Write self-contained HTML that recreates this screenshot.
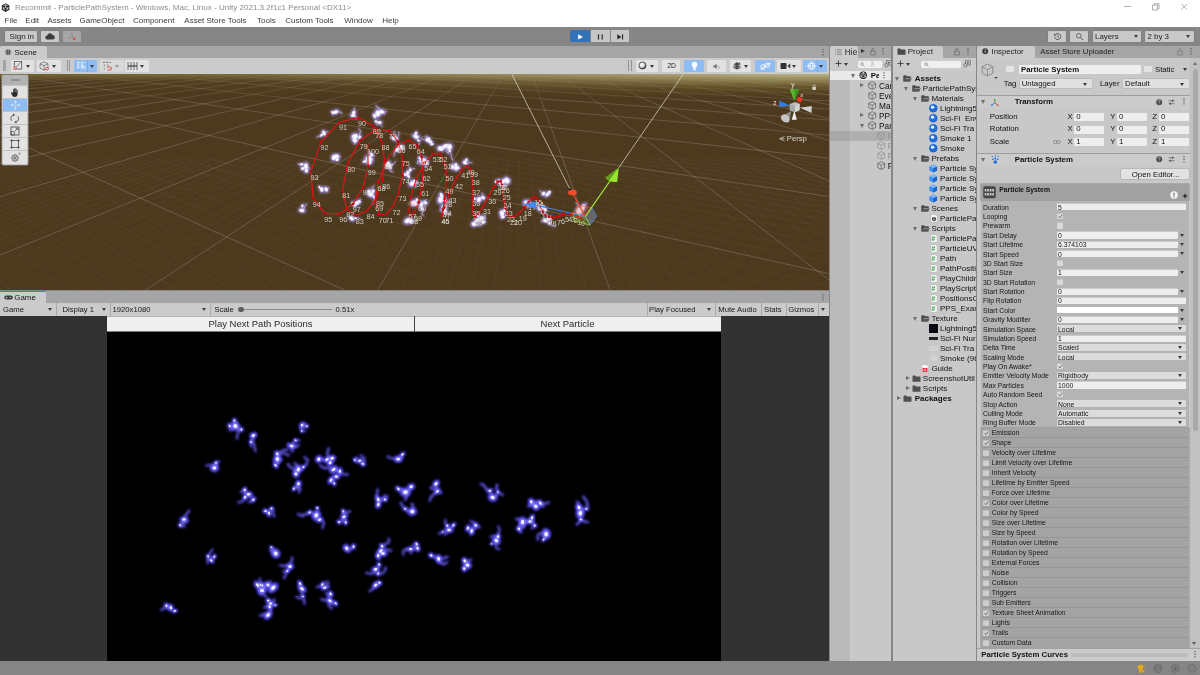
<!DOCTYPE html>
<html><head><meta charset="utf-8"><title>Unity</title>
<style>
*{box-sizing:border-box;margin:0;padding:0}
html,body{width:1200px;height:675px;overflow:hidden;background:#fff}
body{position:relative;font-family:"Liberation Sans",sans-serif;font-size:7.7px;color:#161616;line-height:1}
.abs{position:absolute}
.t{position:absolute;white-space:nowrap;line-height:10px;height:10px}
svg{position:absolute;display:block;overflow:visible}
#title{position:absolute;left:0;top:0;width:1200px;height:27px;background:#fff}
#title .cap{position:absolute;left:15px;top:2.9px;font-size:8.05px;color:#8c8c8c;line-height:10px;white-space:nowrap}
#title .mi{position:absolute;top:16px;font-size:8px;color:#3c3c3c;line-height:10px;white-space:nowrap}
#maintb{position:absolute;left:0;top:27px;width:1200px;height:18.5px;background:#868686}
.btn{position:absolute;background:#c9c9c9;border-radius:1px;box-shadow:0 0 0 .5px #7a7a7a}
.tabbar{position:absolute;background:#a5a5a5;height:12px}
.tab{position:absolute;top:0;height:12px;background:#cbcbcb;border-radius:2px 2px 0 0}
.tb{position:absolute;background:#cbcbcb}
.panel{position:absolute;background:#c8c8c8;overflow:hidden}
#scene{position:absolute;left:0;top:73.5px;width:828.5px;height:216px;overflow:hidden;background:#4c3a1d}
#game{position:absolute;left:0;top:315.5px;width:828.5px;height:345.5px;overflow:hidden;background:#323232}
#status{position:absolute;left:0;top:661px;width:1200px;height:14px;background:#858585}
.sb{position:absolute;background:#e2e2e2;border-radius:1px}
.sbb{position:absolute;background:#8fbcf3;border-radius:1px}
.fld{position:absolute;background:#eeeeee;border-radius:1px;box-shadow:inset 0 .5px 0 #a8a8a8}
.dd{position:absolute;background:#dfdfdf;border-radius:1px;box-shadow:0 0 0 .4px #b0b0b0}
.cb{position:absolute;background:#e6e6e6;border-radius:1px;box-shadow:inset 0 .5px 0 #b0b0b0}
.arr{position:absolute;width:0;height:0;border-left:2.9px solid transparent;border-right:2.9px solid transparent;border-top:3.5px solid #3c3c3c;margin-left:-.3px}
.arrr{position:absolute;width:0;height:0;border-top:2.7px solid transparent;border-bottom:2.7px solid transparent;border-left:4.2px solid #6e6e6e}
.arrd{position:absolute;width:0;height:0;border-left:2.8px solid transparent;border-right:2.800px solid transparent;border-top:4.3px solid #6e6e6e}
.b{font-weight:bold}
.ps{font-size:6.8px}
#root{position:absolute;left:0;top:0;width:1200px;height:675px;will-change:transform;overflow:hidden}

</style></head>
<body>
<div id="root">
<div id="title">
<svg style="left:1.4px;top:3px" width="9.2" height="9.2" viewBox="0 0 18 18"><path d="M9 .5 16.4 4.7v8.6L9 17.5 1.6 13.3V4.7z" fill="#222"/><path d="M9 3.2v5.2M9 8.6 4.3 11.4M9 8.6l4.7 2.8M5.2 5.2 9 3.2l3.8 2M4.3 7.5v3.9l3.4 2M13.7 7.5v3.9l-3.4 2" stroke="#fff" stroke-width="1.3" fill="none"/></svg>
<div class="cap">Recommit - ParticlePathSystem - Windows, Mac, Linux - Unity 2021.3.2f1c1 Personal &lt;DX11&gt;</div>
<div class="mi" style="left:4.5px">File</div>
<div class="mi" style="left:25.3px">Edit</div>
<div class="mi" style="left:47.5px">Assets</div>
<div class="mi" style="left:79.5px">GameObject</div>
<div class="mi" style="left:133px">Component</div>
<div class="mi" style="left:184.3px">Asset Store Tools</div>
<div class="mi" style="left:257px">Tools</div>
<div class="mi" style="left:285.3px">Custom Tools</div>
<div class="mi" style="left:344.3px">Window</div>
<div class="mi" style="left:382.3px">Help</div>
<svg style="left:1120px;top:0" width="80" height="14" viewBox="0 0 80 14"><path d="M4 6.5h7" stroke="#9a9a9a" stroke-width=".8"/><path d="M32.5 5h5v5h-5z M34 5v-1.3h5v5h-1.4" stroke="#9a9a9a" stroke-width=".8" fill="none"/><path d="M61.5 4l5.5 5.5M67 4l-5.5 5.5" stroke="#9a9a9a" stroke-width=".8"/></svg>
</div>
<div class="abs" style="left:0;top:27px;width:1200px;height:648px;background:#868686"></div>
<div id="maintb">
<div class="btn" style="left:5px;top:3.8px;width:32px;height:11.2px"></div>
<div class="t " style="left:9.6px;top:4.90px;font-size:8px;color:#222">Sign in</div>
<div class="btn" style="left:41px;top:3.8px;width:18px;height:11.2px"></div>
<svg style="left:45px;top:5.8px" width="10" height="7" viewBox="0 0 20 14"><path d="M5 13a4 4 0 0 1-.6-8A5.5 5.5 0 0 1 15 4.2 4.4 4.4 0 0 1 15.5 13z" fill="#3c3c3c"/></svg>
<div class="btn" style="left:63px;top:3.8px;width:18px;height:11.2px;background:#a6a6a6;box-shadow:none"></div>
<svg style="left:67px;top:5px" width="10" height="9" viewBox="0 0 20 18"><path d="M10 3v6M10 9 4.5 12M10 9l5 3" stroke="#8c8c8c" stroke-width="1.6" fill="none"/><circle cx="10" cy="3" r="1.8" fill="#8c8c8c"/><circle cx="4" cy="12" r="1.8" fill="#8c8c8c"/><path d="M12 11l5 5M17 11l-5 5" stroke="#d0393b" stroke-width="2"/></svg>
<div class="btn" style="left:570.3px;top:3.2px;width:20px;height:11.9px;background:#3473b6;box-shadow:none;border-radius:1px 0 0 1px"></div>
<div class="btn" style="left:590.7px;top:3.2px;width:19.5px;height:11.9px;background:#c6c6c6;box-shadow:none;border-radius:0"></div>
<div class="btn" style="left:610.7px;top:3.2px;width:18.5px;height:11.9px;background:#c6c6c6;box-shadow:none;border-radius:0 1px 1px 0"></div>
<svg style="left:570px;top:3.5px" width="60" height="11.6" viewBox="0 0 60 11.6"><path d="M8.2 3.2v5.4l4.8-2.7z" fill="#fff"/><path d="M28.5 3.3v5.2M32.2 3.3v5.2" stroke="#2a2a2a" stroke-width="1.2"/><path d="M47.3 3.2v5.4l4.2-2.7z" fill="#2a2a2a"/><path d="M52.6 3.2v5.4" stroke="#2a2a2a" stroke-width="1.1"/></svg>
<div class="btn" style="left:1048px;top:3.8px;width:18px;height:11px"></div>
<svg style="left:1052.5px;top:5px" width="9" height="9" viewBox="0 0 18 18"><path d="M3.5 9a6 6 0 1 0 2-4.4" stroke="#3c3c3c" stroke-width="1.5" fill="none"/><path d="M2.2 3.2l.6 4.2 4-1.2z" fill="#3c3c3c"/><path d="M9.5 5.5V9.3l2.6 1.6" stroke="#3c3c3c" stroke-width="1.4" fill="none"/></svg>
<div class="btn" style="left:1070px;top:3.8px;width:18.3px;height:11px"></div>
<svg style="left:1074.5px;top:5px" width="9" height="9" viewBox="0 0 18 18"><circle cx="7.5" cy="7.5" r="4.6" stroke="#4a4a4a" stroke-width="1.5" fill="none"/><path d="M11 11l5 5" stroke="#4a4a4a" stroke-width="1.8"/></svg>
<div class="btn" style="left:1092.5px;top:3.8px;width:48.8px;height:11px"></div>
<div class="t " style="left:1095px;top:4.80px;font-size:7.9px;color:#222">Layers</div>
<div class="arr" style="left:1134px;top:8px"></div>
<div class="btn" style="left:1145px;top:3.8px;width:48.7px;height:11px"></div>
<div class="t " style="left:1147.5px;top:4.80px;font-size:7.9px;color:#222">2 by 3</div>
<div class="arr" style="left:1186.5px;top:8px"></div>
</div>
<div class="tabbar" style="left:0;top:45.5px;width:828.5px"><div class="tab" style="left:0;width:47px"></div></div>
<svg style="left:4.5px;top:48.8px" width="6.4" height="6.4" viewBox="0 0 16 16"><path d="M.5 5.500h15M.5 10.500h15M5.500 .5v15M10.500 .5v15" stroke="#333" stroke-width="2"/></svg>
<div class="t " style="left:14.6px;top:47.60px;font-size:7.9px">Scene</div>
<svg style="left:822.3px;top:48.5px" width="2" height="7" viewBox="0 0 2 7"><rect x=".4" y=".2" width="1.2" height="1.2" fill="#555"/><rect x=".4" y="2.7" width="1.2" height="1.2" fill="#555"/><rect x=".4" y="5.2" width="1.2" height="1.2" fill="#555"/></svg>
<div class="tb" style="left:0;top:57.5px;width:828.5px;height:16px"></div>
<div class="tabbar" style="left:0;top:290.5px;width:828.5px"><div class="tab" style="left:0;width:45.5px;border-top:1px solid #3f7ecb;border-radius:1px 1px 0 0"></div></div>
<svg style="left:3.5px;top:294.8px" width="9" height="5" viewBox="0 0 18 10"><rect x=".5" y="1" width="17" height="8" rx="4" fill="#3a3a3a"/><circle cx="5" cy="5" r="1.7" fill="#cbcbcb"/><circle cx="12.5" cy="5" r="1.4" fill="#cbcbcb"/></svg>
<div class="t " style="left:14.3px;top:292.90px;font-size:7.9px">Game</div>
<svg style="left:822.3px;top:293.5px" width="2" height="7" viewBox="0 0 2 7"><rect x=".4" y=".2" width="1.2" height="1.2" fill="#555"/><rect x=".4" y="2.7" width="1.2" height="1.2" fill="#555"/><rect x=".4" y="5.2" width="1.2" height="1.2" fill="#555"/></svg>
<div class="tb" style="left:0;top:302.5px;width:828.5px;height:13px"></div>
<div class="abs" style="left:3px;top:60.1px;width:3.3px;height:10.9px;background:#a2a2a2;border-radius:.5px"></div>
<div class="sb" style="left:10.7px;top:59.5px;width:23.3px;height:12.3px"></div>
<div class="sb" style="left:36.5px;top:59.5px;width:24.0px;height:12.3px"></div>
<div class="abs" style="left:66.7px;top:59.8px;width:1.2px;height:11.700000000000001px;background:#939393"></div><div class="abs" style="left:69.0px;top:59.8px;width:1.2px;height:11.700000000000001px;background:#939393"></div>
<div class="sbb" style="left:73.8px;top:59.5px;width:23.2px;height:12.3px"></div>
<div class="sb" style="left:99.5px;top:59.5px;width:24.0px;height:12.3px;background:#d9d9d9"></div>
<div class="sb" style="left:125px;top:59.5px;width:23.5px;height:12.3px"></div>
<svg style="left:12.5px;top:61.3px" width="10" height="9" viewBox="0 0 20 18"><rect x="2.5" y="1" width="15" height="15" fill="none" stroke="#444" stroke-width="1.4"/><path d="M4 14.5 16 2.5" stroke="#444" stroke-width="1.3"/><circle cx="4" cy="14.5" r="2.6" fill="#e2e2e2" stroke="#d8343a" stroke-width="1.6"/></svg>
<div class="arr" style="left:26px;top:64.5px"></div>
<svg style="left:38.5px;top:60.8px" width="11" height="10" viewBox="0 0 22 20"><path d="M10 1.5 18 5.5v9L10 18.5 2 14.5v-9z M2 5.5l8 4 8-4M10 9.5v9" fill="none" stroke="#555" stroke-width="1.3"/><circle cx="16" cy="15.5" r="2.8" fill="#e2e2e2" stroke="#d8343a" stroke-width="1.6"/></svg>
<div class="arr" style="left:52px;top:64.5px"></div>
<svg style="left:76px;top:61px" width="11" height="10" viewBox="0 0 22 20"><path d="M2 3h5M9.5 3h5M17 3h3M2 8h5M9.5 8h5M2 13h5M4.500 1v14M12 1v9" stroke="#eef5ff" stroke-width="1.5"/><path d="M12.5 10v7M9.500 13l3-3 3 3M15.500 9l3.500 7" stroke="#fff" stroke-width="1.5" fill="none"/></svg>
<div class="abs" style="left:87.3px;top:59.5px;width:.6px;height:12.3px;background:#78a8e0"></div>
<div class="arr" style="left:90px;top:64.5px"></div>
<svg style="left:101.5px;top:61px" width="11" height="10" viewBox="0 0 22 20"><path d="M2 3h3M8 3h4M15 3h3M4.500 1v3M4.500 7v4M4.500 14v3M11.500 1v3M11.500 7v3" stroke="#666" stroke-width="1.5"/><path d="M10 12h6a3 3 0 0 1 0 6h-5" stroke="#d8343a" stroke-width="1.7" fill="none"/></svg>
<div class="arr" style="left:115.5px;top:64.5px;border-top-color:#9a9a9a"></div>
<svg style="left:126.500px;top:61px" width="11" height="10" viewBox="0 0 22 20"><path d="M2 2v16M20 2v16M8 2v16M14 2v16" stroke="#444" stroke-width="1.5"/><path d="M2 10h18" stroke="#444" stroke-width="2.4"/></svg>
<div class="arr" style="left:140px;top:64.5px"></div>
<div class="abs" style="left:628.3px;top:59.8px;width:1.2px;height:11.700000000000001px;background:#939393"></div><div class="abs" style="left:630.5999999999999px;top:59.8px;width:1.2px;height:11.700000000000001px;background:#939393"></div>
<div class="sb" style="left:635.6px;top:59.5px;width:22.9px;height:12.3px"></div>
<div class="sb" style="left:661.8px;top:59.5px;width:18.7px;height:12.3px"></div>
<div class="sbb" style="left:683.8px;top:59.5px;width:20.2px;height:12.3px"></div>
<div class="sb" style="left:707px;top:59.5px;width:19.4px;height:12.3px"></div>
<div class="sb" style="left:729.7px;top:59.5px;width:21.5px;height:12.3px"></div>
<div class="sbb" style="left:754.8px;top:59.5px;width:19.8px;height:12.3px"></div>
<div class="sb" style="left:777.4px;top:59.5px;width:23.3px;height:12.3px"></div>
<div class="sbb" style="left:803.4px;top:59.5px;width:23.4px;height:12.3px"></div>
<svg style="left:637.5px;top:61.2px" width="9" height="9" viewBox="0 0 18 18"><defs><radialGradient id="sh" cx=".38" cy=".35" r=".7"><stop offset="0" stop-color="#fff"/><stop offset=".55" stop-color="#ddd"/><stop offset="1" stop-color="#222"/></radialGradient></defs><circle cx="9" cy="9" r="7" fill="url(#sh)" stroke="#333" stroke-width="1.6"/></svg>
<div class="arr" style="left:650px;top:64.5px"></div>
<div class="t " style="left:667.3px;top:61.20px;font-size:6.8px;color:#222;letter-spacing:-.2px">2D</div>
<svg style="left:689.500px;top:60.8px" width="9" height="10" viewBox="0 0 18 20"><path d="M9 1.5a5.800 5.800 0 0 0-3.300 10.600v2.400h6.600v-2.400A5.800 5.800 0 0 0 9 1.500z" fill="#fff"/><rect x="6.200" y="15.500" width="5.600" height="2.800" rx="1" fill="#fff"/></svg>
<svg style="left:712px;top:61.5px" width="10" height="9" viewBox="0 0 20 18"><path d="M3 6.500h3l3.500-3v10.500l-3.500-3H3z" fill="#777"/><path d="M12 6.500v4M14.500 9v5" stroke="#999" stroke-width="1.4"/></svg>
<svg style="left:731.500px;top:61.2px" width="10" height="10" viewBox="0 0 20 20"><path d="M2 13l8 3.500 8-3.500M2 9.500l8 3.500 8-3.500M10 3 4 6.500l6 3 6-3z" fill="#444" stroke="#444" stroke-width="1"/><path d="M14 2.500l3 2-3 2" fill="#444"/></svg>
<div class="arr" style="left:743.800px;top:64.5px"></div>
<svg style="left:758.500px;top:61px" width="13" height="10" viewBox="0 0 26 20"><ellipse cx="8" cy="12" rx="4.200" ry="4.600" fill="none" stroke="#fff" stroke-width="1.8"/><ellipse cx="16.500" cy="8.500" rx="4.600" ry="4.200" fill="none" stroke="#fff" stroke-width="1.8"/><path d="M3 17 23 3.500" stroke="#fff" stroke-width="1.8"/></svg>
<svg style="left:779.500px;top:61.8px" width="11" height="8" viewBox="0 0 22 16"><rect x="1" y="2" width="12" height="12" rx="1.500" fill="#333"/><path d="M15 8l5.500-5v10z" fill="#333"/></svg>
<div class="arr" style="left:792.500px;top:64.5px"></div>
<svg style="left:806px;top:60.8px" width="11" height="10" viewBox="0 0 22 20"><circle cx="11" cy="10" r="6.500" fill="none" stroke="#fff" stroke-width="1.700"/><ellipse cx="11" cy="10" rx="2.800" ry="6.500" fill="none" stroke="#fff" stroke-width="1.300"/><path d="M4.500 10h13M11 1v4M1.500 10h3M17.500 10h3" stroke="#fff" stroke-width="1.400"/></svg>
<div class="abs" style="left:817.200px;top:59.5px;width:.6px;height:12.3px;background:#78a8e0"></div>
<div class="arr" style="left:819.700px;top:64.5px"></div>
<div id="scene"><svg style="left:0;top:0" width="828.5" height="216" viewBox="0 0 828.5 216">
<defs><linearGradient id="fogv" x1="0" y1="0" x2="0" y2="1"><stop offset="0" stop-color="#7d6c34" stop-opacity=".8"/><stop offset="1" stop-color="#8a7a3c" stop-opacity="0"/></linearGradient><linearGradient id="fogv2" x1="0" y1="0" x2="0" y2="1"><stop offset="0" stop-color="#b9b189" stop-opacity=".97"/><stop offset=".28" stop-color="#9c8f5c" stop-opacity=".8"/><stop offset=".6" stop-color="#7d6a36" stop-opacity=".4"/><stop offset="1" stop-color="#6a5527" stop-opacity="0"/></linearGradient><linearGradient id="fogh" x1="0" y1="0" x2="1" y2="0"><stop offset="0" stop-color="#fff" stop-opacity="0"/><stop offset=".3" stop-color="#fff" stop-opacity=".12"/><stop offset=".7" stop-color="#fff" stop-opacity=".7"/><stop offset=".92" stop-color="#fff" stop-opacity="1"/></linearGradient><mask id="mh"><rect x="0" y="0" width="829" height="30" fill="url(#fogh)"/></mask><filter id="bl" x="-50%" y="-50%" width="200%" height="200%"><feGaussianBlur stdDeviation=".8"/></filter><filter id="bl2" x="-50%" y="-50%" width="200%" height="200%"><feGaussianBlur stdDeviation=".5"/></filter><filter id="bl3" x="-50%" y="-50%" width="200%" height="200%"><feGaussianBlur stdDeviation=".3"/></filter></defs>
<rect x="0" y="0" width="828.5" height="216" fill="#4d3a1e"/>
<path d="M-7889.7 1646.5L-45.1 82.8M-5758.8 1245.7L-42.8 84.5M-6869.8 1500.8L-40.4 86.3M-8536.1 1883.3L-17.7 83.8M-6013.0 1378.4L-14.9 85.5M-7322.9 1695.8L7.1 83.1M-5283.1 1274.1L10.2 84.8M-7908.4 1947.9L35.1 84.0M-5492.9 1413.1L38.6 85.7M-6721.8 1748.2L59.5 83.3M-4785.8 1303.8L63.5 85.0M-5752.8 1585.1L83.7 82.6M-7236.8 2016.9L88.0 84.2M-4946.6 1449.5L92.4 86.0M-6083.0 1803.8L112.2 83.5M-4265.3 1334.8L116.9 85.2M-3682.0 1236.7L141.1 84.5M-4371.9 1487.8L146.3 86.2M-5402.9 1863.0L165.1 83.7M-3720.0 1367.4L170.6 85.4M-4505.4 1679.3L188.7 83.0M-3163.9 1264.6L194.5 84.7M-3766.7 1528.1L200.5 86.4M-4677.5 1926.2L218.1 83.9M-3148.1 1401.5L224.5 85.7M-2622.5 1293.9L248.1 84.9M-3128.5 1570.6L264.4 82.5M-3902.1 1993.7L271.4 84.2M-2547.6 1437.3L278.5 85.9M-3103.7 1785.1L294.4 83.4M-2056.0 1324.5L301.8 85.1M-2454.5 1615.6L317.1 82.7M-1634.6 1227.7L324.8 84.4M-1916.2 1475.0L332.8 86.1M-1462.7 1356.5L355.8 85.4M-1741.5 1663.1L370.0 82.9M-1075.3 1255.3L378.5 84.6M-1251.6 1514.6L387.3 86.3M-1516.9 1904.9L400.9 83.9M-840.6 1390.1L410.0 85.6M-986.1 1713.4L423.1 83.1M-491.0 1284.1L432.4 84.8M-551.0 1556.4L442.1 86.6M-187.7 1425.3L464.4 85.8M-184.4 1766.8L476.3 83.4M120.1 1314.2L486.5 85.1M188.6 1600.5L497.9 82.6M384.2 1218.9L508.3 84.3M498.4 1462.4L519.1 86.0M667.9 1823.6L529.8 83.6M759.9 1345.8L540.8 85.3M970.5 1647.1L551.1 82.8M1220.4 1501.3L573.9 86.3M1576.0 1884.2L583.5 83.8M1430.4 1378.8L595.4 85.5M1798.4 1696.5L604.5 83.1M1609.2 1274.5L616.5 84.8M1981.1 1542.4L629.0 86.5M2545.3 1948.8L637.4 84.0M2133.9 1413.5L650.1 85.7M2676.6 1748.9L658.1 83.3M2783.8 1585.7L678.4 82.6M3582.3 2017.9L691.6 84.2M2873.0 1450.0L705.1 86.0M3609.7 1804.6L711.9 83.5M2948.3 1335.3L725.6 85.2M3631.9 1631.5L731.9 82.8M3012.8 1237.0L745.9 84.5M3650.3 1488.3L760.3 86.2M4603.1 1863.8L765.9 83.7M4529.5 1680.0L785.6 83.0M3679.0 1265.0L800.4 84.7M4469.0 1528.6L815.7 86.4M5662.8 1927.0L820.1 83.9M4418.2 1401.9L835.5 85.7M5481.0 1731.3L839.6 83.2M4375.2 1294.3L855.2 84.9M5332.3 1571.2L858.7 82.5M6795.7 1994.6L874.6 84.2M-181.6 82.5L101.1 1661.2M-155.7 83.6L594.0 1930.0M-130.3 82.9L926.8 1753.1M-103.8 84.0L1204.5 1605.6M-78.7 83.3L1847.4 1855.7M-53.8 82.7L2059.5 1691.4M-26.6 83.7L2880.3 1970.7M-2.0 83.0L3009.2 1786.8M25.7 84.1L3116.3 1633.8M74.3 82.8L4089.1 1722.7M102.7 83.8L5263.6 2013.1M126.6 83.2L5171.6 1821.7M150.3 82.5L5095.4 1663.0M179.3 83.6L6383.7 1932.5M202.7 82.9L6193.9 1755.2M232.3 84.0L6035.4 1607.3M255.5 83.3L7418.8 1858.0M278.5 82.7L7145.2 1693.3M331.4 83.1L8378.1 1788.9M362.2 84.1L8032.9 1635.6M384.7 83.4L9755.8 1895.7M407.0 82.8L9269.8 1724.7M438.4 83.8L7275.8 1299.4M460.4 83.2L5286.4 907.9M482.2 82.5L4202.2 694.5M514.2 83.6L3519.9 560.3M535.8 82.9L3050.9 468.0M589.7 83.3L2448.2 349.3M610.8 82.7L2243.1 309.0M644.1 83.7L2077.4 276.4M664.9 83.1L1940.8 249.5M698.8 84.1L1826.2 226.9M719.4 83.5L1728.8 207.8M739.7 82.8L1644.9 191.2M774.2 83.9L1571.9 176.9M794.3 83.2L1507.7 164.3M849.3 83.6L1400.4 143.1M868.9 82.9L1355.1 134.2" stroke="#fff" stroke-opacity=".058" stroke-width=".55" fill="none"/>
<path d="M-63.8 80.3L-14.5 71.0M-61.5 103.7L84.7 70.2M-86.6 148.0L182.1 69.3M-91.3 218.0L271.0 71.2M13.5 302.7L367.8 70.3M332.9 293.4L463.0 69.5M634.9 284.6L557.6 71.4M889.4 252.2L652.1 70.5M904.9 140.7L745.0 69.7M898.7 88.3L845.2 71.6M17.1 68.6L464.3 269.9M241.2 68.7L883.8 211.8M465.9 68.8L878.1 129.8M691.1 68.9L888.5 90.8" stroke="#fff" stroke-opacity="0.24" stroke-width=".75" fill="none"/>
<path d="M-68.9 28.9L-32.6 25.3M-68.3 34.9L21.9 25.0M-67.6 42.4L69.0 25.6M-66.6 51.8L123.4 25.3M-65.4 63.9L177.2 25.1M-14.5 71.0L226.0 25.6M84.7 70.2L279.7 25.4M182.1 69.3L332.8 25.1M271.0 71.2L383.4 25.7M367.8 70.3L436.3 25.4M463.0 69.5L488.8 25.2M557.6 71.4L541.0 25.8M652.1 70.5L593.3 25.5M745.0 69.7L645.0 25.2M845.2 71.6L699.0 25.8M895.4 60.6L750.6 25.6M893.4 43.3L801.6 25.3M892.0 31.6L852.2 25.0M-60.7 33.6L17.1 68.6M44.0 24.8L241.2 68.7M168.4 24.8L465.9 68.8M293.0 24.8L691.1 68.9M417.8 24.9L884.1 66.1M542.7 24.9L881.2 49.9M667.8 24.9L886.7 38.8M793.1 25.0L884.1 30.0" stroke="#fff" stroke-opacity="0.2" stroke-width=".75" fill="none"/>
<path d="M-64.8 7.4L-35.9 5.5M-64.2 9.7L-0.8 5.4M-63.5 12.4L29.3 5.7M-62.7 15.4L64.3 5.6M-61.8 19.0L99.1 5.4M-60.7 23.1L129.9 5.7M-32.6 25.3L164.7 5.6M21.9 25.0L199.2 5.5M69.0 25.6L230.7 5.7M123.4 25.3L265.1 5.6M177.2 25.1L299.4 5.5M226.0 25.6L333.4 5.4M279.7 25.4L365.7 5.6M332.8 25.1L399.7 5.5M383.4 25.7L433.5 5.4M436.3 25.4L466.5 5.6M488.8 25.2L500.2 5.5M541.0 25.8L533.6 5.4M593.3 25.5L567.4 5.7M645.0 25.2L600.8 5.6M699.0 25.8L634.0 5.5M750.6 25.6L668.4 5.7M801.6 25.3L701.5 5.6M852.2 25.0L734.4 5.5M891.0 23.1L769.5 5.7M890.2 16.7L802.4 5.6M889.6 11.7L835.0 5.5M889.2 7.6L867.4 5.4M-43.3 5.3L44.0 24.8M36.9 5.3L168.4 24.8M117.1 5.3L293.0 24.8M197.4 5.4L417.8 24.9M276.1 5.2L542.7 24.9M356.2 5.3L667.8 24.9M436.5 5.3L793.1 25.0M516.8 5.3L888.1 23.5M597.1 5.3L885.9 18.1M677.6 5.3L884.2 13.6M758.1 5.3L887.1 10.1M838.7 5.4L885.5 6.9" stroke="#fff" stroke-opacity="0.14" stroke-width=".75" fill="none"/>
<path d="M-60.9 -6.8L-46.3 -7.4M-60.4 -5.9L-23.9 -7.4M-63.9 -4.8L-4.9 -7.3M-63.4 -3.8L17.4 -7.4M-63.0 -2.6L39.7 -7.4M-62.4 -1.4L61.8 -7.5M-61.8 -0.0L81.2 -7.4M-61.2 1.5L103.3 -7.4M-60.5 3.1L125.4 -7.5M-65.4 5.3L145.0 -7.4M-35.9 5.5L167.0 -7.4M-0.8 5.4L189.0 -7.5M29.3 5.7L208.9 -7.4M64.3 5.6L230.8 -7.4M99.1 5.4L252.6 -7.4M129.9 5.7L272.8 -7.3M164.7 5.6L294.6 -7.4M199.2 5.5L316.3 -7.4M230.7 5.7L337.9 -7.5M265.1 5.6L358.4 -7.4M299.4 5.5L380.0 -7.4M333.4 5.4L401.6 -7.5M365.7 5.6L422.4 -7.4M399.7 5.5L443.8 -7.4M433.5 5.4L465.2 -7.5M466.5 5.6L486.3 -7.4M500.2 5.5L507.7 -7.4M533.6 5.4L529.0 -7.4M567.4 5.7L550.4 -7.4M600.8 5.6L571.6 -7.4M634.0 5.5L592.8 -7.4M668.4 5.7L614.4 -7.3M701.5 5.6L635.6 -7.4M734.4 5.5L656.6 -7.4M769.5 5.7L677.6 -7.5M802.4 5.6L699.6 -7.4M835.0 5.5L720.5 -7.4M867.4 5.4L741.4 -7.5M888.8 4.3L763.7 -7.4M891.7 1.8L784.5 -7.4M891.2 -0.7L805.2 -7.5M890.7 -2.7L827.8 -7.4M890.3 -4.5L848.5 -7.4M890.0 -6.1L869.1 -7.4M-60.1 1.6L-43.3 5.3M-49.9 -7.5L36.9 5.3M1.2 -7.5L117.1 5.3M52.3 -7.5L197.4 5.4M102.7 -7.5L276.1 5.2M153.7 -7.5L356.2 5.3M204.7 -7.5L436.5 5.3M255.8 -7.5L516.8 5.3M306.9 -7.5L597.1 5.3M358.1 -7.5L677.6 5.3M409.2 -7.5L758.1 5.3M460.4 -7.5L838.7 5.4M510.0 -7.5L888.0 4.4M561.1 -7.5L886.6 2.0M612.3 -7.5L885.3 0.0M663.5 -7.5L887.3 -1.7M714.7 -7.5L886.2 -3.3M765.9 -7.5L887.9 -4.7M817.2 -7.5L886.9 -6.0M868.5 -7.5L888.4 -7.1" stroke="#fff" stroke-opacity="0.085" stroke-width=".75" fill="none"/>
<path d="M-62.7 -9.8L-59.4 -9.9M-62.3 -9.1L-39.5 -9.9M-61.9 -8.4L-19.6 -10.0M-61.4 -7.6L0.1 -10.0M-46.3 -7.4L17.1 -9.9M-23.9 -7.4L36.8 -10.0M-4.9 -7.3L56.5 -10.0M17.4 -7.4L73.7 -9.9M39.7 -7.4L93.4 -9.9M61.8 -7.5L113.0 -10.0M81.2 -7.4L130.3 -9.9M103.3 -7.4L149.9 -9.9M125.4 -7.5L169.4 -10.0M145.0 -7.4L187.0 -9.9M167.0 -7.4L206.5 -9.9M189.0 -7.5L225.9 -10.0M208.9 -7.4L245.3 -10.0M230.8 -7.4L263.2 -9.9M252.6 -7.4L282.5 -10.0M272.8 -7.3L301.8 -10.0M294.6 -7.4L319.9 -9.9M316.3 -7.4L339.1 -9.9M337.9 -7.5L358.3 -10.0M358.4 -7.4L376.6 -9.9M380.0 -7.4L395.7 -9.9M401.6 -7.5L414.8 -10.0M422.4 -7.4L433.4 -9.9M443.8 -7.4L452.4 -9.9M465.2 -7.5L471.4 -10.0M486.3 -7.4L490.2 -9.9M507.7 -7.4L509.2 -9.9M529.0 -7.4L528.1 -10.0M550.4 -7.4L546.9 -10.0M571.6 -7.4L565.9 -9.9M592.8 -7.4L584.8 -10.0M614.4 -7.3L603.5 -10.0M635.6 -7.4L622.8 -9.9M656.6 -7.4L641.5 -9.9M677.6 -7.5L660.1 -10.0M699.6 -7.4L679.6 -9.9M720.5 -7.4L698.2 -9.9M741.4 -7.5L716.8 -10.0M763.7 -7.4L736.5 -9.9M784.5 -7.4L755.0 -9.9M805.2 -7.5L773.5 -10.0M827.8 -7.4L791.9 -10.0M848.5 -7.4L811.9 -9.9M869.1 -7.4L830.3 -10.0M889.7 -7.5L848.6 -10.0M889.4 -8.7L868.8 -9.9M889.1 -9.8L887.1 -9.9M-60.2 -9.0L-49.9 -7.5M-21.5 -10.0L1.2 -7.5M23.4 -10.0L52.3 -7.5M68.7 -10.0L102.7 -7.5M114.0 -10.0L153.7 -7.5M159.4 -10.0L204.7 -7.5M204.7 -10.0L255.8 -7.5M250.1 -10.0L306.9 -7.5M295.5 -10.0L358.1 -7.5M341.0 -10.0L409.2 -7.5M385.2 -10.0L460.4 -7.5M430.6 -10.0L510.0 -7.5M476.0 -10.0L561.1 -7.5M521.5 -10.0L612.3 -7.5M566.9 -10.0L663.5 -7.5M612.4 -10.0L714.7 -7.5M657.9 -10.0L765.9 -7.5M703.4 -10.0L817.2 -7.5M748.9 -10.0L868.5 -7.5M792.5 -10.0L887.4 -8.1M838.0 -10.0L886.5 -9.1M883.5 -10.0L887.9 -9.9" stroke="#fff" stroke-opacity="0.045" stroke-width=".75" fill="none"/>
<rect x="0" y="0" width="829" height="7" fill="url(#fogv)"/>
<rect x="0" y="0" width="829" height="24" fill="url(#fogv2)" mask="url(#mh)"/>
<path d="M512 0.5L570 115.19999999999999M683 0.5L618.7 93.80000000000001" stroke="#e8e4da" stroke-opacity=".85" stroke-width=".8" fill="none"/>
<g filter="url(#bl)"><path d="M335.7 38.0L335.2 37.7L332.9 38.5M332.9 38.5L332.6 40.9M335.7 38.0L338.8 37.8L341.1 38.1L341.8 39.8" stroke="#a28de0" stroke-width="2.32" stroke-opacity="0.50" fill="none" stroke-linecap="round" stroke-linejoin="round"/><ellipse cx="335.7" cy="38.0" rx="4.26" ry="2.93" transform="rotate(155 335.7 38.0)" fill="#a28de0" fill-opacity="0.85"/><ellipse cx="332.9" cy="38.5" rx="3.18" ry="2.02" transform="rotate(26 332.9 38.5)" fill="#a28de0" fill-opacity="0.85"/><path d="M353.0 41.5L353.5 40.4L353.7 38.8M353.7 38.8L354.5 36.5L354.3 33.7M353.0 41.5L355.5 43.1L356.5 45.0M353.0 41.5L355.2 41.5L356.6 43.4" stroke="#a28de0" stroke-width="2.31" stroke-opacity="0.50" fill="none" stroke-linecap="round" stroke-linejoin="round"/><ellipse cx="353.0" cy="41.5" rx="3.84" ry="2.40" transform="rotate(173 353.0 41.5)" fill="#a28de0" fill-opacity="0.85"/><ellipse cx="353.7" cy="38.8" rx="3.39" ry="2.84" transform="rotate(100 353.7 38.8)" fill="#a28de0" fill-opacity="0.85"/><path d="M377.8 39.5L378.6 39.2L381.6 37.9M377.8 39.5L376.5 42.0L374.5 42.0M381.6 37.9L379.8 34.9L377.5 33.0L375.7 31.5M381.6 37.9L384.5 39.9M381.6 37.9L383.9 38.6L386.3 37.3" stroke="#a28de0" stroke-width="2.64" stroke-opacity="0.50" fill="none" stroke-linecap="round" stroke-linejoin="round"/><ellipse cx="377.8" cy="39.5" rx="5.31" ry="4.31" transform="rotate(99 377.8 39.5)" fill="#a28de0" fill-opacity="0.85"/><ellipse cx="381.6" cy="37.9" rx="4.13" ry="3.32" transform="rotate(178 381.6 37.9)" fill="#a28de0" fill-opacity="0.85"/><ellipse cx="374.5" cy="42.0" rx="3.78" ry="2.53" transform="rotate(68 374.5 42.0)" fill="#a28de0" fill-opacity="0.85"/><path d="M379.5 48.5L376.8 47.8L376.0 47.4M376.0 47.4L378.6 48.8L380.3 50.8L382.4 52.7M376.0 47.4L375.9 49.9L377.2 51.0M379.5 48.5L378.2 49.6" stroke="#a28de0" stroke-width="2.17" stroke-opacity="0.50" fill="none" stroke-linecap="round" stroke-linejoin="round"/><ellipse cx="379.5" cy="48.5" rx="3.77" ry="2.43" transform="rotate(0 379.5 48.5)" fill="#a28de0" fill-opacity="0.85"/><ellipse cx="376.0" cy="47.4" rx="2.44" ry="1.73" transform="rotate(18 376.0 47.4)" fill="#a28de0" fill-opacity="0.85"/><path d="M324.0 59.0L322.1 60.7L321.6 61.0M321.6 61.0L320.0 63.0M321.6 61.0L320.6 62.3L318.3 62.0L316.5 63.4M324.0 59.0L326.5 57.8L328.4 57.7" stroke="#a28de0" stroke-width="2.13" stroke-opacity="0.50" fill="none" stroke-linecap="round" stroke-linejoin="round"/><ellipse cx="324.0" cy="59.0" rx="4.18" ry="2.72" transform="rotate(66 324.0 59.0)" fill="#a28de0" fill-opacity="0.85"/><ellipse cx="321.6" cy="61.0" rx="2.56" ry="1.95" transform="rotate(139 321.6 61.0)" fill="#a28de0" fill-opacity="0.85"/><path d="M355.0 62.5L356.6 62.8L359.7 63.2M355.0 62.5L355.5 65.7L354.8 66.4M359.7 63.2L359.0 65.6L356.4 67.4L354.3 70.2M355.0 62.5L355.6 64.9M359.7 63.2L359.6 60.5L360.6 57.3L358.8 54.9" stroke="#a28de0" stroke-width="2.61" stroke-opacity="0.50" fill="none" stroke-linecap="round" stroke-linejoin="round"/><ellipse cx="355.0" cy="62.5" rx="5.17" ry="4.31" transform="rotate(164 355.0 62.5)" fill="#a28de0" fill-opacity="0.85"/><ellipse cx="359.7" cy="63.2" rx="2.81" ry="2.09" transform="rotate(135 359.7 63.2)" fill="#a28de0" fill-opacity="0.85"/><ellipse cx="354.8" cy="66.4" rx="4.02" ry="3.36" transform="rotate(32 354.8 66.4)" fill="#a28de0" fill-opacity="0.85"/><path d="M334.0 83.5L335.7 83.1L336.7 82.2M334.0 83.5L335.8 84.6L337.2 85.7M334.0 83.5L331.9 85.5M337.2 85.7L337.0 83.8L338.7 82.7L340.5 83.1M334.0 83.5L332.3 85.0" stroke="#a28de0" stroke-width="2.32" stroke-opacity="0.50" fill="none" stroke-linecap="round" stroke-linejoin="round"/><ellipse cx="334.0" cy="83.5" rx="4.36" ry="3.71" transform="rotate(98 334.0 83.5)" fill="#a28de0" fill-opacity="0.85"/><ellipse cx="336.7" cy="82.2" rx="3.91" ry="3.21" transform="rotate(11 336.7 82.2)" fill="#a28de0" fill-opacity="0.85"/><ellipse cx="337.2" cy="85.7" rx="2.98" ry="2.38" transform="rotate(162 337.2 85.7)" fill="#a28de0" fill-opacity="0.85"/><path d="M306.0 92.2L306.1 94.9L306.4 96.5M306.0 92.2L304.5 92.9L302.7 94.5M306.0 92.2L303.8 91.4L301.4 90.3M306.0 92.2L307.8 93.3L309.6 94.2M306.0 92.2L303.7 90.3L301.3 90.3L298.0 90.1" stroke="#a28de0" stroke-width="2.63" stroke-opacity="0.50" fill="none" stroke-linecap="round" stroke-linejoin="round"/><ellipse cx="306.0" cy="92.2" rx="4.88" ry="3.29" transform="rotate(91 306.0 92.2)" fill="#a28de0" fill-opacity="0.85"/><ellipse cx="306.4" cy="96.5" rx="3.49" ry="3.01" transform="rotate(94 306.4 96.5)" fill="#a28de0" fill-opacity="0.85"/><ellipse cx="302.7" cy="94.5" rx="2.81" ry="2.46" transform="rotate(167 302.7 94.5)" fill="#a28de0" fill-opacity="0.85"/><ellipse cx="301.4" cy="90.3" rx="2.79" ry="1.84" transform="rotate(161 301.4 90.3)" fill="#a28de0" fill-opacity="0.85"/><path d="M321.7 115.5L319.8 114.8L319.4 113.2M321.7 115.5L324.3 114.6L326.2 115.4M319.4 113.2L320.4 115.5M326.2 115.4L328.9 113.6" stroke="#a28de0" stroke-width="2.40" stroke-opacity="0.50" fill="none" stroke-linecap="round" stroke-linejoin="round"/><ellipse cx="321.7" cy="115.5" rx="4.02" ry="2.92" transform="rotate(73 321.7 115.5)" fill="#a28de0" fill-opacity="0.85"/><ellipse cx="319.4" cy="113.2" rx="2.36" ry="1.48" transform="rotate(64 319.4 113.2)" fill="#a28de0" fill-opacity="0.85"/><ellipse cx="326.2" cy="115.4" rx="3.86" ry="2.71" transform="rotate(66 326.2 115.4)" fill="#a28de0" fill-opacity="0.85"/><path d="M301.8 136.5L303.1 133.5L302.4 131.7M301.8 136.5L300.1 137.6M301.8 136.5L303.8 135.6L304.9 132.6L306.4 130.1" stroke="#a28de0" stroke-width="2.41" stroke-opacity="0.50" fill="none" stroke-linecap="round" stroke-linejoin="round"/><ellipse cx="301.8" cy="136.5" rx="4.40" ry="2.72" transform="rotate(16 301.8 136.5)" fill="#a28de0" fill-opacity="0.85"/><ellipse cx="302.4" cy="131.7" rx="2.44" ry="1.77" transform="rotate(124 302.4 131.7)" fill="#a28de0" fill-opacity="0.85"/><path d="M351.5 144.5L354.3 144.2L355.6 144.2M355.6 144.2L357.3 143.9L360.1 144.6M351.5 144.5L352.6 146.2M355.6 144.2L353.4 144.8" stroke="#a28de0" stroke-width="2.16" stroke-opacity="0.50" fill="none" stroke-linecap="round" stroke-linejoin="round"/><ellipse cx="351.5" cy="144.5" rx="4.27" ry="3.01" transform="rotate(32 351.5 144.5)" fill="#a28de0" fill-opacity="0.85"/><ellipse cx="355.6" cy="144.2" rx="2.11" ry="1.43" transform="rotate(3 355.6 144.2)" fill="#a28de0" fill-opacity="0.85"/><path d="M356.7 129.0L355.0 130.0L352.5 129.0M356.7 129.0L357.8 128.9L359.5 127.4M356.7 129.0L356.2 130.6L354.9 131.6M359.5 127.4L360.5 125.2M359.5 127.4L358.9 130.1M359.5 127.4L357.4 127.1L355.6 128.3L354.3 130.8" stroke="#a28de0" stroke-width="2.12" stroke-opacity="0.50" fill="none" stroke-linecap="round" stroke-linejoin="round"/><ellipse cx="356.7" cy="129.0" rx="4.09" ry="3.13" transform="rotate(175 356.7 129.0)" fill="#a28de0" fill-opacity="0.85"/><ellipse cx="352.5" cy="129.0" rx="2.14" ry="1.90" transform="rotate(44 352.5 129.0)" fill="#a28de0" fill-opacity="0.85"/><ellipse cx="359.5" cy="127.4" rx="2.77" ry="1.96" transform="rotate(56 359.5 127.4)" fill="#a28de0" fill-opacity="0.85"/><ellipse cx="354.9" cy="131.6" rx="2.79" ry="1.99" transform="rotate(0 354.9 131.6)" fill="#a28de0" fill-opacity="0.85"/><path d="M370.7 120.2L370.9 119.8L369.0 117.8M370.7 120.2L371.2 119.5L373.3 117.1M370.7 120.2L372.9 121.8L373.8 122.9M373.8 122.9L374.6 124.8L373.6 127.5L372.7 129.8M369.0 117.8L371.8 116.6L372.1 113.7L374.0 111.6M369.0 117.8L371.3 117.2" stroke="#a28de0" stroke-width="2.42" stroke-opacity="0.50" fill="none" stroke-linecap="round" stroke-linejoin="round"/><ellipse cx="370.7" cy="120.2" rx="4.81" ry="4.09" transform="rotate(19 370.7 120.2)" fill="#a28de0" fill-opacity="0.85"/><ellipse cx="369.0" cy="117.8" rx="3.74" ry="2.95" transform="rotate(101 369.0 117.8)" fill="#a28de0" fill-opacity="0.85"/><ellipse cx="373.3" cy="117.1" rx="2.96" ry="2.38" transform="rotate(113 373.3 117.1)" fill="#a28de0" fill-opacity="0.85"/><ellipse cx="373.8" cy="122.9" rx="2.40" ry="1.44" transform="rotate(88 373.8 122.9)" fill="#a28de0" fill-opacity="0.85"/><path d="M369.0 85.2L366.8 87.2L364.8 87.5M369.0 85.2L369.2 84.0L371.6 80.9M369.0 85.2L368.6 85.8L369.3 88.7M364.8 87.5L367.8 87.9M371.6 80.9L369.6 81.5M371.6 80.9L374.5 81.6M371.6 80.9L370.7 78.3L367.5 77.0" stroke="#a28de0" stroke-width="2.62" stroke-opacity="0.50" fill="none" stroke-linecap="round" stroke-linejoin="round"/><ellipse cx="369.0" cy="85.2" rx="5.59" ry="5.00" transform="rotate(36 369.0 85.2)" fill="#a28de0" fill-opacity="0.85"/><ellipse cx="364.8" cy="87.5" rx="3.38" ry="2.04" transform="rotate(169 364.8 87.5)" fill="#a28de0" fill-opacity="0.85"/><ellipse cx="371.6" cy="80.9" rx="2.90" ry="2.45" transform="rotate(83 371.6 80.9)" fill="#a28de0" fill-opacity="0.85"/><ellipse cx="369.3" cy="88.7" rx="3.73" ry="2.74" transform="rotate(174 369.3 88.7)" fill="#a28de0" fill-opacity="0.85"/><path d="M388.0 90.5L388.5 91.1L390.1 92.3M390.1 92.3L391.4 90.3L393.6 89.9L395.5 87.4M390.1 92.3L389.7 94.5L390.3 97.3L393.0 98.0M390.1 92.3L391.1 95.1M390.1 92.3L390.8 95.4" stroke="#a28de0" stroke-width="2.28" stroke-opacity="0.50" fill="none" stroke-linecap="round" stroke-linejoin="round"/><ellipse cx="388.0" cy="90.5" rx="4.90" ry="3.47" transform="rotate(106 388.0 90.5)" fill="#a28de0" fill-opacity="0.85"/><ellipse cx="390.1" cy="92.3" rx="3.42" ry="2.33" transform="rotate(77 390.1 92.3)" fill="#a28de0" fill-opacity="0.85"/><path d="M393.5 64.2L394.7 64.0L396.2 64.6M396.2 64.6L397.8 62.3L399.1 61.0L398.6 58.1M396.2 64.6L394.2 64.6M393.5 64.2L393.9 62.0L393.6 60.0L394.7 57.3" stroke="#a28de0" stroke-width="2.14" stroke-opacity="0.50" fill="none" stroke-linecap="round" stroke-linejoin="round"/><ellipse cx="393.5" cy="64.2" rx="3.50" ry="2.79" transform="rotate(47 393.5 64.2)" fill="#a28de0" fill-opacity="0.85"/><ellipse cx="396.2" cy="64.6" rx="3.57" ry="2.74" transform="rotate(54 396.2 64.6)" fill="#a28de0" fill-opacity="0.85"/><path d="M400.5 73.0L398.6 74.0L397.0 75.8M397.0 75.8L398.9 76.4M400.5 73.0L400.8 75.6L398.8 77.7M397.0 75.8L395.2 77.2L394.2 78.8L394.1 82.0" stroke="#a28de0" stroke-width="2.36" stroke-opacity="0.50" fill="none" stroke-linecap="round" stroke-linejoin="round"/><ellipse cx="400.5" cy="73.0" rx="4.69" ry="3.52" transform="rotate(23 400.5 73.0)" fill="#a28de0" fill-opacity="0.85"/><ellipse cx="397.0" cy="75.8" rx="3.18" ry="2.73" transform="rotate(113 397.0 75.8)" fill="#a28de0" fill-opacity="0.85"/><path d="M416.0 62.5L415.8 61.3L416.0 59.1M416.0 62.5L417.8 65.5L418.3 66.5M416.0 62.5L417.0 65.4L418.4 66.6L420.8 66.4M418.3 66.5L419.5 69.1L418.8 70.7L417.3 71.6M416.0 62.5L415.6 64.6" stroke="#a28de0" stroke-width="2.25" stroke-opacity="0.50" fill="none" stroke-linecap="round" stroke-linejoin="round"/><ellipse cx="416.0" cy="62.5" rx="4.80" ry="3.24" transform="rotate(23 416.0 62.5)" fill="#a28de0" fill-opacity="0.85"/><ellipse cx="416.0" cy="59.1" rx="2.62" ry="2.12" transform="rotate(115 416.0 59.1)" fill="#a28de0" fill-opacity="0.85"/><ellipse cx="418.3" cy="66.5" rx="2.31" ry="1.43" transform="rotate(20 418.3 66.5)" fill="#a28de0" fill-opacity="0.85"/><path d="M430.0 67.5L429.5 65.2L428.7 65.1M430.0 67.5L430.8 69.2L432.0 70.2M430.0 67.5L427.5 66.1L427.0 66.0M427.0 66.0L429.1 68.5M428.7 65.1L426.4 66.0L424.3 66.0L421.9 64.2M430.0 67.5L432.0 69.9M428.7 65.1L426.6 64.3L426.0 61.7" stroke="#a28de0" stroke-width="2.45" stroke-opacity="0.50" fill="none" stroke-linecap="round" stroke-linejoin="round"/><ellipse cx="430.0" cy="67.5" rx="4.20" ry="2.80" transform="rotate(34 430.0 67.5)" fill="#a28de0" fill-opacity="0.85"/><ellipse cx="428.7" cy="65.1" rx="3.27" ry="2.62" transform="rotate(75 428.7 65.1)" fill="#a28de0" fill-opacity="0.85"/><ellipse cx="432.0" cy="70.2" rx="2.86" ry="1.84" transform="rotate(171 432.0 70.2)" fill="#a28de0" fill-opacity="0.85"/><ellipse cx="427.0" cy="66.0" rx="3.25" ry="2.16" transform="rotate(71 427.0 66.0)" fill="#a28de0" fill-opacity="0.85"/><path d="M440.7 74.5L442.1 72.6L444.5 72.6M440.7 74.5L438.5 76.5M444.5 72.6L447.2 74.9L446.6 77.6L448.0 79.3" stroke="#a28de0" stroke-width="2.74" stroke-opacity="0.50" fill="none" stroke-linecap="round" stroke-linejoin="round"/><ellipse cx="440.7" cy="74.5" rx="5.06" ry="3.67" transform="rotate(15 440.7 74.5)" fill="#a28de0" fill-opacity="0.85"/><ellipse cx="444.5" cy="72.6" rx="4.02" ry="3.09" transform="rotate(159 444.5 72.6)" fill="#a28de0" fill-opacity="0.85"/><path d="M449.5 73.0L448.8 74.7L449.7 77.0M449.5 73.0L448.7 71.2L445.9 71.8M449.5 73.0L448.3 71.4L444.9 71.4M449.7 77.0L448.4 79.1M449.7 77.0L451.1 79.8L451.3 83.2L452.8 86.0" stroke="#a28de0" stroke-width="2.60" stroke-opacity="0.50" fill="none" stroke-linecap="round" stroke-linejoin="round"/><ellipse cx="449.5" cy="73.0" rx="4.71" ry="3.97" transform="rotate(107 449.5 73.0)" fill="#a28de0" fill-opacity="0.85"/><ellipse cx="449.7" cy="77.0" rx="2.51" ry="1.55" transform="rotate(170 449.7 77.0)" fill="#a28de0" fill-opacity="0.85"/><ellipse cx="445.9" cy="71.8" rx="4.22" ry="2.67" transform="rotate(149 445.9 71.8)" fill="#a28de0" fill-opacity="0.85"/><path d="M423.0 87.0L422.2 86.4L420.2 84.2M423.0 87.0L425.1 88.1L425.9 88.6M420.2 84.2L419.4 86.3L417.5 87.6L417.5 89.6M425.9 88.6L425.1 85.4M423.0 87.0L424.4 89.2" stroke="#a28de0" stroke-width="2.57" stroke-opacity="0.50" fill="none" stroke-linecap="round" stroke-linejoin="round"/><ellipse cx="423.0" cy="87.0" rx="5.57" ry="4.96" transform="rotate(178 423.0 87.0)" fill="#a28de0" fill-opacity="0.85"/><ellipse cx="420.2" cy="84.2" rx="3.35" ry="2.14" transform="rotate(31 420.2 84.2)" fill="#a28de0" fill-opacity="0.85"/><ellipse cx="425.9" cy="88.6" rx="3.95" ry="3.43" transform="rotate(83 425.9 88.6)" fill="#a28de0" fill-opacity="0.85"/><path d="M407.5 99.2L408.2 98.4L410.3 95.9M407.5 99.2L408.2 100.4L408.5 102.4M407.5 99.2L405.9 100.9L404.8 100.6M410.3 95.9L409.4 92.9M407.5 99.2L409.6 101.3M407.5 99.2L407.4 97.2M410.3 95.9L412.1 95.1L414.8 94.6" stroke="#a28de0" stroke-width="2.26" stroke-opacity="0.50" fill="none" stroke-linecap="round" stroke-linejoin="round"/><ellipse cx="407.5" cy="99.2" rx="4.76" ry="2.86" transform="rotate(120 407.5 99.2)" fill="#a28de0" fill-opacity="0.85"/><ellipse cx="410.3" cy="95.9" rx="2.60" ry="2.12" transform="rotate(115 410.3 95.9)" fill="#a28de0" fill-opacity="0.85"/><ellipse cx="408.5" cy="102.4" rx="3.37" ry="2.06" transform="rotate(63 408.5 102.4)" fill="#a28de0" fill-opacity="0.85"/><ellipse cx="404.8" cy="100.6" rx="2.52" ry="1.55" transform="rotate(61 404.8 100.6)" fill="#a28de0" fill-opacity="0.85"/><path d="M412.7 109.5L414.3 107.6L414.9 107.3M412.7 109.5L413.1 111.6L415.5 113.0M412.7 109.5L411.7 106.9M414.9 107.3L412.2 107.8L410.9 110.9" stroke="#a28de0" stroke-width="2.75" stroke-opacity="0.50" fill="none" stroke-linecap="round" stroke-linejoin="round"/><ellipse cx="412.7" cy="109.5" rx="5.39" ry="3.90" transform="rotate(159 412.7 109.5)" fill="#a28de0" fill-opacity="0.85"/><ellipse cx="414.9" cy="107.3" rx="3.24" ry="2.69" transform="rotate(3 414.9 107.3)" fill="#a28de0" fill-opacity="0.85"/><path d="M414.5 129.0L414.9 126.5L417.1 126.0M417.1 126.0L416.1 127.8M414.5 129.0L411.5 129.1L408.8 129.9M414.5 129.0L412.4 131.8M414.5 129.0L413.2 132.1" stroke="#a28de0" stroke-width="2.63" stroke-opacity="0.50" fill="none" stroke-linecap="round" stroke-linejoin="round"/><ellipse cx="414.5" cy="129.0" rx="4.81" ry="4.21" transform="rotate(8 414.5 129.0)" fill="#a28de0" fill-opacity="0.85"/><ellipse cx="417.1" cy="126.0" rx="2.75" ry="2.15" transform="rotate(57 417.1 126.0)" fill="#a28de0" fill-opacity="0.85"/><path d="M407.5 146.5L408.4 146.7L410.6 147.3M410.6 147.3L413.9 147.8M407.5 146.5L407.3 149.9" stroke="#a28de0" stroke-width="2.52" stroke-opacity="0.50" fill="none" stroke-linecap="round" stroke-linejoin="round"/><ellipse cx="407.5" cy="146.5" rx="5.38" ry="3.54" transform="rotate(147 407.5 146.5)" fill="#a28de0" fill-opacity="0.85"/><ellipse cx="410.6" cy="147.3" rx="3.84" ry="3.28" transform="rotate(159 410.6 147.3)" fill="#a28de0" fill-opacity="0.85"/><path d="M421.5 130.5L423.9 129.5L425.5 128.7M421.5 130.5L421.7 131.5L422.1 134.7M425.5 128.7L422.5 127.6L420.4 127.0M425.5 128.7L425.2 131.3M421.5 130.5L422.2 128.6L423.4 127.0L426.3 125.8M422.1 134.7L422.7 137.6L421.9 139.4L423.4 141.9" stroke="#a28de0" stroke-width="2.54" stroke-opacity="0.50" fill="none" stroke-linecap="round" stroke-linejoin="round"/><ellipse cx="421.5" cy="130.5" rx="4.25" ry="2.69" transform="rotate(125 421.5 130.5)" fill="#a28de0" fill-opacity="0.85"/><ellipse cx="425.5" cy="128.7" rx="2.95" ry="2.55" transform="rotate(24 425.5 128.7)" fill="#a28de0" fill-opacity="0.85"/><ellipse cx="422.1" cy="134.7" rx="3.18" ry="2.68" transform="rotate(52 422.1 134.7)" fill="#a28de0" fill-opacity="0.85"/><path d="M444.0 136.5L443.5 135.6L444.0 133.2M444.0 133.2L442.1 134.6L440.0 136.0M444.0 136.5L447.1 138.2L449.2 140.9" stroke="#a28de0" stroke-width="2.62" stroke-opacity="0.50" fill="none" stroke-linecap="round" stroke-linejoin="round"/><ellipse cx="444.0" cy="136.5" rx="4.30" ry="3.59" transform="rotate(30 444.0 136.5)" fill="#a28de0" fill-opacity="0.85"/><ellipse cx="444.0" cy="133.2" rx="4.22" ry="3.20" transform="rotate(21 444.0 133.2)" fill="#a28de0" fill-opacity="0.85"/><path d="M440.7 125.5L441.7 123.0L441.5 121.1M440.7 125.5L442.4 125.4L444.8 126.0M441.5 121.1L440.7 123.1M444.8 126.0L446.8 126.9L449.4 129.3" stroke="#a28de0" stroke-width="2.52" stroke-opacity="0.50" fill="none" stroke-linecap="round" stroke-linejoin="round"/><ellipse cx="440.7" cy="125.5" rx="5.48" ry="4.38" transform="rotate(105 440.7 125.5)" fill="#a28de0" fill-opacity="0.85"/><ellipse cx="441.5" cy="121.1" rx="4.05" ry="2.43" transform="rotate(56 441.5 121.1)" fill="#a28de0" fill-opacity="0.85"/><ellipse cx="444.8" cy="126.0" rx="3.98" ry="2.56" transform="rotate(6 444.8 126.0)" fill="#a28de0" fill-opacity="0.85"/><path d="M456.5 94.0L454.1 93.6L452.6 93.1M456.5 94.0L456.2 92.4L455.8 91.1M455.8 91.1L457.0 93.5L460.2 94.5M456.5 94.0L453.9 92.8L452.8 89.9M452.6 93.1L450.9 90.4" stroke="#a28de0" stroke-width="2.51" stroke-opacity="0.50" fill="none" stroke-linecap="round" stroke-linejoin="round"/><ellipse cx="456.5" cy="94.0" rx="4.64" ry="3.61" transform="rotate(161 456.5 94.0)" fill="#a28de0" fill-opacity="0.85"/><ellipse cx="452.6" cy="93.1" rx="3.49" ry="2.73" transform="rotate(104 452.6 93.1)" fill="#a28de0" fill-opacity="0.85"/><ellipse cx="455.8" cy="91.1" rx="3.41" ry="2.55" transform="rotate(93 455.8 91.1)" fill="#a28de0" fill-opacity="0.85"/><path d="M465.0 88.5L466.2 86.1L466.3 85.8M465.0 88.5L466.5 90.6M466.3 85.8L467.0 84.2M465.0 88.5L467.2 90.0L469.7 88.6L472.0 88.7M466.3 85.8L468.4 87.2" stroke="#a28de0" stroke-width="2.22" stroke-opacity="0.50" fill="none" stroke-linecap="round" stroke-linejoin="round"/><ellipse cx="465.0" cy="88.5" rx="3.61" ry="3.13" transform="rotate(22 465.0 88.5)" fill="#a28de0" fill-opacity="0.85"/><ellipse cx="466.3" cy="85.8" rx="2.16" ry="1.90" transform="rotate(167 466.3 85.8)" fill="#a28de0" fill-opacity="0.85"/><path d="M474.0 150.0L474.8 148.6L476.5 146.6M474.0 150.0L474.3 147.0M474.0 150.0L475.7 151.1L478.1 151.9L481.0 152.0" stroke="#a28de0" stroke-width="2.28" stroke-opacity="0.50" fill="none" stroke-linecap="round" stroke-linejoin="round"/><ellipse cx="474.0" cy="150.0" rx="4.01" ry="3.59" transform="rotate(166 474.0 150.0)" fill="#a28de0" fill-opacity="0.85"/><ellipse cx="476.5" cy="146.6" rx="3.02" ry="2.30" transform="rotate(151 476.5 146.6)" fill="#a28de0" fill-opacity="0.85"/><path d="M481.0 144.5L481.1 145.4L483.4 148.1M481.0 144.5L480.6 145.0L478.3 146.2M481.0 144.5L478.2 142.1L477.1 141.8M483.4 148.1L481.6 147.7L479.4 149.9L477.3 150.4M481.0 144.5L482.9 144.9L484.7 144.1L485.1 141.0" stroke="#a28de0" stroke-width="2.41" stroke-opacity="0.50" fill="none" stroke-linecap="round" stroke-linejoin="round"/><ellipse cx="481.0" cy="144.5" rx="4.86" ry="3.84" transform="rotate(146 481.0 144.5)" fill="#a28de0" fill-opacity="0.85"/><ellipse cx="483.4" cy="148.1" rx="3.29" ry="2.59" transform="rotate(149 483.4 148.1)" fill="#a28de0" fill-opacity="0.85"/><ellipse cx="478.3" cy="146.2" rx="3.38" ry="2.13" transform="rotate(52 478.3 146.2)" fill="#a28de0" fill-opacity="0.85"/><ellipse cx="477.1" cy="141.8" rx="2.51" ry="2.07" transform="rotate(18 477.1 141.8)" fill="#a28de0" fill-opacity="0.85"/><path d="M479.0 125.5L477.0 125.0L474.6 124.6M479.0 125.5L480.6 125.1L483.1 123.7M479.0 125.5L477.0 127.3M483.1 123.7L482.4 122.0L483.1 120.2L481.7 118.7M479.0 125.5L480.7 123.5L483.7 123.0" stroke="#a28de0" stroke-width="2.24" stroke-opacity="0.50" fill="none" stroke-linecap="round" stroke-linejoin="round"/><ellipse cx="479.0" cy="125.5" rx="4.04" ry="3.59" transform="rotate(107 479.0 125.5)" fill="#a28de0" fill-opacity="0.85"/><ellipse cx="474.6" cy="124.6" rx="2.16" ry="1.67" transform="rotate(93 474.6 124.6)" fill="#a28de0" fill-opacity="0.85"/><ellipse cx="483.1" cy="123.7" rx="3.39" ry="2.87" transform="rotate(29 483.1 123.7)" fill="#a28de0" fill-opacity="0.85"/><path d="M507.0 106.5L505.9 107.5L503.8 107.1M503.8 107.1L500.3 107.0L497.9 105.5M507.0 106.5L506.1 110.0L505.5 112.6M507.0 106.5L510.2 105.6M507.0 106.5L504.8 109.3L503.3 111.8" stroke="#a28de0" stroke-width="2.71" stroke-opacity="0.50" fill="none" stroke-linecap="round" stroke-linejoin="round"/><ellipse cx="507.0" cy="106.5" rx="5.15" ry="3.80" transform="rotate(58 507.0 106.5)" fill="#a28de0" fill-opacity="0.85"/><ellipse cx="503.8" cy="107.1" rx="4.14" ry="2.80" transform="rotate(124 503.8 107.1)" fill="#a28de0" fill-opacity="0.85"/><path d="M500.0 108.0L500.3 108.5L502.1 110.0M500.0 108.0L497.5 108.0L495.7 107.9M500.0 108.0L500.1 111.0M500.0 108.0L502.2 108.4L503.2 111.0L502.8 113.3" stroke="#a28de0" stroke-width="2.26" stroke-opacity="0.50" fill="none" stroke-linecap="round" stroke-linejoin="round"/><ellipse cx="500.0" cy="108.0" rx="4.24" ry="3.36" transform="rotate(35 500.0 108.0)" fill="#a28de0" fill-opacity="0.85"/><ellipse cx="502.1" cy="110.0" rx="2.61" ry="1.73" transform="rotate(19 502.1 110.0)" fill="#a28de0" fill-opacity="0.85"/><ellipse cx="495.7" cy="107.9" rx="2.36" ry="1.44" transform="rotate(70 495.7 107.9)" fill="#a28de0" fill-opacity="0.85"/><path d="M502.0 139.5L504.1 137.9L504.4 136.7M502.0 139.5L502.6 141.8L502.8 143.0M502.0 139.5L502.9 136.7L505.0 134.5L507.5 133.4M504.4 136.7L502.5 136.9L499.7 137.9M502.8 143.0L501.1 141.3" stroke="#a28de0" stroke-width="2.37" stroke-opacity="0.50" fill="none" stroke-linecap="round" stroke-linejoin="round"/><ellipse cx="502.0" cy="139.5" rx="4.76" ry="3.75" transform="rotate(82 502.0 139.5)" fill="#a28de0" fill-opacity="0.85"/><ellipse cx="504.4" cy="136.7" rx="2.45" ry="1.97" transform="rotate(74 504.4 136.7)" fill="#a28de0" fill-opacity="0.85"/><ellipse cx="502.8" cy="143.0" rx="3.53" ry="2.31" transform="rotate(167 502.8 143.0)" fill="#a28de0" fill-opacity="0.85"/><path d="M526.5 129.0L527.1 129.3L529.3 128.3M529.3 128.3L531.2 129.4L532.9 130.3L534.0 132.5M529.3 128.3L528.3 131.0L527.9 134.1" stroke="#a28de0" stroke-width="2.53" stroke-opacity="0.50" fill="none" stroke-linecap="round" stroke-linejoin="round"/><ellipse cx="526.5" cy="129.0" rx="4.64" ry="4.15" transform="rotate(22 526.5 129.0)" fill="#a28de0" fill-opacity="0.85"/><ellipse cx="529.3" cy="128.3" rx="3.39" ry="2.09" transform="rotate(64 529.3 128.3)" fill="#a28de0" fill-opacity="0.85"/><path d="M547.5 120.2L545.4 120.9L543.6 119.6M547.5 120.2L549.5 120.2L549.4 118.1M543.6 119.6L542.5 120.9M549.4 118.1L549.9 120.1L548.3 121.7L545.7 123.0M543.6 119.6L541.2 118.6L539.8 116.6" stroke="#a28de0" stroke-width="2.29" stroke-opacity="0.50" fill="none" stroke-linecap="round" stroke-linejoin="round"/><ellipse cx="547.5" cy="120.2" rx="3.75" ry="2.51" transform="rotate(141 547.5 120.2)" fill="#a28de0" fill-opacity="0.85"/><ellipse cx="543.6" cy="119.6" rx="3.30" ry="2.66" transform="rotate(127 543.6 119.6)" fill="#a28de0" fill-opacity="0.85"/><ellipse cx="549.4" cy="118.1" rx="2.65" ry="2.13" transform="rotate(177 549.4 118.1)" fill="#a28de0" fill-opacity="0.85"/><path d="M545.7 146.5L546.9 145.3L549.0 144.6M545.7 146.5L546.7 148.1L549.5 149.3M545.7 146.5L544.1 145.6L541.4 147.5M549.5 149.3L550.7 151.0L553.5 152.1L555.5 152.2M549.0 144.6L550.4 142.1" stroke="#a28de0" stroke-width="2.42" stroke-opacity="0.50" fill="none" stroke-linecap="round" stroke-linejoin="round"/><ellipse cx="545.7" cy="146.5" rx="4.39" ry="2.75" transform="rotate(176 545.7 146.5)" fill="#a28de0" fill-opacity="0.85"/><ellipse cx="549.0" cy="144.6" rx="3.39" ry="2.59" transform="rotate(162 549.0 144.6)" fill="#a28de0" fill-opacity="0.85"/><ellipse cx="549.5" cy="149.3" rx="2.53" ry="1.74" transform="rotate(115 549.5 149.3)" fill="#a28de0" fill-opacity="0.85"/><path d="M540.5 134.2L542.3 134.2L545.1 135.4M545.1 135.4L541.9 135.6M545.1 135.4L544.9 138.5" stroke="#a28de0" stroke-width="2.43" stroke-opacity="0.50" fill="none" stroke-linecap="round" stroke-linejoin="round"/><ellipse cx="540.5" cy="134.2" rx="4.65" ry="3.97" transform="rotate(1 540.5 134.2)" fill="#a28de0" fill-opacity="0.85"/><ellipse cx="545.1" cy="135.4" rx="3.28" ry="2.52" transform="rotate(84 545.1 135.4)" fill="#a28de0" fill-opacity="0.85"/><path d="M579.0 137.5L580.6 137.5L581.3 135.5M579.0 137.5L578.6 140.1L579.1 140.4M581.3 135.5L579.9 138.2M579.1 140.4L579.0 142.9M581.3 135.5L582.8 133.9L584.3 131.8L586.5 129.4M581.3 135.5L580.1 137.9L580.2 140.6" stroke="#a28de0" stroke-width="2.54" stroke-opacity="0.50" fill="none" stroke-linecap="round" stroke-linejoin="round"/><ellipse cx="579.0" cy="137.5" rx="4.63" ry="3.69" transform="rotate(175 579.0 137.5)" fill="#a28de0" fill-opacity="0.85"/><ellipse cx="581.3" cy="135.5" rx="3.58" ry="2.51" transform="rotate(143 581.3 135.5)" fill="#a28de0" fill-opacity="0.85"/><ellipse cx="579.1" cy="140.4" rx="3.53" ry="2.44" transform="rotate(57 579.1 140.4)" fill="#a28de0" fill-opacity="0.85"/><path d="M583.0 133.5L579.8 134.1L578.6 135.6M583.0 133.5L583.4 136.4L581.8 139.2M578.6 135.6L577.3 133.0L578.0 131.1L576.3 128.8" stroke="#a28de0" stroke-width="2.49" stroke-opacity="0.50" fill="none" stroke-linecap="round" stroke-linejoin="round"/><ellipse cx="583.0" cy="133.5" rx="5.14" ry="3.35" transform="rotate(113 583.0 133.5)" fill="#a28de0" fill-opacity="0.85"/><ellipse cx="578.6" cy="135.6" rx="3.34" ry="2.87" transform="rotate(119 578.6 135.6)" fill="#a28de0" fill-opacity="0.85"/></g><g filter="url(#bl2)"><path d="M335.7 38.0L335.2 37.7L332.9 38.5M332.9 38.5L332.6 40.9M335.7 38.0L338.8 37.8L341.1 38.1L341.8 39.8" stroke="#ebe5ff" stroke-width="0.72" stroke-opacity="0.62" fill="none" stroke-linecap="round" stroke-linejoin="round"/><ellipse cx="335.7" cy="38.0" rx="2.66" ry="1.83" transform="rotate(155 335.7 38.0)" fill="#ebe5ff" fill-opacity=".9"/><ellipse cx="332.9" cy="38.5" rx="1.99" ry="1.26" transform="rotate(26 332.9 38.5)" fill="#ebe5ff" fill-opacity=".9"/><path d="M353.0 41.5L353.5 40.4L353.7 38.8M353.7 38.8L354.5 36.5L354.3 33.7M353.0 41.5L355.5 43.1L356.5 45.0M353.0 41.5L355.2 41.5L356.6 43.4" stroke="#ebe5ff" stroke-width="0.72" stroke-opacity="0.62" fill="none" stroke-linecap="round" stroke-linejoin="round"/><ellipse cx="353.0" cy="41.5" rx="2.40" ry="1.50" transform="rotate(173 353.0 41.5)" fill="#ebe5ff" fill-opacity=".9"/><ellipse cx="353.7" cy="38.8" rx="2.12" ry="1.77" transform="rotate(100 353.7 38.8)" fill="#ebe5ff" fill-opacity=".9"/><path d="M377.8 39.5L378.6 39.2L381.6 37.9M377.8 39.5L376.5 42.0L374.5 42.0M381.6 37.9L379.8 34.9L377.5 33.0L375.7 31.5M381.6 37.9L384.5 39.9M381.6 37.9L383.9 38.6L386.3 37.3" stroke="#ebe5ff" stroke-width="0.82" stroke-opacity="0.62" fill="none" stroke-linecap="round" stroke-linejoin="round"/><ellipse cx="377.8" cy="39.5" rx="3.32" ry="2.69" transform="rotate(99 377.8 39.5)" fill="#ebe5ff" fill-opacity=".9"/><ellipse cx="381.6" cy="37.9" rx="2.58" ry="2.08" transform="rotate(178 381.6 37.9)" fill="#ebe5ff" fill-opacity=".9"/><ellipse cx="374.5" cy="42.0" rx="2.36" ry="1.58" transform="rotate(68 374.5 42.0)" fill="#ebe5ff" fill-opacity=".9"/><path d="M379.5 48.5L376.8 47.8L376.0 47.4M376.0 47.4L378.6 48.8L380.3 50.8L382.4 52.7M376.0 47.4L375.9 49.9L377.2 51.0M379.5 48.5L378.2 49.6" stroke="#ebe5ff" stroke-width="0.68" stroke-opacity="0.62" fill="none" stroke-linecap="round" stroke-linejoin="round"/><ellipse cx="379.5" cy="48.5" rx="2.35" ry="1.52" transform="rotate(0 379.5 48.5)" fill="#ebe5ff" fill-opacity=".9"/><ellipse cx="376.0" cy="47.4" rx="1.53" ry="1.08" transform="rotate(18 376.0 47.4)" fill="#ebe5ff" fill-opacity=".9"/><path d="M324.0 59.0L322.1 60.7L321.6 61.0M321.6 61.0L320.0 63.0M321.6 61.0L320.6 62.3L318.3 62.0L316.5 63.4M324.0 59.0L326.5 57.8L328.4 57.7" stroke="#ebe5ff" stroke-width="0.67" stroke-opacity="0.62" fill="none" stroke-linecap="round" stroke-linejoin="round"/><ellipse cx="324.0" cy="59.0" rx="2.61" ry="1.70" transform="rotate(66 324.0 59.0)" fill="#ebe5ff" fill-opacity=".9"/><ellipse cx="321.6" cy="61.0" rx="1.60" ry="1.22" transform="rotate(139 321.6 61.0)" fill="#ebe5ff" fill-opacity=".9"/><path d="M355.0 62.5L356.6 62.8L359.7 63.2M355.0 62.5L355.5 65.7L354.8 66.4M359.7 63.2L359.0 65.6L356.4 67.4L354.3 70.2M355.0 62.5L355.6 64.9M359.7 63.2L359.6 60.5L360.6 57.3L358.8 54.9" stroke="#ebe5ff" stroke-width="0.82" stroke-opacity="0.62" fill="none" stroke-linecap="round" stroke-linejoin="round"/><ellipse cx="355.0" cy="62.5" rx="3.23" ry="2.70" transform="rotate(164 355.0 62.5)" fill="#ebe5ff" fill-opacity=".9"/><ellipse cx="359.7" cy="63.2" rx="1.76" ry="1.31" transform="rotate(135 359.7 63.2)" fill="#ebe5ff" fill-opacity=".9"/><ellipse cx="354.8" cy="66.4" rx="2.51" ry="2.10" transform="rotate(32 354.8 66.4)" fill="#ebe5ff" fill-opacity=".9"/><path d="M334.0 83.5L335.7 83.1L336.7 82.2M334.0 83.5L335.8 84.6L337.2 85.7M334.0 83.5L331.9 85.5M337.2 85.7L337.0 83.8L338.7 82.7L340.5 83.1M334.0 83.5L332.3 85.0" stroke="#ebe5ff" stroke-width="0.73" stroke-opacity="0.62" fill="none" stroke-linecap="round" stroke-linejoin="round"/><ellipse cx="334.0" cy="83.5" rx="2.73" ry="2.32" transform="rotate(98 334.0 83.5)" fill="#ebe5ff" fill-opacity=".9"/><ellipse cx="336.7" cy="82.2" rx="2.44" ry="2.01" transform="rotate(11 336.7 82.2)" fill="#ebe5ff" fill-opacity=".9"/><ellipse cx="337.2" cy="85.7" rx="1.86" ry="1.49" transform="rotate(162 337.2 85.7)" fill="#ebe5ff" fill-opacity=".9"/><path d="M306.0 92.2L306.1 94.9L306.4 96.5M306.0 92.2L304.5 92.9L302.7 94.5M306.0 92.2L303.8 91.4L301.4 90.3M306.0 92.2L307.8 93.3L309.6 94.2M306.0 92.2L303.7 90.3L301.3 90.3L298.0 90.1" stroke="#ebe5ff" stroke-width="0.82" stroke-opacity="0.62" fill="none" stroke-linecap="round" stroke-linejoin="round"/><ellipse cx="306.0" cy="92.2" rx="3.05" ry="2.06" transform="rotate(91 306.0 92.2)" fill="#ebe5ff" fill-opacity=".9"/><ellipse cx="306.4" cy="96.5" rx="2.18" ry="1.88" transform="rotate(94 306.4 96.5)" fill="#ebe5ff" fill-opacity=".9"/><ellipse cx="302.7" cy="94.5" rx="1.76" ry="1.54" transform="rotate(167 302.7 94.5)" fill="#ebe5ff" fill-opacity=".9"/><ellipse cx="301.4" cy="90.3" rx="1.74" ry="1.15" transform="rotate(161 301.4 90.3)" fill="#ebe5ff" fill-opacity=".9"/><path d="M321.7 115.5L319.8 114.8L319.4 113.2M321.7 115.5L324.3 114.6L326.2 115.4M319.4 113.2L320.4 115.5M326.2 115.4L328.9 113.6" stroke="#ebe5ff" stroke-width="0.75" stroke-opacity="0.62" fill="none" stroke-linecap="round" stroke-linejoin="round"/><ellipse cx="321.7" cy="115.5" rx="2.51" ry="1.82" transform="rotate(73 321.7 115.5)" fill="#ebe5ff" fill-opacity=".9"/><ellipse cx="319.4" cy="113.2" rx="1.47" ry="0.93" transform="rotate(64 319.4 113.2)" fill="#ebe5ff" fill-opacity=".9"/><ellipse cx="326.2" cy="115.4" rx="2.41" ry="1.69" transform="rotate(66 326.2 115.4)" fill="#ebe5ff" fill-opacity=".9"/><path d="M301.8 136.5L303.1 133.5L302.4 131.7M301.8 136.5L300.1 137.6M301.8 136.5L303.8 135.6L304.9 132.6L306.4 130.1" stroke="#ebe5ff" stroke-width="0.75" stroke-opacity="0.62" fill="none" stroke-linecap="round" stroke-linejoin="round"/><ellipse cx="301.8" cy="136.5" rx="2.75" ry="1.70" transform="rotate(16 301.8 136.5)" fill="#ebe5ff" fill-opacity=".9"/><ellipse cx="302.4" cy="131.7" rx="1.52" ry="1.11" transform="rotate(124 302.4 131.7)" fill="#ebe5ff" fill-opacity=".9"/><path d="M351.5 144.5L354.3 144.2L355.6 144.2M355.6 144.2L357.3 143.9L360.1 144.6M351.5 144.5L352.6 146.2M355.6 144.2L353.4 144.8" stroke="#ebe5ff" stroke-width="0.67" stroke-opacity="0.62" fill="none" stroke-linecap="round" stroke-linejoin="round"/><ellipse cx="351.5" cy="144.5" rx="2.67" ry="1.88" transform="rotate(32 351.5 144.5)" fill="#ebe5ff" fill-opacity=".9"/><ellipse cx="355.6" cy="144.2" rx="1.32" ry="0.89" transform="rotate(3 355.6 144.2)" fill="#ebe5ff" fill-opacity=".9"/><path d="M356.7 129.0L355.0 130.0L352.5 129.0M356.7 129.0L357.8 128.9L359.5 127.4M356.7 129.0L356.2 130.6L354.9 131.6M359.5 127.4L360.5 125.2M359.5 127.4L358.9 130.1M359.5 127.4L357.4 127.1L355.6 128.3L354.3 130.8" stroke="#ebe5ff" stroke-width="0.66" stroke-opacity="0.62" fill="none" stroke-linecap="round" stroke-linejoin="round"/><ellipse cx="356.7" cy="129.0" rx="2.56" ry="1.95" transform="rotate(175 356.7 129.0)" fill="#ebe5ff" fill-opacity=".9"/><ellipse cx="352.5" cy="129.0" rx="1.34" ry="1.19" transform="rotate(44 352.5 129.0)" fill="#ebe5ff" fill-opacity=".9"/><ellipse cx="359.5" cy="127.4" rx="1.73" ry="1.22" transform="rotate(56 359.5 127.4)" fill="#ebe5ff" fill-opacity=".9"/><ellipse cx="354.9" cy="131.6" rx="1.74" ry="1.24" transform="rotate(0 354.9 131.6)" fill="#ebe5ff" fill-opacity=".9"/><path d="M370.7 120.2L370.9 119.8L369.0 117.8M370.7 120.2L371.2 119.5L373.3 117.1M370.7 120.2L372.9 121.8L373.8 122.9M373.8 122.9L374.6 124.8L373.6 127.5L372.7 129.8M369.0 117.8L371.8 116.6L372.1 113.7L374.0 111.6M369.0 117.8L371.3 117.2" stroke="#ebe5ff" stroke-width="0.75" stroke-opacity="0.62" fill="none" stroke-linecap="round" stroke-linejoin="round"/><ellipse cx="370.7" cy="120.2" rx="3.01" ry="2.56" transform="rotate(19 370.7 120.2)" fill="#ebe5ff" fill-opacity=".9"/><ellipse cx="369.0" cy="117.8" rx="2.34" ry="1.84" transform="rotate(101 369.0 117.8)" fill="#ebe5ff" fill-opacity=".9"/><ellipse cx="373.3" cy="117.1" rx="1.85" ry="1.49" transform="rotate(113 373.3 117.1)" fill="#ebe5ff" fill-opacity=".9"/><ellipse cx="373.8" cy="122.9" rx="1.50" ry="0.90" transform="rotate(88 373.8 122.9)" fill="#ebe5ff" fill-opacity=".9"/><path d="M369.0 85.2L366.8 87.2L364.8 87.5M369.0 85.2L369.2 84.0L371.6 80.9M369.0 85.2L368.6 85.8L369.3 88.7M364.8 87.5L367.8 87.9M371.6 80.9L369.6 81.5M371.6 80.9L374.5 81.6M371.6 80.9L370.7 78.3L367.5 77.0" stroke="#ebe5ff" stroke-width="0.82" stroke-opacity="0.62" fill="none" stroke-linecap="round" stroke-linejoin="round"/><ellipse cx="369.0" cy="85.2" rx="3.50" ry="3.12" transform="rotate(36 369.0 85.2)" fill="#ebe5ff" fill-opacity=".9"/><ellipse cx="364.8" cy="87.5" rx="2.11" ry="1.28" transform="rotate(169 364.8 87.5)" fill="#ebe5ff" fill-opacity=".9"/><ellipse cx="371.6" cy="80.9" rx="1.81" ry="1.53" transform="rotate(83 371.6 80.9)" fill="#ebe5ff" fill-opacity=".9"/><ellipse cx="369.3" cy="88.7" rx="2.33" ry="1.71" transform="rotate(174 369.3 88.7)" fill="#ebe5ff" fill-opacity=".9"/><path d="M388.0 90.5L388.5 91.1L390.1 92.3M390.1 92.3L391.4 90.3L393.6 89.9L395.5 87.4M390.1 92.3L389.7 94.5L390.3 97.3L393.0 98.0M390.1 92.3L391.1 95.1M390.1 92.3L390.8 95.4" stroke="#ebe5ff" stroke-width="0.71" stroke-opacity="0.62" fill="none" stroke-linecap="round" stroke-linejoin="round"/><ellipse cx="388.0" cy="90.5" rx="3.06" ry="2.17" transform="rotate(106 388.0 90.5)" fill="#ebe5ff" fill-opacity=".9"/><ellipse cx="390.1" cy="92.3" rx="2.14" ry="1.46" transform="rotate(77 390.1 92.3)" fill="#ebe5ff" fill-opacity=".9"/><path d="M393.5 64.2L394.7 64.0L396.2 64.6M396.2 64.6L397.8 62.3L399.1 61.0L398.6 58.1M396.2 64.6L394.2 64.6M393.5 64.2L393.9 62.0L393.6 60.0L394.7 57.3" stroke="#ebe5ff" stroke-width="0.67" stroke-opacity="0.62" fill="none" stroke-linecap="round" stroke-linejoin="round"/><ellipse cx="393.5" cy="64.2" rx="2.19" ry="1.74" transform="rotate(47 393.5 64.2)" fill="#ebe5ff" fill-opacity=".9"/><ellipse cx="396.2" cy="64.6" rx="2.23" ry="1.71" transform="rotate(54 396.2 64.6)" fill="#ebe5ff" fill-opacity=".9"/><path d="M400.5 73.0L398.6 74.0L397.0 75.8M397.0 75.8L398.9 76.4M400.5 73.0L400.8 75.6L398.8 77.7M397.0 75.8L395.2 77.2L394.2 78.8L394.1 82.0" stroke="#ebe5ff" stroke-width="0.74" stroke-opacity="0.62" fill="none" stroke-linecap="round" stroke-linejoin="round"/><ellipse cx="400.5" cy="73.0" rx="2.93" ry="2.20" transform="rotate(23 400.5 73.0)" fill="#ebe5ff" fill-opacity=".9"/><ellipse cx="397.0" cy="75.8" rx="1.99" ry="1.71" transform="rotate(113 397.0 75.8)" fill="#ebe5ff" fill-opacity=".9"/><path d="M416.0 62.5L415.8 61.3L416.0 59.1M416.0 62.5L417.8 65.5L418.3 66.5M416.0 62.5L417.0 65.4L418.4 66.6L420.8 66.4M418.3 66.5L419.5 69.1L418.8 70.7L417.3 71.6M416.0 62.5L415.6 64.6" stroke="#ebe5ff" stroke-width="0.70" stroke-opacity="0.62" fill="none" stroke-linecap="round" stroke-linejoin="round"/><ellipse cx="416.0" cy="62.5" rx="3.00" ry="2.03" transform="rotate(23 416.0 62.5)" fill="#ebe5ff" fill-opacity=".9"/><ellipse cx="416.0" cy="59.1" rx="1.64" ry="1.33" transform="rotate(115 416.0 59.1)" fill="#ebe5ff" fill-opacity=".9"/><ellipse cx="418.3" cy="66.5" rx="1.44" ry="0.90" transform="rotate(20 418.3 66.5)" fill="#ebe5ff" fill-opacity=".9"/><path d="M430.0 67.5L429.5 65.2L428.7 65.1M430.0 67.5L430.8 69.2L432.0 70.2M430.0 67.5L427.5 66.1L427.0 66.0M427.0 66.0L429.1 68.5M428.7 65.1L426.4 66.0L424.3 66.0L421.9 64.2M430.0 67.5L432.0 69.9M428.7 65.1L426.6 64.3L426.0 61.7" stroke="#ebe5ff" stroke-width="0.76" stroke-opacity="0.62" fill="none" stroke-linecap="round" stroke-linejoin="round"/><ellipse cx="430.0" cy="67.5" rx="2.63" ry="1.75" transform="rotate(34 430.0 67.5)" fill="#ebe5ff" fill-opacity=".9"/><ellipse cx="428.7" cy="65.1" rx="2.04" ry="1.63" transform="rotate(75 428.7 65.1)" fill="#ebe5ff" fill-opacity=".9"/><ellipse cx="432.0" cy="70.2" rx="1.79" ry="1.15" transform="rotate(171 432.0 70.2)" fill="#ebe5ff" fill-opacity=".9"/><ellipse cx="427.0" cy="66.0" rx="2.03" ry="1.35" transform="rotate(71 427.0 66.0)" fill="#ebe5ff" fill-opacity=".9"/><path d="M440.7 74.5L442.1 72.6L444.5 72.6M440.7 74.5L438.5 76.5M444.5 72.6L447.2 74.9L446.6 77.6L448.0 79.3" stroke="#ebe5ff" stroke-width="0.85" stroke-opacity="0.62" fill="none" stroke-linecap="round" stroke-linejoin="round"/><ellipse cx="440.7" cy="74.5" rx="3.16" ry="2.29" transform="rotate(15 440.7 74.5)" fill="#ebe5ff" fill-opacity=".9"/><ellipse cx="444.5" cy="72.6" rx="2.51" ry="1.93" transform="rotate(159 444.5 72.6)" fill="#ebe5ff" fill-opacity=".9"/><path d="M449.5 73.0L448.8 74.7L449.7 77.0M449.5 73.0L448.7 71.2L445.9 71.8M449.5 73.0L448.3 71.4L444.9 71.4M449.7 77.0L448.4 79.1M449.7 77.0L451.1 79.8L451.3 83.2L452.8 86.0" stroke="#ebe5ff" stroke-width="0.81" stroke-opacity="0.62" fill="none" stroke-linecap="round" stroke-linejoin="round"/><ellipse cx="449.5" cy="73.0" rx="2.94" ry="2.48" transform="rotate(107 449.5 73.0)" fill="#ebe5ff" fill-opacity=".9"/><ellipse cx="449.7" cy="77.0" rx="1.57" ry="0.97" transform="rotate(170 449.7 77.0)" fill="#ebe5ff" fill-opacity=".9"/><ellipse cx="445.9" cy="71.8" rx="2.64" ry="1.67" transform="rotate(149 445.9 71.8)" fill="#ebe5ff" fill-opacity=".9"/><path d="M423.0 87.0L422.2 86.4L420.2 84.2M423.0 87.0L425.1 88.1L425.9 88.6M420.2 84.2L419.4 86.3L417.5 87.6L417.5 89.6M425.9 88.6L425.1 85.4M423.0 87.0L424.4 89.2" stroke="#ebe5ff" stroke-width="0.80" stroke-opacity="0.62" fill="none" stroke-linecap="round" stroke-linejoin="round"/><ellipse cx="423.0" cy="87.0" rx="3.48" ry="3.10" transform="rotate(178 423.0 87.0)" fill="#ebe5ff" fill-opacity=".9"/><ellipse cx="420.2" cy="84.2" rx="2.09" ry="1.34" transform="rotate(31 420.2 84.2)" fill="#ebe5ff" fill-opacity=".9"/><ellipse cx="425.9" cy="88.6" rx="2.47" ry="2.14" transform="rotate(83 425.9 88.6)" fill="#ebe5ff" fill-opacity=".9"/><path d="M407.5 99.2L408.2 98.4L410.3 95.9M407.5 99.2L408.2 100.4L408.5 102.4M407.5 99.2L405.9 100.9L404.8 100.6M410.3 95.9L409.4 92.9M407.5 99.2L409.6 101.3M407.5 99.2L407.4 97.2M410.3 95.9L412.1 95.1L414.8 94.6" stroke="#ebe5ff" stroke-width="0.71" stroke-opacity="0.62" fill="none" stroke-linecap="round" stroke-linejoin="round"/><ellipse cx="407.5" cy="99.2" rx="2.97" ry="1.79" transform="rotate(120 407.5 99.2)" fill="#ebe5ff" fill-opacity=".9"/><ellipse cx="410.3" cy="95.9" rx="1.63" ry="1.32" transform="rotate(115 410.3 95.9)" fill="#ebe5ff" fill-opacity=".9"/><ellipse cx="408.5" cy="102.4" rx="2.10" ry="1.29" transform="rotate(63 408.5 102.4)" fill="#ebe5ff" fill-opacity=".9"/><ellipse cx="404.8" cy="100.6" rx="1.58" ry="0.97" transform="rotate(61 404.8 100.6)" fill="#ebe5ff" fill-opacity=".9"/><path d="M412.7 109.5L414.3 107.6L414.9 107.3M412.7 109.5L413.1 111.6L415.5 113.0M412.7 109.5L411.7 106.9M414.9 107.3L412.2 107.8L410.9 110.9" stroke="#ebe5ff" stroke-width="0.86" stroke-opacity="0.62" fill="none" stroke-linecap="round" stroke-linejoin="round"/><ellipse cx="412.7" cy="109.5" rx="3.37" ry="2.44" transform="rotate(159 412.7 109.5)" fill="#ebe5ff" fill-opacity=".9"/><ellipse cx="414.9" cy="107.3" rx="2.02" ry="1.68" transform="rotate(3 414.9 107.3)" fill="#ebe5ff" fill-opacity=".9"/><path d="M414.5 129.0L414.9 126.5L417.1 126.0M417.1 126.0L416.1 127.8M414.5 129.0L411.5 129.1L408.8 129.9M414.5 129.0L412.4 131.8M414.5 129.0L413.2 132.1" stroke="#ebe5ff" stroke-width="0.82" stroke-opacity="0.62" fill="none" stroke-linecap="round" stroke-linejoin="round"/><ellipse cx="414.5" cy="129.0" rx="3.01" ry="2.63" transform="rotate(8 414.5 129.0)" fill="#ebe5ff" fill-opacity=".9"/><ellipse cx="417.1" cy="126.0" rx="1.72" ry="1.34" transform="rotate(57 417.1 126.0)" fill="#ebe5ff" fill-opacity=".9"/><path d="M407.5 146.5L408.4 146.7L410.6 147.3M410.6 147.3L413.9 147.8M407.5 146.5L407.3 149.9" stroke="#ebe5ff" stroke-width="0.79" stroke-opacity="0.62" fill="none" stroke-linecap="round" stroke-linejoin="round"/><ellipse cx="407.5" cy="146.5" rx="3.37" ry="2.21" transform="rotate(147 407.5 146.5)" fill="#ebe5ff" fill-opacity=".9"/><ellipse cx="410.6" cy="147.3" rx="2.40" ry="2.05" transform="rotate(159 410.6 147.3)" fill="#ebe5ff" fill-opacity=".9"/><path d="M421.5 130.5L423.9 129.5L425.5 128.7M421.5 130.5L421.7 131.5L422.1 134.7M425.5 128.7L422.5 127.6L420.4 127.0M425.5 128.7L425.2 131.3M421.5 130.5L422.2 128.6L423.4 127.0L426.3 125.8M422.1 134.7L422.7 137.6L421.9 139.4L423.4 141.9" stroke="#ebe5ff" stroke-width="0.79" stroke-opacity="0.62" fill="none" stroke-linecap="round" stroke-linejoin="round"/><ellipse cx="421.5" cy="130.5" rx="2.66" ry="1.68" transform="rotate(125 421.5 130.5)" fill="#ebe5ff" fill-opacity=".9"/><ellipse cx="425.5" cy="128.7" rx="1.84" ry="1.60" transform="rotate(24 425.5 128.7)" fill="#ebe5ff" fill-opacity=".9"/><ellipse cx="422.1" cy="134.7" rx="1.99" ry="1.68" transform="rotate(52 422.1 134.7)" fill="#ebe5ff" fill-opacity=".9"/><path d="M444.0 136.5L443.5 135.6L444.0 133.2M444.0 133.2L442.1 134.6L440.0 136.0M444.0 136.5L447.1 138.2L449.2 140.9" stroke="#ebe5ff" stroke-width="0.82" stroke-opacity="0.62" fill="none" stroke-linecap="round" stroke-linejoin="round"/><ellipse cx="444.0" cy="136.5" rx="2.69" ry="2.25" transform="rotate(30 444.0 136.5)" fill="#ebe5ff" fill-opacity=".9"/><ellipse cx="444.0" cy="133.2" rx="2.64" ry="2.00" transform="rotate(21 444.0 133.2)" fill="#ebe5ff" fill-opacity=".9"/><path d="M440.7 125.5L441.7 123.0L441.5 121.1M440.7 125.5L442.4 125.4L444.8 126.0M441.5 121.1L440.7 123.1M444.8 126.0L446.8 126.9L449.4 129.3" stroke="#ebe5ff" stroke-width="0.79" stroke-opacity="0.62" fill="none" stroke-linecap="round" stroke-linejoin="round"/><ellipse cx="440.7" cy="125.5" rx="3.42" ry="2.74" transform="rotate(105 440.7 125.5)" fill="#ebe5ff" fill-opacity=".9"/><ellipse cx="441.5" cy="121.1" rx="2.53" ry="1.52" transform="rotate(56 441.5 121.1)" fill="#ebe5ff" fill-opacity=".9"/><ellipse cx="444.8" cy="126.0" rx="2.49" ry="1.60" transform="rotate(6 444.8 126.0)" fill="#ebe5ff" fill-opacity=".9"/><path d="M456.5 94.0L454.1 93.6L452.6 93.1M456.5 94.0L456.2 92.4L455.8 91.1M455.8 91.1L457.0 93.5L460.2 94.5M456.5 94.0L453.9 92.8L452.8 89.9M452.6 93.1L450.9 90.4" stroke="#ebe5ff" stroke-width="0.78" stroke-opacity="0.62" fill="none" stroke-linecap="round" stroke-linejoin="round"/><ellipse cx="456.5" cy="94.0" rx="2.90" ry="2.26" transform="rotate(161 456.5 94.0)" fill="#ebe5ff" fill-opacity=".9"/><ellipse cx="452.6" cy="93.1" rx="2.18" ry="1.70" transform="rotate(104 452.6 93.1)" fill="#ebe5ff" fill-opacity=".9"/><ellipse cx="455.8" cy="91.1" rx="2.13" ry="1.59" transform="rotate(93 455.8 91.1)" fill="#ebe5ff" fill-opacity=".9"/><path d="M465.0 88.5L466.2 86.1L466.3 85.8M465.0 88.5L466.5 90.6M466.3 85.8L467.0 84.2M465.0 88.5L467.2 90.0L469.7 88.6L472.0 88.7M466.3 85.8L468.4 87.2" stroke="#ebe5ff" stroke-width="0.69" stroke-opacity="0.62" fill="none" stroke-linecap="round" stroke-linejoin="round"/><ellipse cx="465.0" cy="88.5" rx="2.26" ry="1.96" transform="rotate(22 465.0 88.5)" fill="#ebe5ff" fill-opacity=".9"/><ellipse cx="466.3" cy="85.8" rx="1.35" ry="1.19" transform="rotate(167 466.3 85.8)" fill="#ebe5ff" fill-opacity=".9"/><path d="M474.0 150.0L474.8 148.6L476.5 146.6M474.0 150.0L474.3 147.0M474.0 150.0L475.7 151.1L478.1 151.9L481.0 152.0" stroke="#ebe5ff" stroke-width="0.71" stroke-opacity="0.62" fill="none" stroke-linecap="round" stroke-linejoin="round"/><ellipse cx="474.0" cy="150.0" rx="2.51" ry="2.24" transform="rotate(166 474.0 150.0)" fill="#ebe5ff" fill-opacity=".9"/><ellipse cx="476.5" cy="146.6" rx="1.89" ry="1.44" transform="rotate(151 476.5 146.6)" fill="#ebe5ff" fill-opacity=".9"/><path d="M481.0 144.5L481.1 145.4L483.4 148.1M481.0 144.5L480.6 145.0L478.3 146.2M481.0 144.5L478.2 142.1L477.1 141.8M483.4 148.1L481.6 147.7L479.4 149.9L477.3 150.4M481.0 144.5L482.9 144.9L484.7 144.1L485.1 141.0" stroke="#ebe5ff" stroke-width="0.75" stroke-opacity="0.62" fill="none" stroke-linecap="round" stroke-linejoin="round"/><ellipse cx="481.0" cy="144.5" rx="3.04" ry="2.40" transform="rotate(146 481.0 144.5)" fill="#ebe5ff" fill-opacity=".9"/><ellipse cx="483.4" cy="148.1" rx="2.05" ry="1.62" transform="rotate(149 483.4 148.1)" fill="#ebe5ff" fill-opacity=".9"/><ellipse cx="478.3" cy="146.2" rx="2.11" ry="1.33" transform="rotate(52 478.3 146.2)" fill="#ebe5ff" fill-opacity=".9"/><ellipse cx="477.1" cy="141.8" rx="1.57" ry="1.30" transform="rotate(18 477.1 141.8)" fill="#ebe5ff" fill-opacity=".9"/><path d="M479.0 125.5L477.0 125.0L474.6 124.6M479.0 125.5L480.6 125.1L483.1 123.7M479.0 125.5L477.0 127.3M483.1 123.7L482.4 122.0L483.1 120.2L481.7 118.7M479.0 125.5L480.7 123.5L483.7 123.0" stroke="#ebe5ff" stroke-width="0.70" stroke-opacity="0.62" fill="none" stroke-linecap="round" stroke-linejoin="round"/><ellipse cx="479.0" cy="125.5" rx="2.53" ry="2.24" transform="rotate(107 479.0 125.5)" fill="#ebe5ff" fill-opacity=".9"/><ellipse cx="474.6" cy="124.6" rx="1.35" ry="1.05" transform="rotate(93 474.6 124.6)" fill="#ebe5ff" fill-opacity=".9"/><ellipse cx="483.1" cy="123.7" rx="2.12" ry="1.79" transform="rotate(29 483.1 123.7)" fill="#ebe5ff" fill-opacity=".9"/><path d="M507.0 106.5L505.9 107.5L503.8 107.1M503.8 107.1L500.3 107.0L497.9 105.5M507.0 106.5L506.1 110.0L505.5 112.6M507.0 106.5L510.2 105.6M507.0 106.5L504.8 109.3L503.3 111.8" stroke="#ebe5ff" stroke-width="0.85" stroke-opacity="0.62" fill="none" stroke-linecap="round" stroke-linejoin="round"/><ellipse cx="507.0" cy="106.5" rx="3.22" ry="2.38" transform="rotate(58 507.0 106.5)" fill="#ebe5ff" fill-opacity=".9"/><ellipse cx="503.8" cy="107.1" rx="2.59" ry="1.75" transform="rotate(124 503.8 107.1)" fill="#ebe5ff" fill-opacity=".9"/><path d="M500.0 108.0L500.3 108.5L502.1 110.0M500.0 108.0L497.5 108.0L495.7 107.9M500.0 108.0L500.1 111.0M500.0 108.0L502.2 108.4L503.2 111.0L502.8 113.3" stroke="#ebe5ff" stroke-width="0.71" stroke-opacity="0.62" fill="none" stroke-linecap="round" stroke-linejoin="round"/><ellipse cx="500.0" cy="108.0" rx="2.65" ry="2.10" transform="rotate(35 500.0 108.0)" fill="#ebe5ff" fill-opacity=".9"/><ellipse cx="502.1" cy="110.0" rx="1.63" ry="1.08" transform="rotate(19 502.1 110.0)" fill="#ebe5ff" fill-opacity=".9"/><ellipse cx="495.7" cy="107.9" rx="1.48" ry="0.90" transform="rotate(70 495.7 107.9)" fill="#ebe5ff" fill-opacity=".9"/><path d="M502.0 139.5L504.1 137.9L504.4 136.7M502.0 139.5L502.6 141.8L502.8 143.0M502.0 139.5L502.9 136.7L505.0 134.5L507.5 133.4M504.4 136.7L502.5 136.9L499.7 137.9M502.8 143.0L501.1 141.3" stroke="#ebe5ff" stroke-width="0.74" stroke-opacity="0.62" fill="none" stroke-linecap="round" stroke-linejoin="round"/><ellipse cx="502.0" cy="139.5" rx="2.98" ry="2.34" transform="rotate(82 502.0 139.5)" fill="#ebe5ff" fill-opacity=".9"/><ellipse cx="504.4" cy="136.7" rx="1.53" ry="1.23" transform="rotate(74 504.4 136.7)" fill="#ebe5ff" fill-opacity=".9"/><ellipse cx="502.8" cy="143.0" rx="2.21" ry="1.44" transform="rotate(167 502.8 143.0)" fill="#ebe5ff" fill-opacity=".9"/><path d="M526.5 129.0L527.1 129.3L529.3 128.3M529.3 128.3L531.2 129.4L532.9 130.3L534.0 132.5M529.3 128.3L528.3 131.0L527.9 134.1" stroke="#ebe5ff" stroke-width="0.79" stroke-opacity="0.62" fill="none" stroke-linecap="round" stroke-linejoin="round"/><ellipse cx="526.5" cy="129.0" rx="2.90" ry="2.60" transform="rotate(22 526.5 129.0)" fill="#ebe5ff" fill-opacity=".9"/><ellipse cx="529.3" cy="128.3" rx="2.12" ry="1.31" transform="rotate(64 529.3 128.3)" fill="#ebe5ff" fill-opacity=".9"/><path d="M547.5 120.2L545.4 120.9L543.6 119.6M547.5 120.2L549.5 120.2L549.4 118.1M543.6 119.6L542.5 120.9M549.4 118.1L549.9 120.1L548.3 121.7L545.7 123.0M543.6 119.6L541.2 118.6L539.8 116.6" stroke="#ebe5ff" stroke-width="0.71" stroke-opacity="0.62" fill="none" stroke-linecap="round" stroke-linejoin="round"/><ellipse cx="547.5" cy="120.2" rx="2.34" ry="1.57" transform="rotate(141 547.5 120.2)" fill="#ebe5ff" fill-opacity=".9"/><ellipse cx="543.6" cy="119.6" rx="2.06" ry="1.66" transform="rotate(127 543.6 119.6)" fill="#ebe5ff" fill-opacity=".9"/><ellipse cx="549.4" cy="118.1" rx="1.66" ry="1.33" transform="rotate(177 549.4 118.1)" fill="#ebe5ff" fill-opacity=".9"/><path d="M545.7 146.5L546.9 145.3L549.0 144.6M545.7 146.5L546.7 148.1L549.5 149.3M545.7 146.5L544.1 145.6L541.4 147.5M549.5 149.3L550.7 151.0L553.5 152.1L555.5 152.2M549.0 144.6L550.4 142.1" stroke="#ebe5ff" stroke-width="0.76" stroke-opacity="0.62" fill="none" stroke-linecap="round" stroke-linejoin="round"/><ellipse cx="545.7" cy="146.5" rx="2.74" ry="1.72" transform="rotate(176 545.7 146.5)" fill="#ebe5ff" fill-opacity=".9"/><ellipse cx="549.0" cy="144.6" rx="2.12" ry="1.62" transform="rotate(162 549.0 144.6)" fill="#ebe5ff" fill-opacity=".9"/><ellipse cx="549.5" cy="149.3" rx="1.58" ry="1.09" transform="rotate(115 549.5 149.3)" fill="#ebe5ff" fill-opacity=".9"/><path d="M540.5 134.2L542.3 134.2L545.1 135.4M545.1 135.4L541.9 135.6M545.1 135.4L544.9 138.5" stroke="#ebe5ff" stroke-width="0.76" stroke-opacity="0.62" fill="none" stroke-linecap="round" stroke-linejoin="round"/><ellipse cx="540.5" cy="134.2" rx="2.91" ry="2.48" transform="rotate(1 540.5 134.2)" fill="#ebe5ff" fill-opacity=".9"/><ellipse cx="545.1" cy="135.4" rx="2.05" ry="1.57" transform="rotate(84 545.1 135.4)" fill="#ebe5ff" fill-opacity=".9"/><path d="M579.0 137.5L580.6 137.5L581.3 135.5M579.0 137.5L578.6 140.1L579.1 140.4M581.3 135.5L579.9 138.2M579.1 140.4L579.0 142.9M581.3 135.5L582.8 133.9L584.3 131.8L586.5 129.4M581.3 135.5L580.1 137.9L580.2 140.6" stroke="#ebe5ff" stroke-width="0.79" stroke-opacity="0.62" fill="none" stroke-linecap="round" stroke-linejoin="round"/><ellipse cx="579.0" cy="137.5" rx="2.89" ry="2.30" transform="rotate(175 579.0 137.5)" fill="#ebe5ff" fill-opacity=".9"/><ellipse cx="581.3" cy="135.5" rx="2.24" ry="1.57" transform="rotate(143 581.3 135.5)" fill="#ebe5ff" fill-opacity=".9"/><ellipse cx="579.1" cy="140.4" rx="2.21" ry="1.52" transform="rotate(57 579.1 140.4)" fill="#ebe5ff" fill-opacity=".9"/><path d="M583.0 133.5L579.8 134.1L578.6 135.6M583.0 133.5L583.4 136.4L581.8 139.2M578.6 135.6L577.3 133.0L578.0 131.1L576.3 128.8" stroke="#ebe5ff" stroke-width="0.78" stroke-opacity="0.62" fill="none" stroke-linecap="round" stroke-linejoin="round"/><ellipse cx="583.0" cy="133.5" rx="3.21" ry="2.09" transform="rotate(113 583.0 133.5)" fill="#ebe5ff" fill-opacity=".9"/><ellipse cx="578.6" cy="135.6" rx="2.09" ry="1.80" transform="rotate(119 578.6 135.6)" fill="#ebe5ff" fill-opacity=".9"/></g><g filter="url(#bl3)"><ellipse cx="335.7" cy="38.0" rx="1.54" ry="1.06" transform="rotate(155 335.7 38.0)" fill="#ffffff"/><ellipse cx="332.9" cy="38.5" rx="1.15" ry="0.73" transform="rotate(26 332.9 38.5)" fill="#ffffff"/><ellipse cx="353.0" cy="41.5" rx="1.39" ry="0.87" transform="rotate(173 353.0 41.5)" fill="#ffffff"/><ellipse cx="353.7" cy="38.8" rx="1.23" ry="1.03" transform="rotate(100 353.7 38.8)" fill="#ffffff"/><ellipse cx="377.8" cy="39.5" rx="1.92" ry="1.56" transform="rotate(99 377.8 39.5)" fill="#ffffff"/><ellipse cx="381.6" cy="37.9" rx="1.50" ry="1.20" transform="rotate(178 381.6 37.9)" fill="#ffffff"/><ellipse cx="374.5" cy="42.0" rx="1.37" ry="0.92" transform="rotate(68 374.5 42.0)" fill="#ffffff"/><ellipse cx="379.5" cy="48.5" rx="1.37" ry="0.88" transform="rotate(0 379.5 48.5)" fill="#ffffff"/><ellipse cx="376.0" cy="47.4" rx="0.89" ry="0.63" transform="rotate(18 376.0 47.4)" fill="#ffffff"/><ellipse cx="324.0" cy="59.0" rx="1.52" ry="0.99" transform="rotate(66 324.0 59.0)" fill="#ffffff"/><ellipse cx="321.6" cy="61.0" rx="0.93" ry="0.71" transform="rotate(139 321.6 61.0)" fill="#ffffff"/><ellipse cx="355.0" cy="62.5" rx="1.87" ry="1.56" transform="rotate(164 355.0 62.5)" fill="#ffffff"/><ellipse cx="359.7" cy="63.2" rx="1.02" ry="0.76" transform="rotate(135 359.7 63.2)" fill="#ffffff"/><ellipse cx="354.8" cy="66.4" rx="1.46" ry="1.22" transform="rotate(32 354.8 66.4)" fill="#ffffff"/><ellipse cx="334.0" cy="83.5" rx="1.58" ry="1.34" transform="rotate(98 334.0 83.5)" fill="#ffffff"/><ellipse cx="336.7" cy="82.2" rx="1.42" ry="1.17" transform="rotate(11 336.7 82.2)" fill="#ffffff"/><ellipse cx="337.2" cy="85.7" rx="1.08" ry="0.86" transform="rotate(162 337.2 85.7)" fill="#ffffff"/><ellipse cx="306.0" cy="92.2" rx="1.77" ry="1.19" transform="rotate(91 306.0 92.2)" fill="#ffffff"/><ellipse cx="306.4" cy="96.5" rx="1.27" ry="1.09" transform="rotate(94 306.4 96.5)" fill="#ffffff"/><ellipse cx="302.7" cy="94.5" rx="1.02" ry="0.89" transform="rotate(167 302.7 94.5)" fill="#ffffff"/><ellipse cx="301.4" cy="90.3" rx="1.01" ry="0.67" transform="rotate(161 301.4 90.3)" fill="#ffffff"/><ellipse cx="321.7" cy="115.5" rx="1.46" ry="1.06" transform="rotate(73 321.7 115.5)" fill="#ffffff"/><ellipse cx="319.4" cy="113.2" rx="0.86" ry="0.54" transform="rotate(64 319.4 113.2)" fill="#ffffff"/><ellipse cx="326.2" cy="115.4" rx="1.40" ry="0.98" transform="rotate(66 326.2 115.4)" fill="#ffffff"/><ellipse cx="301.8" cy="136.5" rx="1.60" ry="0.99" transform="rotate(16 301.8 136.5)" fill="#ffffff"/><ellipse cx="302.4" cy="131.7" rx="0.88" ry="0.64" transform="rotate(124 302.4 131.7)" fill="#ffffff"/><ellipse cx="351.5" cy="144.5" rx="1.55" ry="1.09" transform="rotate(32 351.5 144.5)" fill="#ffffff"/><ellipse cx="355.6" cy="144.2" rx="0.77" ry="0.52" transform="rotate(3 355.6 144.2)" fill="#ffffff"/><ellipse cx="356.7" cy="129.0" rx="1.48" ry="1.13" transform="rotate(175 356.7 129.0)" fill="#ffffff"/><ellipse cx="352.5" cy="129.0" rx="0.78" ry="0.69" transform="rotate(44 352.5 129.0)" fill="#ffffff"/><ellipse cx="359.5" cy="127.4" rx="1.00" ry="0.71" transform="rotate(56 359.5 127.4)" fill="#ffffff"/><ellipse cx="354.9" cy="131.6" rx="1.01" ry="0.72" transform="rotate(0 354.9 131.6)" fill="#ffffff"/><ellipse cx="370.7" cy="120.2" rx="1.74" ry="1.48" transform="rotate(19 370.7 120.2)" fill="#ffffff"/><ellipse cx="369.0" cy="117.8" rx="1.36" ry="1.07" transform="rotate(101 369.0 117.8)" fill="#ffffff"/><ellipse cx="373.3" cy="117.1" rx="1.07" ry="0.86" transform="rotate(113 373.3 117.1)" fill="#ffffff"/><ellipse cx="373.8" cy="122.9" rx="0.87" ry="0.52" transform="rotate(88 373.8 122.9)" fill="#ffffff"/><ellipse cx="369.0" cy="85.2" rx="2.03" ry="1.81" transform="rotate(36 369.0 85.2)" fill="#ffffff"/><ellipse cx="364.8" cy="87.5" rx="1.22" ry="0.74" transform="rotate(169 364.8 87.5)" fill="#ffffff"/><ellipse cx="371.6" cy="80.9" rx="1.05" ry="0.89" transform="rotate(83 371.6 80.9)" fill="#ffffff"/><ellipse cx="369.3" cy="88.7" rx="1.35" ry="0.99" transform="rotate(174 369.3 88.7)" fill="#ffffff"/><ellipse cx="388.0" cy="90.5" rx="1.78" ry="1.26" transform="rotate(106 388.0 90.5)" fill="#ffffff"/><ellipse cx="390.1" cy="92.3" rx="1.24" ry="0.85" transform="rotate(77 390.1 92.3)" fill="#ffffff"/><ellipse cx="393.5" cy="64.2" rx="1.27" ry="1.01" transform="rotate(47 393.5 64.2)" fill="#ffffff"/><ellipse cx="396.2" cy="64.6" rx="1.29" ry="0.99" transform="rotate(54 396.2 64.6)" fill="#ffffff"/><ellipse cx="400.5" cy="73.0" rx="1.70" ry="1.28" transform="rotate(23 400.5 73.0)" fill="#ffffff"/><ellipse cx="397.0" cy="75.8" rx="1.15" ry="0.99" transform="rotate(113 397.0 75.8)" fill="#ffffff"/><ellipse cx="416.0" cy="62.5" rx="1.74" ry="1.18" transform="rotate(23 416.0 62.5)" fill="#ffffff"/><ellipse cx="416.0" cy="59.1" rx="0.95" ry="0.77" transform="rotate(115 416.0 59.1)" fill="#ffffff"/><ellipse cx="418.3" cy="66.5" rx="0.84" ry="0.52" transform="rotate(20 418.3 66.5)" fill="#ffffff"/><ellipse cx="430.0" cy="67.5" rx="1.52" ry="1.02" transform="rotate(34 430.0 67.5)" fill="#ffffff"/><ellipse cx="428.7" cy="65.1" rx="1.19" ry="0.95" transform="rotate(75 428.7 65.1)" fill="#ffffff"/><ellipse cx="432.0" cy="70.2" rx="1.04" ry="0.67" transform="rotate(171 432.0 70.2)" fill="#ffffff"/><ellipse cx="427.0" cy="66.0" rx="1.18" ry="0.78" transform="rotate(71 427.0 66.0)" fill="#ffffff"/><ellipse cx="440.7" cy="74.5" rx="1.83" ry="1.33" transform="rotate(15 440.7 74.5)" fill="#ffffff"/><ellipse cx="444.5" cy="72.6" rx="1.46" ry="1.12" transform="rotate(159 444.5 72.6)" fill="#ffffff"/><ellipse cx="449.5" cy="73.0" rx="1.71" ry="1.44" transform="rotate(107 449.5 73.0)" fill="#ffffff"/><ellipse cx="449.7" cy="77.0" rx="0.91" ry="0.56" transform="rotate(170 449.7 77.0)" fill="#ffffff"/><ellipse cx="445.9" cy="71.8" rx="1.53" ry="0.97" transform="rotate(149 445.9 71.8)" fill="#ffffff"/><ellipse cx="423.0" cy="87.0" rx="2.02" ry="1.80" transform="rotate(178 423.0 87.0)" fill="#ffffff"/><ellipse cx="420.2" cy="84.2" rx="1.21" ry="0.78" transform="rotate(31 420.2 84.2)" fill="#ffffff"/><ellipse cx="425.9" cy="88.6" rx="1.43" ry="1.24" transform="rotate(83 425.9 88.6)" fill="#ffffff"/><ellipse cx="407.5" cy="99.2" rx="1.72" ry="1.04" transform="rotate(120 407.5 99.2)" fill="#ffffff"/><ellipse cx="410.3" cy="95.9" rx="0.94" ry="0.77" transform="rotate(115 410.3 95.9)" fill="#ffffff"/><ellipse cx="408.5" cy="102.4" rx="1.22" ry="0.75" transform="rotate(63 408.5 102.4)" fill="#ffffff"/><ellipse cx="404.8" cy="100.6" rx="0.91" ry="0.56" transform="rotate(61 404.8 100.6)" fill="#ffffff"/><ellipse cx="412.7" cy="109.5" rx="1.95" ry="1.41" transform="rotate(159 412.7 109.5)" fill="#ffffff"/><ellipse cx="414.9" cy="107.3" rx="1.17" ry="0.97" transform="rotate(3 414.9 107.3)" fill="#ffffff"/><ellipse cx="414.5" cy="129.0" rx="1.75" ry="1.53" transform="rotate(8 414.5 129.0)" fill="#ffffff"/><ellipse cx="417.1" cy="126.0" rx="1.00" ry="0.78" transform="rotate(57 417.1 126.0)" fill="#ffffff"/><ellipse cx="407.5" cy="146.5" rx="1.95" ry="1.28" transform="rotate(147 407.5 146.5)" fill="#ffffff"/><ellipse cx="410.6" cy="147.3" rx="1.39" ry="1.19" transform="rotate(159 410.6 147.3)" fill="#ffffff"/><ellipse cx="421.5" cy="130.5" rx="1.54" ry="0.98" transform="rotate(125 421.5 130.5)" fill="#ffffff"/><ellipse cx="425.5" cy="128.7" rx="1.07" ry="0.93" transform="rotate(24 425.5 128.7)" fill="#ffffff"/><ellipse cx="422.1" cy="134.7" rx="1.15" ry="0.97" transform="rotate(52 422.1 134.7)" fill="#ffffff"/><ellipse cx="444.0" cy="136.5" rx="1.56" ry="1.30" transform="rotate(30 444.0 136.5)" fill="#ffffff"/><ellipse cx="444.0" cy="133.2" rx="1.53" ry="1.16" transform="rotate(21 444.0 133.2)" fill="#ffffff"/><ellipse cx="440.7" cy="125.5" rx="1.99" ry="1.59" transform="rotate(105 440.7 125.5)" fill="#ffffff"/><ellipse cx="441.5" cy="121.1" rx="1.47" ry="0.88" transform="rotate(56 441.5 121.1)" fill="#ffffff"/><ellipse cx="444.8" cy="126.0" rx="1.44" ry="0.93" transform="rotate(6 444.8 126.0)" fill="#ffffff"/><ellipse cx="456.5" cy="94.0" rx="1.68" ry="1.31" transform="rotate(161 456.5 94.0)" fill="#ffffff"/><ellipse cx="452.6" cy="93.1" rx="1.27" ry="0.99" transform="rotate(104 452.6 93.1)" fill="#ffffff"/><ellipse cx="455.8" cy="91.1" rx="1.23" ry="0.92" transform="rotate(93 455.8 91.1)" fill="#ffffff"/><ellipse cx="465.0" cy="88.5" rx="1.31" ry="1.14" transform="rotate(22 465.0 88.5)" fill="#ffffff"/><ellipse cx="466.3" cy="85.8" rx="0.78" ry="0.69" transform="rotate(167 466.3 85.8)" fill="#ffffff"/><ellipse cx="474.0" cy="150.0" rx="1.46" ry="1.30" transform="rotate(166 474.0 150.0)" fill="#ffffff"/><ellipse cx="476.5" cy="146.6" rx="1.10" ry="0.83" transform="rotate(151 476.5 146.6)" fill="#ffffff"/><ellipse cx="481.0" cy="144.5" rx="1.76" ry="1.39" transform="rotate(146 481.0 144.5)" fill="#ffffff"/><ellipse cx="483.4" cy="148.1" rx="1.19" ry="0.94" transform="rotate(149 483.4 148.1)" fill="#ffffff"/><ellipse cx="478.3" cy="146.2" rx="1.23" ry="0.77" transform="rotate(52 478.3 146.2)" fill="#ffffff"/><ellipse cx="477.1" cy="141.8" rx="0.91" ry="0.75" transform="rotate(18 477.1 141.8)" fill="#ffffff"/><ellipse cx="479.0" cy="125.5" rx="1.47" ry="1.30" transform="rotate(107 479.0 125.5)" fill="#ffffff"/><ellipse cx="474.6" cy="124.6" rx="0.78" ry="0.61" transform="rotate(93 474.6 124.6)" fill="#ffffff"/><ellipse cx="483.1" cy="123.7" rx="1.23" ry="1.04" transform="rotate(29 483.1 123.7)" fill="#ffffff"/><ellipse cx="507.0" cy="106.5" rx="1.87" ry="1.38" transform="rotate(58 507.0 106.5)" fill="#ffffff"/><ellipse cx="503.8" cy="107.1" rx="1.50" ry="1.02" transform="rotate(124 503.8 107.1)" fill="#ffffff"/><ellipse cx="500.0" cy="108.0" rx="1.54" ry="1.22" transform="rotate(35 500.0 108.0)" fill="#ffffff"/><ellipse cx="502.1" cy="110.0" rx="0.95" ry="0.63" transform="rotate(19 502.1 110.0)" fill="#ffffff"/><ellipse cx="495.7" cy="107.9" rx="0.86" ry="0.52" transform="rotate(70 495.7 107.9)" fill="#ffffff"/><ellipse cx="502.0" cy="139.5" rx="1.73" ry="1.36" transform="rotate(82 502.0 139.5)" fill="#ffffff"/><ellipse cx="504.4" cy="136.7" rx="0.89" ry="0.71" transform="rotate(74 504.4 136.7)" fill="#ffffff"/><ellipse cx="502.8" cy="143.0" rx="1.28" ry="0.84" transform="rotate(167 502.8 143.0)" fill="#ffffff"/><ellipse cx="526.5" cy="129.0" rx="1.68" ry="1.51" transform="rotate(22 526.5 129.0)" fill="#ffffff"/><ellipse cx="529.3" cy="128.3" rx="1.23" ry="0.76" transform="rotate(64 529.3 128.3)" fill="#ffffff"/><ellipse cx="547.5" cy="120.2" rx="1.36" ry="0.91" transform="rotate(141 547.5 120.2)" fill="#ffffff"/><ellipse cx="543.6" cy="119.6" rx="1.19" ry="0.96" transform="rotate(127 543.6 119.6)" fill="#ffffff"/><ellipse cx="549.4" cy="118.1" rx="0.96" ry="0.77" transform="rotate(177 549.4 118.1)" fill="#ffffff"/><ellipse cx="545.7" cy="146.5" rx="1.59" ry="1.00" transform="rotate(176 545.7 146.5)" fill="#ffffff"/><ellipse cx="549.0" cy="144.6" rx="1.23" ry="0.94" transform="rotate(162 549.0 144.6)" fill="#ffffff"/><ellipse cx="549.5" cy="149.3" rx="0.92" ry="0.63" transform="rotate(115 549.5 149.3)" fill="#ffffff"/><ellipse cx="540.5" cy="134.2" rx="1.69" ry="1.44" transform="rotate(1 540.5 134.2)" fill="#ffffff"/><ellipse cx="545.1" cy="135.4" rx="1.19" ry="0.91" transform="rotate(84 545.1 135.4)" fill="#ffffff"/><ellipse cx="579.0" cy="137.5" rx="1.68" ry="1.34" transform="rotate(175 579.0 137.5)" fill="#ffffff"/><ellipse cx="581.3" cy="135.5" rx="1.30" ry="0.91" transform="rotate(143 581.3 135.5)" fill="#ffffff"/><ellipse cx="579.1" cy="140.4" rx="1.28" ry="0.88" transform="rotate(57 579.1 140.4)" fill="#ffffff"/><ellipse cx="583.0" cy="133.5" rx="1.86" ry="1.22" transform="rotate(113 583.0 133.5)" fill="#ffffff"/><ellipse cx="578.6" cy="135.6" rx="1.21" ry="1.04" transform="rotate(119 578.6 135.6)" fill="#ffffff"/></g>
<path d="M581.1 143.9L577.6 142.4L574.5 140.9L571.6 139.7L568.6 139.4L565.3 140.1L561.5 141.4L557.3 142.9L552.9 143.6L548.7 142.9L545.0 140.5L542.1 136.7L539.8 132.1L538.0 127.6L536.4 124.2L534.6 122.8L532.0 124.2L528.6 128.1L524.2 133.7L519.2 139.1L514.4 142.6L510.3 142.8L507.3 139.6L505.2 133.6L504.0 125.8L503.1 117.8L502.1 111.1L500.5 107.3L497.8 107.7L493.8 112.9L488.7 121.9L483.3 131.9L478.6 139.7L475.3 142.7L473.4 140.5L472.7 133.7L472.7 123.9L472.7 112.8L472.1 102.5L470.3 95.0L466.9 92.3L461.7 96.1L455.3 106.5L448.9 120.6L444.2 133.6L441.8 141.2L441.7 141.7L442.9 135.7L444.6 125.1L445.9 111.9L445.9 98.4L444.1 86.9L439.9 79.7L433.1 79.8L424.6 88.8L416.3 105.1L410.5 123.4L408.8 137.0L410.6 142.0L414.4 138.4L418.5 128.3L421.6 114.1L423.0 98.3L421.7 83.1L417.1 71.3L408.9 66.2L397.8 70.9L386.2 86.5L378.0 108.6L375.7 128.8L379.1 140.2L385.8 140.8L393.0 132.5L398.8 118.4L402.2 101.2L402.2 83.4L398.0 67.4L389.1 56.6L375.7 55.2L360.2 66.6L347.6 89.6L342.7 115.8L346.6 134.8L356.1 141.5L367.0 136.7L376.4 123.9L382.6 106.4L384.7 86.8L381.8 67.6L373.2 51.8L358.5 43.6L339.4 48.1L321.0 67.9L311.0 97.6L313.1 124.7L324.7 139.3L339.6 139.9L353.2 129.8L363.1 113.0L368.2 92.7L367.5 71.3" stroke="#dc1519" stroke-width="1.2" fill="none" stroke-linejoin="round"/>
<circle cx="581.1" cy="143.9" r="1.4" fill="#bf0c11"/>
<circle cx="577.6" cy="142.4" r="1.4" fill="#bf0c11"/>
<circle cx="574.5" cy="140.9" r="1.4" fill="#bf0c11"/>
<circle cx="571.6" cy="139.7" r="1.4" fill="#bf0c11"/>
<circle cx="568.6" cy="139.4" r="1.4" fill="#bf0c11"/>
<circle cx="565.3" cy="140.1" r="1.4" fill="#bf0c11"/>
<circle cx="561.5" cy="141.4" r="1.4" fill="#bf0c11"/>
<circle cx="557.3" cy="142.9" r="1.4" fill="#bf0c11"/>
<circle cx="552.9" cy="143.6" r="1.4" fill="#bf0c11"/>
<circle cx="548.7" cy="142.9" r="1.4" fill="#bf0c11"/>
<circle cx="545.0" cy="140.5" r="1.4" fill="#bf0c11"/>
<circle cx="542.1" cy="136.7" r="1.4" fill="#bf0c11"/>
<circle cx="539.8" cy="132.1" r="1.4" fill="#bf0c11"/>
<circle cx="538.0" cy="127.6" r="1.4" fill="#bf0c11"/>
<circle cx="536.4" cy="124.2" r="1.4" fill="#bf0c11"/>
<circle cx="534.6" cy="122.8" r="1.4" fill="#bf0c11"/>
<circle cx="532.0" cy="124.2" r="1.4" fill="#bf0c11"/>
<circle cx="528.6" cy="128.1" r="1.4" fill="#bf0c11"/>
<circle cx="524.2" cy="133.7" r="1.4" fill="#bf0c11"/>
<circle cx="519.2" cy="139.1" r="1.4" fill="#bf0c11"/>
<circle cx="514.4" cy="142.6" r="1.4" fill="#bf0c11"/>
<circle cx="510.3" cy="142.8" r="1.4" fill="#bf0c11"/>
<circle cx="507.3" cy="139.6" r="1.4" fill="#bf0c11"/>
<circle cx="505.2" cy="133.6" r="1.4" fill="#bf0c11"/>
<circle cx="504.0" cy="125.8" r="1.4" fill="#bf0c11"/>
<circle cx="503.1" cy="117.8" r="1.4" fill="#bf0c11"/>
<circle cx="502.1" cy="111.1" r="1.4" fill="#bf0c11"/>
<circle cx="500.5" cy="107.3" r="1.4" fill="#bf0c11"/>
<circle cx="497.8" cy="107.7" r="1.4" fill="#bf0c11"/>
<circle cx="493.8" cy="112.9" r="1.4" fill="#bf0c11"/>
<circle cx="488.7" cy="121.9" r="1.4" fill="#bf0c11"/>
<circle cx="483.3" cy="131.9" r="1.4" fill="#bf0c11"/>
<circle cx="478.6" cy="139.7" r="1.4" fill="#bf0c11"/>
<circle cx="475.3" cy="142.7" r="1.4" fill="#bf0c11"/>
<circle cx="473.4" cy="140.5" r="1.4" fill="#bf0c11"/>
<circle cx="472.7" cy="133.7" r="1.4" fill="#bf0c11"/>
<circle cx="472.7" cy="123.9" r="1.4" fill="#bf0c11"/>
<circle cx="472.7" cy="112.8" r="1.4" fill="#bf0c11"/>
<circle cx="472.1" cy="102.5" r="1.4" fill="#bf0c11"/>
<circle cx="470.3" cy="95.0" r="1.4" fill="#bf0c11"/>
<circle cx="466.9" cy="92.3" r="1.4" fill="#bf0c11"/>
<circle cx="461.7" cy="96.1" r="1.4" fill="#bf0c11"/>
<circle cx="455.3" cy="106.5" r="1.4" fill="#bf0c11"/>
<circle cx="448.9" cy="120.6" r="1.4" fill="#bf0c11"/>
<circle cx="444.2" cy="133.6" r="1.4" fill="#bf0c11"/>
<circle cx="441.8" cy="141.2" r="1.4" fill="#bf0c11"/>
<circle cx="441.7" cy="141.7" r="1.4" fill="#bf0c11"/>
<circle cx="442.9" cy="135.7" r="1.4" fill="#bf0c11"/>
<circle cx="444.6" cy="125.1" r="1.4" fill="#bf0c11"/>
<circle cx="445.9" cy="111.9" r="1.4" fill="#bf0c11"/>
<circle cx="445.9" cy="98.4" r="1.4" fill="#bf0c11"/>
<circle cx="444.1" cy="86.9" r="1.4" fill="#bf0c11"/>
<circle cx="439.9" cy="79.7" r="1.4" fill="#bf0c11"/>
<circle cx="433.1" cy="79.8" r="1.4" fill="#bf0c11"/>
<circle cx="424.6" cy="88.8" r="1.4" fill="#bf0c11"/>
<circle cx="416.3" cy="105.1" r="1.4" fill="#bf0c11"/>
<circle cx="410.5" cy="123.4" r="1.4" fill="#bf0c11"/>
<circle cx="408.8" cy="137.0" r="1.4" fill="#bf0c11"/>
<circle cx="410.6" cy="142.0" r="1.4" fill="#bf0c11"/>
<circle cx="414.4" cy="138.4" r="1.4" fill="#bf0c11"/>
<circle cx="418.5" cy="128.3" r="1.4" fill="#bf0c11"/>
<circle cx="421.6" cy="114.1" r="1.4" fill="#bf0c11"/>
<circle cx="423.0" cy="98.3" r="1.4" fill="#bf0c11"/>
<circle cx="421.7" cy="83.1" r="1.4" fill="#bf0c11"/>
<circle cx="417.1" cy="71.3" r="1.4" fill="#bf0c11"/>
<circle cx="408.9" cy="66.2" r="1.4" fill="#bf0c11"/>
<circle cx="397.8" cy="70.9" r="1.4" fill="#bf0c11"/>
<circle cx="386.2" cy="86.5" r="1.4" fill="#bf0c11"/>
<circle cx="378.0" cy="108.6" r="1.4" fill="#bf0c11"/>
<circle cx="375.7" cy="128.8" r="1.4" fill="#bf0c11"/>
<circle cx="379.1" cy="140.2" r="1.4" fill="#bf0c11"/>
<circle cx="385.8" cy="140.8" r="1.4" fill="#bf0c11"/>
<circle cx="393.0" cy="132.5" r="1.4" fill="#bf0c11"/>
<circle cx="398.8" cy="118.4" r="1.4" fill="#bf0c11"/>
<circle cx="402.2" cy="101.2" r="1.4" fill="#bf0c11"/>
<circle cx="402.2" cy="83.4" r="1.4" fill="#bf0c11"/>
<circle cx="398.0" cy="67.4" r="1.4" fill="#bf0c11"/>
<circle cx="389.1" cy="56.6" r="1.4" fill="#bf0c11"/>
<circle cx="375.7" cy="55.2" r="1.4" fill="#bf0c11"/>
<circle cx="360.2" cy="66.6" r="1.4" fill="#bf0c11"/>
<circle cx="347.6" cy="89.6" r="1.4" fill="#bf0c11"/>
<circle cx="342.7" cy="115.8" r="1.4" fill="#bf0c11"/>
<circle cx="346.6" cy="134.8" r="1.4" fill="#bf0c11"/>
<circle cx="356.1" cy="141.5" r="1.4" fill="#bf0c11"/>
<circle cx="367.0" cy="136.7" r="1.4" fill="#bf0c11"/>
<circle cx="376.4" cy="123.9" r="1.4" fill="#bf0c11"/>
<circle cx="382.6" cy="106.4" r="1.4" fill="#bf0c11"/>
<circle cx="384.7" cy="86.8" r="1.4" fill="#bf0c11"/>
<circle cx="381.8" cy="67.6" r="1.4" fill="#bf0c11"/>
<circle cx="373.2" cy="51.8" r="1.4" fill="#bf0c11"/>
<circle cx="358.5" cy="43.6" r="1.4" fill="#bf0c11"/>
<circle cx="339.4" cy="48.1" r="1.4" fill="#bf0c11"/>
<circle cx="321.0" cy="67.9" r="1.4" fill="#bf0c11"/>
<circle cx="311.0" cy="97.6" r="1.4" fill="#bf0c11"/>
<circle cx="313.1" cy="124.7" r="1.4" fill="#bf0c11"/>
<circle cx="324.7" cy="139.3" r="1.4" fill="#bf0c11"/>
<circle cx="339.6" cy="139.9" r="1.4" fill="#bf0c11"/>
<circle cx="353.2" cy="129.8" r="1.4" fill="#bf0c11"/>
<circle cx="363.1" cy="113.0" r="1.4" fill="#bf0c11"/>
<circle cx="368.2" cy="92.7" r="1.4" fill="#bf0c11"/>
<circle cx="367.5" cy="71.3" r="1.4" fill="#bf0c11"/>
<g font-family="Liberation Sans, sans-serif" font-size="7.2" fill="#d8d4ca" fill-opacity=".95">
<text x="580.7" y="152.2">0</text>
<text x="577.2" y="150.7">1</text>
<text x="574.1" y="149.2">2</text>
<text x="571.2" y="148.0">3</text>
<text x="568.2" y="147.7">4</text>
<text x="564.9" y="148.4">5</text>
<text x="561.1" y="149.7">6</text>
<text x="556.9" y="151.2">7</text>
<text x="552.5" y="151.9">8</text>
<text x="548.3" y="151.2">9</text>
<text x="544.6" y="148.8">10</text>
<text x="541.7" y="145.0">11</text>
<text x="539.4" y="140.4">12</text>
<text x="537.6" y="135.9">13</text>
<text x="536.0" y="132.5">14</text>
<text x="534.2" y="131.1">15</text>
<text x="531.6" y="132.5">16</text>
<text x="528.2" y="136.4">17</text>
<text x="523.8" y="142.0">18</text>
<text x="518.8" y="147.4">19</text>
<text x="514.0" y="150.9">20</text>
<text x="509.9" y="151.1">21</text>
<text x="506.9" y="147.9">22</text>
<text x="504.8" y="141.9">23</text>
<text x="503.6" y="134.1">24</text>
<text x="502.7" y="126.1">25</text>
<text x="501.7" y="119.4">26</text>
<text x="500.1" y="115.6">27</text>
<text x="497.4" y="116.0">28</text>
<text x="493.4" y="121.2">29</text>
<text x="488.3" y="130.2">30</text>
<text x="482.9" y="140.2">31</text>
<text x="478.2" y="148.0">32</text>
<text x="474.9" y="151.0">33</text>
<text x="473.0" y="148.8">34</text>
<text x="472.3" y="142.0">35</text>
<text x="472.3" y="132.2">36</text>
<text x="472.3" y="121.1">37</text>
<text x="471.7" y="110.8">38</text>
<text x="469.9" y="103.3">39</text>
<text x="466.5" y="100.6">40</text>
<text x="461.3" y="104.4">41</text>
<text x="454.9" y="114.8">42</text>
<text x="448.5" y="128.9">43</text>
<text x="443.8" y="141.9">44</text>
<text x="441.4" y="149.5">45</text>
<text x="441.3" y="150.0">46</text>
<text x="442.5" y="144.0">47</text>
<text x="444.2" y="133.4">48</text>
<text x="445.5" y="120.2">49</text>
<text x="445.5" y="106.7">50</text>
<text x="443.7" y="95.2">51</text>
<text x="439.5" y="88.0">52</text>
<text x="432.7" y="88.1">53</text>
<text x="424.2" y="97.1">54</text>
<text x="415.9" y="113.4">55</text>
<text x="410.1" y="131.7">56</text>
<text x="408.4" y="145.3">57</text>
<text x="410.2" y="150.3">58</text>
<text x="414.0" y="146.7">59</text>
<text x="418.1" y="136.6">60</text>
<text x="421.2" y="122.4">61</text>
<text x="422.6" y="106.6">62</text>
<text x="421.3" y="91.4">63</text>
<text x="416.7" y="79.6">64</text>
<text x="408.5" y="74.5">65</text>
<text x="397.4" y="79.2">66</text>
<text x="385.8" y="94.8">67</text>
<text x="377.6" y="116.9">68</text>
<text x="375.3" y="137.1">69</text>
<text x="378.7" y="148.5">70</text>
<text x="385.4" y="149.1">71</text>
<text x="392.6" y="140.8">72</text>
<text x="398.4" y="126.7">73</text>
<text x="401.8" y="109.5">74</text>
<text x="401.8" y="91.7">75</text>
<text x="397.6" y="75.7">76</text>
<text x="388.7" y="64.9">77</text>
<text x="375.3" y="63.5">78</text>
<text x="359.8" y="74.9">79</text>
<text x="347.2" y="97.9">80</text>
<text x="342.3" y="124.1">81</text>
<text x="346.2" y="143.1">82</text>
<text x="355.7" y="149.8">83</text>
<text x="366.6" y="145.0">84</text>
<text x="376.0" y="132.2">85</text>
<text x="382.2" y="114.7">86</text>
<text x="384.3" y="95.1">87</text>
<text x="381.4" y="75.9">88</text>
<text x="372.8" y="60.1">89</text>
<text x="358.1" y="51.9">90</text>
<text x="339.0" y="56.4">91</text>
<text x="320.6" y="76.2">92</text>
<text x="310.6" y="105.9">93</text>
<text x="312.7" y="133.0">94</text>
<text x="324.3" y="147.6">95</text>
<text x="339.2" y="148.2">96</text>
<text x="352.8" y="138.1">97</text>
<text x="362.7" y="121.3">98</text>
<text x="367.8" y="101.0">99</text>
<text x="367.1" y="79.6">100</text>
</g>
<g stroke-width=".8" stroke-linejoin="round"><path d="M572.7 139.2L578.3 131.2L592.0 133.8L585.3 142.5z" stroke="#e8553a" stroke-opacity=".9" fill="#d8604a" fill-opacity=".33"/><path d="M585.3 142.5L592.0 133.8L596.7 142.0L590.0 151.2z" stroke="#4a8be8" stroke-opacity=".9" fill="#7f92b4" fill-opacity=".5"/><path d="M572.7 139.2L585.3 142.5L590.0 151.2L574.3 146.8z" stroke="#9be03a" stroke-opacity=".9" fill="#9be03a" fill-opacity=".2"/></g>
<path d="M585.3 142.5L536 131.2" stroke="#3d86f0" stroke-width="1.1"/>
<path d="M522.7 129.8L536.3 127.69999999999999L535.7 134.8z" fill="#3f8af5"/>
<path d="M585.3 142.5L573.3 120.5" stroke="#ee4a2e" stroke-width="1.1"/>
<ellipse cx="572.4" cy="118.5" rx="4.4" ry="2.9" fill="#f04c2c"/>
<circle cx="569.8" cy="115.5" r="1" fill="#111"/>
<path d="M585.3 142.5L610 107.0" stroke="#9fea2e" stroke-width="1.3"/>
<path d="M618.7 93.80000000000001L605.3 103.80000000000001Q610 109.0 617.3 107.80000000000001z" fill="#98e630"/>
<path d="M618.7 93.80000000000001L605.3 103.80000000000001L609 106.5z" fill="#4f8a16" fill-opacity=".8"/>
<rect x="764" y="5.099999999999994" width="9.5" height="2.6" rx="1" fill="#8b8263" fill-opacity=".8"/>
<path d="M812.3 12.900000000000006h3.6v3h-3.6z" fill="#d8d4c8"/><path d="M813 12.900000000000006v-1a1.1 1.1 0 0 1 2.200 0v1" stroke="#d8d4c8" stroke-width=".6" fill="none"/>
<path d="M789.7 15.299999999999997h9.3l-4.7 11.8z" fill="#5cb82e"/><path d="M794.3 15.299999999999997h4.7l-4.700 11.800z" fill="#3f9a1e"/>
<circle cx="799.6" cy="25.5" r="2.600" fill="#ee3a1e"/>
<path d="M779.3 26.799999999999997v6l10.700-1.400z" fill="#2f7df0"/>
<path d="M800 33.7L811.800 32.099999999999994L811.600 39.099999999999994z" fill="#cfcfcf"/>
<path d="M791.500 37.0L781.300 42.0L788.500 48.0z" fill="#8d8d8d"/><ellipse cx="785.300" cy="44.5" rx="4.800" ry="3.600" transform="rotate(35 785.3 44.5)" fill="#c4c4c4"/>
<path d="M794.300 36.5L791.800 45.8h5z" fill="#f2f2f2"/>
<path d="M789.800 30.0l5.500-2 4.300 1.800v6.200l-4.500 2.300-5.300-2z" fill="#bdbdbd"/><path d="M789.800 30.0l5.300 1.800v6.500l-5.300-2z" fill="#a9a9a9"/><path d="M795.100 31.799999999999997l4.500-2v6.200l-4.500 2.300z" fill="#d4d4d4"/>
<g font-family="Liberation Sans, sans-serif" fill="#e6e2d6">
<text x="791.300" y="12.5" font-size="6.500">y</text><text x="800.300" y="22.799999999999997" font-size="6">x</text><text x="773.200" y="30.799999999999997" font-size="6.500">z</text>
<text x="786.800" y="67.1" font-size="7.700" fill="#d9d5ca">Persp</text></g>
<path d="M784.500 62.5l-5 2.200 5 2.200M784.500 64.69999999999999h-4" stroke="#d9d5ca" stroke-width=".7" fill="none"/>
</svg>
<div class="abs" style="left:2px;top:1.5px;width:26px;height:89.6px;background:#c4c4c4;border-radius:2px;box-shadow:0 0 0 .6px #8a8a8a"></div>
<div class="abs" style="left:2px;top:1.5px;width:26px;height:9.500px;background:#b2b2b2;border-radius:2px 2px 0 0"></div>
<div class="abs" style="left:10.500px;top:5px;width:9.500px;height:2.500px;background:#8f8f8f;border-radius:.5px"></div>
<div class="abs" style="left:3px;top:12px;width:24px;height:12.500px;background:#e2e2e2"></div>
<div class="abs" style="left:3px;top:25.1px;width:24px;height:12.500px;background:#8fbcf3"></div>
<div class="abs" style="left:3px;top:38.2px;width:24px;height:12.500px;background:#e2e2e2"></div>
<div class="abs" style="left:3px;top:51.3px;width:24px;height:12.500px;background:#e2e2e2"></div>
<div class="abs" style="left:3px;top:64.4px;width:24px;height:12.500px;background:#e2e2e2"></div>
<div class="abs" style="left:3px;top:77.5px;width:24px;height:12.500px;background:#e2e2e2"></div>
<svg style="left:9.800px;top:13.100px" width="10.500" height="10.500" viewBox="0 0 21 21"><path d="M6.200 11.500V5.200c0-1.700 2.200-1.700 2.200 0V3.500c0-1.700 2.300-1.700 2.300 0v1c0-1.700 2.300-1.700 2.300 0v1.700c0-1.600 2.200-1.600 2.200 0v7.300c0 4-2 6.500-5.800 6.500-2.800 0-4.200-1.200-5.600-3.800L2.200 12.200c-.6-1.400 1.200-2.300 2.100-1.100z" fill="#2b2b2b"/><path d="M8.400 5v5M10.700 4.500V10M13 6v4.200" stroke="#e2e2e2" stroke-width=".7"/></svg><svg style="left:9.500px;top:26.500px" width="11" height="10" viewBox="0 0 22 20"><path d="M11 1l3 3.500h-6zM11 19l3-3.500h-6zM1.500 10l3.500-3v6zM20.500 10l-3.500-3v6z" fill="#f4f8ff"/><path d="M11 6v2.500M11 11.500V14M7 10h2.500M12.500 10H15" stroke="#f4f8ff" stroke-width="1.300"/></svg><svg style="left:9.300px;top:39.300px" width="11.500" height="11" viewBox="0 0 23 22"><path d="M5.500 15.500A7 7 0 0 1 9.500 4M17.500 6.500A7 7 0 0 1 13.500 18" stroke="#4a4a4a" stroke-width="1.700" fill="none"/><path d="M8 1l4.200 2.600L8.500 7zM15 21l-4.200-2.600L14.500 15z" fill="#4a4a4a"/></svg><svg style="left:10px;top:52.800px" width="10" height="10" viewBox="0 0 20 20"><rect x="2" y="2" width="16" height="16" fill="none" stroke="#444" stroke-width="1.600"/><rect x="2" y="11.500" width="6.500" height="6.500" fill="none" stroke="#444" stroke-width="1.400"/><path d="M10 10l5-5M11.500 4.500h4v4" stroke="#444" stroke-width="1.500" fill="none"/></svg><svg style="left:10px;top:65.800px" width="10" height="10" viewBox="0 0 20 20"><rect x="3" y="3" width="14" height="14" fill="none" stroke="#444" stroke-width="1.400"/><circle cx="3" cy="3" r="1.800" fill="#333"/><circle cx="17" cy="3" r="1.800" fill="#333"/><circle cx="3" cy="17" r="1.800" fill="#333"/><circle cx="17" cy="17" r="1.800" fill="#333"/></svg><svg style="left:9.500px;top:78.500px" width="11" height="11" viewBox="0 0 22 22"><circle cx="10" cy="12" r="6.500" fill="none" stroke="#555" stroke-width="1.400"/><path d="M10 4v16M2.500 12h15M5 7l10 10M15 7 5 17" stroke="#555" stroke-width="1.100"/><path d="M17 2.500l3 0 0 3" stroke="#555" stroke-width="1.300" fill="none"/></svg></div>
<div class="t " style="left:3px;top:304.60px;">Game</div>
<div class="arr" style="left:48.5px;top:307.800px"></div>
<div class="abs" style="left:56.3px;top:302.5px;width:.7px;height:13px;background:#a9a9a9"></div>
<div class="t " style="left:62.5px;top:304.60px;">Display 1</div>
<div class="arr" style="left:102.300px;top:307.800px"></div>
<div class="abs" style="left:109.5px;top:302.5px;width:.7px;height:13px;background:#a9a9a9"></div>
<div class="t " style="left:112.5px;top:304.60px;">1920x1080</div>
<div class="arr" style="left:202.500px;top:307.800px"></div>
<div class="abs" style="left:210.3px;top:302.5px;width:.7px;height:13px;background:#a9a9a9"></div>
<div class="t " style="left:214.5px;top:304.60px;">Scale</div>
<div class="abs" style="left:240px;top:308.900px;width:92px;height:.8px;background:#8a8a8a"></div>
<div class="abs" style="left:238.300px;top:306.600px;width:5.400px;height:5.400px;border-radius:3px;background:#5e5e5e"></div>
<div class="t " style="left:335.5px;top:304.60px;">0.51x</div>
<div class="abs" style="left:646.5px;top:302.5px;width:.7px;height:13px;background:#a9a9a9"></div>
<div class="t " style="left:649px;top:304.60px;">Play Focused</div>
<div class="arr" style="left:707.500px;top:307.800px"></div>
<div class="abs" style="left:715.3px;top:302.5px;width:.7px;height:13px;background:#a9a9a9"></div>
<div class="t " style="left:718.3px;top:304.60px;">Mute Audio</div>
<div class="abs" style="left:761.3px;top:302.5px;width:.7px;height:13px;background:#a9a9a9"></div>
<div class="t " style="left:764px;top:304.60px;">Stats</div>
<div class="abs" style="left:786px;top:302.5px;width:.7px;height:13px;background:#a9a9a9"></div>
<div class="t " style="left:788.3px;top:304.60px;">Gizmos</div>
<div class="abs" style="left:818.3px;top:302.5px;width:.7px;height:13px;background:#a9a9a9"></div>
<div class="arr" style="left:820.800px;top:307.800px"></div>
<div id="game"><svg style="left:0;top:0" width="828.5" height="345.5" viewBox="0 0 828.5 345.5">
<rect x="107" y="0.8" width="614" height="344.7" fill="#000"/>
<rect x="107" y=".3" width="307.200" height="15.200" fill="#efefef"/><rect x="414.800" y=".3" width="306.200" height="15.200" fill="#efefef"/>
<rect x="414.200" y=".3" width=".6" height="15.200" fill="#333"/>
<g font-family="Liberation Sans, sans-serif" font-size="9.500" fill="#2a2a2a" text-anchor="middle"><text x="260.500" y="10.900">Play Next Path Positions</text><text x="567.500" y="10.900">Next Particle</text></g>
<defs><filter id="gbl" x="-50%" y="-50%" width="200%" height="200%"><feGaussianBlur stdDeviation="1.3"/></filter><filter id="gbl2" x="-50%" y="-50%" width="200%" height="200%"><feGaussianBlur stdDeviation=".85"/></filter><filter id="gbl3" x="-50%" y="-50%" width="200%" height="200%"><feGaussianBlur stdDeviation=".55"/></filter></defs>
<g filter="url(#gbl)"><path d="M235.4 110.0L238.6 113.1L241.4 113.5M235.4 110.0L233.0 110.3L229.7 110.0M235.4 110.0L234.5 107.1L234.3 104.5M241.4 113.5L238.7 114.1L235.4 111.6L234.4 108.3M241.4 113.5L238.9 114.4L237.5 118.4L237.0 122.4M235.4 110.0L236.6 106.3L233.9 103.3M235.4 110.0L232.3 113.8L229.5 114.1" stroke="#3d33d6" stroke-width="3.63" stroke-opacity="0.50" fill="none" stroke-linecap="round" stroke-linejoin="round"/><ellipse cx="235.4" cy="110.0" rx="5.68" ry="4.96" transform="rotate(38 235.4 110.0)" fill="#3d33d6" fill-opacity="0.85"/><ellipse cx="241.4" cy="113.5" rx="2.89" ry="2.58" transform="rotate(85 241.4 113.5)" fill="#3d33d6" fill-opacity="0.85"/><ellipse cx="229.7" cy="110.0" rx="3.75" ry="2.33" transform="rotate(72 229.7 110.0)" fill="#3d33d6" fill-opacity="0.85"/><ellipse cx="234.3" cy="104.5" rx="2.79" ry="2.32" transform="rotate(113 234.3 104.5)" fill="#3d33d6" fill-opacity="0.85"/><path d="M253.3 119.5L252.8 121.2L251.0 126.0M251.0 126.0L254.3 127.5L254.6 131.8L255.5 135.1M251.0 126.0L251.1 130.4M251.0 126.0L253.7 123.9" stroke="#3d33d6" stroke-width="3.46" stroke-opacity="0.50" fill="none" stroke-linecap="round" stroke-linejoin="round"/><ellipse cx="253.3" cy="119.5" rx="4.58" ry="3.63" transform="rotate(154 253.3 119.5)" fill="#3d33d6" fill-opacity="0.85"/><ellipse cx="251.0" cy="126.0" rx="2.64" ry="2.37" transform="rotate(18 251.0 126.0)" fill="#3d33d6" fill-opacity="0.85"/><path d="M302.0 109.0L304.1 109.9L306.9 110.1M302.0 109.0L300.6 112.2L301.7 114.9M302.0 109.0L304.7 107.3M302.0 109.0L304.3 107.3M301.7 114.9L305.0 115.0M306.9 110.1L304.3 111.0L301.4 112.0" stroke="#3d33d6" stroke-width="3.40" stroke-opacity="0.50" fill="none" stroke-linecap="round" stroke-linejoin="round"/><ellipse cx="302.0" cy="109.0" rx="4.06" ry="2.91" transform="rotate(133 302.0 109.0)" fill="#3d33d6" fill-opacity="0.85"/><ellipse cx="306.9" cy="110.1" rx="2.48" ry="2.16" transform="rotate(76 306.9 110.1)" fill="#3d33d6" fill-opacity="0.85"/><ellipse cx="301.7" cy="114.9" rx="2.37" ry="1.79" transform="rotate(88 301.7 114.9)" fill="#3d33d6" fill-opacity="0.85"/><path d="M291.6 130.0L292.5 128.7L295.6 124.3M291.6 130.0L294.7 131.0L298.4 129.4M291.6 130.0L292.3 135.5M291.6 130.0L288.1 128.1M295.6 124.3L298.8 124.2" stroke="#3d33d6" stroke-width="4.09" stroke-opacity="0.50" fill="none" stroke-linecap="round" stroke-linejoin="round"/><ellipse cx="291.6" cy="130.0" rx="5.09" ry="3.53" transform="rotate(12 291.6 130.0)" fill="#3d33d6" fill-opacity="0.85"/><ellipse cx="295.6" cy="124.3" rx="2.98" ry="1.86" transform="rotate(25 295.6 124.3)" fill="#3d33d6" fill-opacity="0.85"/><path d="M277.4 143.1L277.9 147.5L275.6 149.3M277.4 143.1L277.0 141.4L277.2 137.8M277.2 137.8L281.2 137.1L284.1 137.3L288.7 139.2M275.6 149.3L278.8 146.4L281.3 143.6M277.2 137.8L280.8 135.8L283.6 134.1L287.4 133.7" stroke="#3d33d6" stroke-width="3.63" stroke-opacity="0.50" fill="none" stroke-linecap="round" stroke-linejoin="round"/><ellipse cx="277.4" cy="143.1" rx="5.49" ry="4.81" transform="rotate(111 277.4 143.1)" fill="#3d33d6" fill-opacity="0.85"/><ellipse cx="275.6" cy="149.3" rx="4.12" ry="2.49" transform="rotate(46 275.6 149.3)" fill="#3d33d6" fill-opacity="0.85"/><ellipse cx="277.2" cy="137.8" rx="3.90" ry="3.13" transform="rotate(54 277.2 137.8)" fill="#3d33d6" fill-opacity="0.85"/><path d="M214.4 152.0L214.9 148.6L216.0 146.8M216.0 146.8L219.1 145.5M216.0 146.8L217.1 151.0M214.4 152.0L215.6 149.5L217.4 145.4M216.0 146.8L213.6 149.0L209.0 149.1L206.3 149.4" stroke="#3d33d6" stroke-width="3.39" stroke-opacity="0.50" fill="none" stroke-linecap="round" stroke-linejoin="round"/><ellipse cx="214.4" cy="152.0" rx="5.15" ry="4.44" transform="rotate(6 214.4 152.0)" fill="#3d33d6" fill-opacity="0.85"/><ellipse cx="216.0" cy="146.8" rx="2.79" ry="2.27" transform="rotate(7 216.0 146.8)" fill="#3d33d6" fill-opacity="0.85"/><path d="M298.4 153.5L302.0 154.0L303.5 151.0M298.4 153.5L295.8 154.4L295.9 158.0M295.9 158.0L297.3 153.8L295.9 150.1M298.4 153.5L298.0 150.6L294.8 147.2M295.9 158.0L294.2 153.1L290.0 150.9L288.0 148.2M303.5 151.0L306.5 148.6L307.6 143.9L304.5 141.2" stroke="#3d33d6" stroke-width="3.75" stroke-opacity="0.50" fill="none" stroke-linecap="round" stroke-linejoin="round"/><ellipse cx="298.4" cy="153.5" rx="5.52" ry="4.14" transform="rotate(117 298.4 153.5)" fill="#3d33d6" fill-opacity="0.85"/><ellipse cx="303.5" cy="151.0" rx="2.98" ry="2.09" transform="rotate(148 303.5 151.0)" fill="#3d33d6" fill-opacity="0.85"/><ellipse cx="295.9" cy="158.0" rx="4.22" ry="3.78" transform="rotate(59 295.9 158.0)" fill="#3d33d6" fill-opacity="0.85"/><path d="M298.4 167.8L297.0 169.7L293.8 172.7M298.4 167.8L299.6 170.7M293.8 172.7L296.3 171.2L299.5 172.1M298.4 167.8L298.7 172.1L299.3 176.6M293.8 172.7L297.6 172.0L300.7 173.3" stroke="#3d33d6" stroke-width="3.30" stroke-opacity="0.50" fill="none" stroke-linecap="round" stroke-linejoin="round"/><ellipse cx="298.4" cy="167.8" rx="4.22" ry="3.58" transform="rotate(101 298.4 167.8)" fill="#3d33d6" fill-opacity="0.85"/><ellipse cx="293.8" cy="172.7" rx="3.26" ry="2.12" transform="rotate(101 293.8 172.7)" fill="#3d33d6" fill-opacity="0.85"/><path d="M248.6 178.3L249.6 179.3L253.4 183.7M248.6 178.3L246.4 179.9L245.0 181.3M248.6 178.3L245.1 177.5L244.8 173.9M248.6 178.3L245.1 181.8L242.0 185.6L238.4 186.4M253.4 183.7L249.2 186.1M244.8 173.9L241.1 175.9M245.0 181.3L248.1 180.6" stroke="#3d33d6" stroke-width="3.69" stroke-opacity="0.50" fill="none" stroke-linecap="round" stroke-linejoin="round"/><ellipse cx="248.6" cy="178.3" rx="4.80" ry="3.29" transform="rotate(2 248.6 178.3)" fill="#3d33d6" fill-opacity="0.85"/><ellipse cx="253.4" cy="183.7" rx="3.81" ry="2.56" transform="rotate(130 253.4 183.7)" fill="#3d33d6" fill-opacity="0.85"/><ellipse cx="245.0" cy="181.3" rx="3.67" ry="2.75" transform="rotate(90 245.0 181.3)" fill="#3d33d6" fill-opacity="0.85"/><ellipse cx="244.8" cy="173.9" rx="3.39" ry="2.90" transform="rotate(105 244.8 173.9)" fill="#3d33d6" fill-opacity="0.85"/><path d="M333.6 153.5L337.1 154.6L339.9 155.3M333.6 153.5L329.2 151.5L324.6 152.2L320.3 149.7M339.9 155.3L334.6 155.2M333.6 153.5L336.7 153.6M339.9 155.3L343.3 158.3L347.6 158.5" stroke="#3d33d6" stroke-width="3.80" stroke-opacity="0.50" fill="none" stroke-linecap="round" stroke-linejoin="round"/><ellipse cx="333.6" cy="153.5" rx="5.68" ry="3.57" transform="rotate(144 333.6 153.5)" fill="#3d33d6" fill-opacity="0.85"/><ellipse cx="339.9" cy="155.3" rx="4.37" ry="3.09" transform="rotate(103 339.9 155.3)" fill="#3d33d6" fill-opacity="0.85"/><path d="M331.0 164.1L331.9 162.5L336.3 160.6M331.0 164.1L332.7 166.0L334.3 167.5M331.0 164.1L334.1 165.5M336.3 160.6L339.5 159.6" stroke="#3d33d6" stroke-width="3.99" stroke-opacity="0.50" fill="none" stroke-linecap="round" stroke-linejoin="round"/><ellipse cx="331.0" cy="164.1" rx="4.94" ry="3.08" transform="rotate(123 331.0 164.1)" fill="#3d33d6" fill-opacity="0.85"/><ellipse cx="336.3" cy="160.6" rx="4.28" ry="3.07" transform="rotate(17 336.3 160.6)" fill="#3d33d6" fill-opacity="0.85"/><ellipse cx="334.3" cy="167.5" rx="2.98" ry="2.11" transform="rotate(77 334.3 167.5)" fill="#3d33d6" fill-opacity="0.85"/><path d="M359.8 144.7L360.3 146.3L362.8 147.9M359.8 144.7L355.7 145.6L354.7 143.9M354.7 143.9L358.3 143.4L361.0 146.7L365.1 148.3M354.7 143.9L356.8 141.2M362.8 147.9L364.6 144.9L364.1 141.9L360.8 139.2M362.8 147.9L359.2 145.0" stroke="#3d33d6" stroke-width="3.40" stroke-opacity="0.50" fill="none" stroke-linecap="round" stroke-linejoin="round"/><ellipse cx="359.8" cy="144.7" rx="4.06" ry="2.50" transform="rotate(162 359.8 144.7)" fill="#3d33d6" fill-opacity="0.85"/><ellipse cx="362.8" cy="147.9" rx="3.21" ry="2.85" transform="rotate(49 362.8 147.9)" fill="#3d33d6" fill-opacity="0.85"/><ellipse cx="354.7" cy="143.9" rx="2.71" ry="1.80" transform="rotate(54 354.7 143.9)" fill="#3d33d6" fill-opacity="0.85"/><path d="M398.2 143.1L401.2 142.4L402.4 138.5M398.2 143.1L394.6 142.6L390.2 141.9L387.8 140.6M402.4 138.5L401.9 142.3L398.3 144.0" stroke="#3d33d6" stroke-width="3.59" stroke-opacity="0.50" fill="none" stroke-linecap="round" stroke-linejoin="round"/><ellipse cx="398.2" cy="143.1" rx="5.10" ry="4.04" transform="rotate(179 398.2 143.1)" fill="#3d33d6" fill-opacity="0.85"/><ellipse cx="402.4" cy="138.5" rx="3.88" ry="2.42" transform="rotate(146 402.4 138.5)" fill="#3d33d6" fill-opacity="0.85"/><path d="M436.0 167.8L436.9 171.9L437.4 175.3M437.4 175.3L434.7 177.7L431.6 180.1L429.6 184.7M437.4 175.3L441.5 176.9M437.4 175.3L434.5 173.3L430.6 171.7" stroke="#3d33d6" stroke-width="3.77" stroke-opacity="0.50" fill="none" stroke-linecap="round" stroke-linejoin="round"/><ellipse cx="436.0" cy="167.8" rx="5.12" ry="3.56" transform="rotate(130 436.0 167.8)" fill="#3d33d6" fill-opacity="0.85"/><ellipse cx="437.4" cy="175.3" rx="4.41" ry="2.94" transform="rotate(144 437.4 175.3)" fill="#3d33d6" fill-opacity="0.85"/><path d="M405.5 176.2L402.3 173.1L398.4 172.9M405.5 176.2L408.8 173.3L411.2 170.7M405.5 176.2L406.1 180.1M411.2 170.7L409.0 174.4L407.4 178.9L405.2 183.8" stroke="#3d33d6" stroke-width="3.89" stroke-opacity="0.50" fill="none" stroke-linecap="round" stroke-linejoin="round"/><ellipse cx="405.5" cy="176.2" rx="6.28" ry="5.15" transform="rotate(171 405.5 176.2)" fill="#3d33d6" fill-opacity="0.85"/><ellipse cx="398.4" cy="172.9" rx="4.26" ry="2.70" transform="rotate(43 398.4 172.9)" fill="#3d33d6" fill-opacity="0.85"/><ellipse cx="411.2" cy="170.7" rx="4.46" ry="3.73" transform="rotate(161 411.2 170.7)" fill="#3d33d6" fill-opacity="0.85"/><path d="M378.2 183.5L381.6 184.0L385.0 183.5M378.2 183.5L377.2 186.7L378.3 188.6M378.2 183.5L382.5 183.0L384.8 179.6M378.2 183.5L376.0 180.9L377.3 177.2L377.5 173.5M385.0 183.5L387.3 180.3M378.3 188.6L380.2 184.4" stroke="#3d33d6" stroke-width="3.80" stroke-opacity="0.50" fill="none" stroke-linecap="round" stroke-linejoin="round"/><ellipse cx="378.2" cy="183.5" rx="4.97" ry="3.21" transform="rotate(70 378.2 183.5)" fill="#3d33d6" fill-opacity="0.85"/><ellipse cx="385.0" cy="183.5" rx="3.02" ry="2.57" transform="rotate(28 385.0 183.5)" fill="#3d33d6" fill-opacity="0.85"/><ellipse cx="378.3" cy="188.6" rx="4.65" ry="3.19" transform="rotate(107 378.3 188.6)" fill="#3d33d6" fill-opacity="0.85"/><path d="M412.3 195.5L407.2 194.3L405.2 192.7M405.2 192.7L407.2 195.5M412.3 195.5L413.0 190.9L411.9 187.8M405.2 192.7L402.7 190.6L400.9 186.7" stroke="#3d33d6" stroke-width="3.93" stroke-opacity="0.50" fill="none" stroke-linecap="round" stroke-linejoin="round"/><ellipse cx="412.3" cy="195.5" rx="5.40" ry="4.76" transform="rotate(165 412.3 195.5)" fill="#3d33d6" fill-opacity="0.85"/><ellipse cx="405.2" cy="192.7" rx="2.87" ry="2.10" transform="rotate(164 405.2 192.7)" fill="#3d33d6" fill-opacity="0.85"/><path d="M492.6 181.5L491.9 178.5L489.9 174.8M492.6 181.5L496.4 179.7L497.9 176.1M489.9 174.8L486.7 173.5L483.8 169.3L481.1 167.9M497.9 176.1L502.6 178.8M497.9 176.1L496.3 172.1L497.1 169.0" stroke="#3d33d6" stroke-width="3.97" stroke-opacity="0.50" fill="none" stroke-linecap="round" stroke-linejoin="round"/><ellipse cx="492.6" cy="181.5" rx="5.51" ry="4.53" transform="rotate(15 492.6 181.5)" fill="#3d33d6" fill-opacity="0.85"/><ellipse cx="489.9" cy="174.8" rx="3.88" ry="2.43" transform="rotate(162 489.9 174.8)" fill="#3d33d6" fill-opacity="0.85"/><ellipse cx="497.9" cy="176.1" rx="2.78" ry="1.79" transform="rotate(114 497.9 176.1)" fill="#3d33d6" fill-opacity="0.85"/><path d="M535.7 190.3L534.1 188.1L531.2 185.9M535.7 190.3L538.2 189.6L540.4 187.2M540.4 187.2L545.8 187.4L548.6 186.5M531.2 185.9L535.7 185.7L540.4 185.8M535.7 190.3L532.5 188.9L528.2 190.3M540.4 187.2L543.3 190.3" stroke="#3d33d6" stroke-width="3.92" stroke-opacity="0.50" fill="none" stroke-linecap="round" stroke-linejoin="round"/><ellipse cx="535.7" cy="190.3" rx="5.07" ry="4.39" transform="rotate(49 535.7 190.3)" fill="#3d33d6" fill-opacity="0.85"/><ellipse cx="531.2" cy="185.9" rx="4.38" ry="3.59" transform="rotate(85 531.2 185.9)" fill="#3d33d6" fill-opacity="0.85"/><ellipse cx="540.4" cy="187.2" rx="4.83" ry="3.12" transform="rotate(55 540.4 187.2)" fill="#3d33d6" fill-opacity="0.85"/><path d="M522.6 206.1L519.6 208.9L518.9 212.8M522.6 206.1L520.2 203.4L516.4 202.9M522.6 206.1L527.8 204.6L533.0 203.7M518.9 212.8L523.7 211.1L525.3 206.1M518.9 212.8L521.2 216.2" stroke="#3d33d6" stroke-width="4.08" stroke-opacity="0.50" fill="none" stroke-linecap="round" stroke-linejoin="round"/><ellipse cx="522.6" cy="206.1" rx="6.19" ry="4.67" transform="rotate(95 522.6 206.1)" fill="#3d33d6" fill-opacity="0.85"/><ellipse cx="518.9" cy="212.8" rx="3.52" ry="3.16" transform="rotate(49 518.9 212.8)" fill="#3d33d6" fill-opacity="0.85"/><path d="M546.2 218.2L544.6 222.2L543.6 223.5M546.2 218.2L544.3 213.6M546.2 218.2L542.3 216.8L538.0 218.7L537.7 223.6M546.2 218.2L546.7 213.9" stroke="#3d33d6" stroke-width="3.83" stroke-opacity="0.50" fill="none" stroke-linecap="round" stroke-linejoin="round"/><ellipse cx="546.2" cy="218.2" rx="6.05" ry="5.24" transform="rotate(95 546.2 218.2)" fill="#3d33d6" fill-opacity="0.85"/><ellipse cx="543.6" cy="223.5" rx="3.17" ry="1.98" transform="rotate(125 543.6 223.5)" fill="#3d33d6" fill-opacity="0.85"/><path d="M580.3 197.2L580.9 193.6L579.0 191.4M580.3 197.2L582.6 193.5L586.4 192.9M580.3 197.2L579.9 200.2L580.9 203.5M580.3 197.2L580.8 201.8L579.4 206.3L576.9 208.3M580.9 203.5L584.4 205.6L587.6 205.9M580.3 197.2L580.4 192.8L578.8 189.3L577.5 185.8M586.4 192.9L587.8 189.6L586.5 185.0L583.4 180.8" stroke="#3d33d6" stroke-width="3.92" stroke-opacity="0.50" fill="none" stroke-linecap="round" stroke-linejoin="round"/><ellipse cx="580.3" cy="197.2" rx="6.12" ry="5.00" transform="rotate(101 580.3 197.2)" fill="#3d33d6" fill-opacity="0.85"/><ellipse cx="579.0" cy="191.4" rx="4.71" ry="4.00" transform="rotate(60 579.0 191.4)" fill="#3d33d6" fill-opacity="0.85"/><ellipse cx="586.4" cy="192.9" rx="3.15" ry="2.03" transform="rotate(17 586.4 192.9)" fill="#3d33d6" fill-opacity="0.85"/><ellipse cx="580.9" cy="203.5" rx="3.04" ry="2.44" transform="rotate(17 580.9 203.5)" fill="#3d33d6" fill-opacity="0.85"/><path d="M184.0 203.5L180.4 208.2L180.2 209.3M180.2 209.3L183.6 207.3L187.6 205.2M184.0 203.5L186.0 198.8L189.0 195.1M180.2 209.3L184.4 210.3" stroke="#3d33d6" stroke-width="3.88" stroke-opacity="0.50" fill="none" stroke-linecap="round" stroke-linejoin="round"/><ellipse cx="184.0" cy="203.5" rx="4.94" ry="3.45" transform="rotate(3 184.0 203.5)" fill="#3d33d6" fill-opacity="0.85"/><ellipse cx="180.2" cy="209.3" rx="2.89" ry="2.30" transform="rotate(62 180.2 209.3)" fill="#3d33d6" fill-opacity="0.85"/><path d="M269.0 197.2L266.4 196.5L265.5 195.1M269.0 197.2L270.3 195.0L271.5 192.4M271.5 192.4L273.6 194.3L273.1 198.1L274.4 200.3M269.0 197.2L266.0 196.3L264.9 193.2" stroke="#3d33d6" stroke-width="3.30" stroke-opacity="0.50" fill="none" stroke-linecap="round" stroke-linejoin="round"/><ellipse cx="269.0" cy="197.2" rx="4.22" ry="2.69" transform="rotate(83 269.0 197.2)" fill="#3d33d6" fill-opacity="0.85"/><ellipse cx="265.5" cy="195.1" rx="3.60" ry="2.30" transform="rotate(175 265.5 195.1)" fill="#3d33d6" fill-opacity="0.85"/><ellipse cx="271.5" cy="192.4" rx="2.82" ry="2.16" transform="rotate(163 271.5 192.4)" fill="#3d33d6" fill-opacity="0.85"/><path d="M316.3 199.3L312.4 196.7L309.6 196.4M316.3 199.3L317.1 196.7L317.3 191.9M316.3 199.3L317.8 201.2L319.6 203.7M309.6 196.4L305.1 198.5L300.9 199.3L298.0 198.1M319.6 203.7L316.5 204.1M319.6 203.7L322.8 204.6L323.8 207.4L322.5 211.7M309.6 196.4L305.9 197.9L302.4 200.2" stroke="#3d33d6" stroke-width="3.74" stroke-opacity="0.50" fill="none" stroke-linecap="round" stroke-linejoin="round"/><ellipse cx="316.3" cy="199.3" rx="5.94" ry="4.91" transform="rotate(124 316.3 199.3)" fill="#3d33d6" fill-opacity="0.85"/><ellipse cx="309.6" cy="196.4" rx="3.27" ry="2.44" transform="rotate(135 309.6 196.4)" fill="#3d33d6" fill-opacity="0.85"/><ellipse cx="317.3" cy="191.9" rx="2.58" ry="2.20" transform="rotate(179 317.3 191.9)" fill="#3d33d6" fill-opacity="0.85"/><ellipse cx="319.6" cy="203.7" rx="4.16" ry="3.01" transform="rotate(154 319.6 203.7)" fill="#3d33d6" fill-opacity="0.85"/><path d="M344.0 200.8L344.2 204.6L345.7 206.4M344.0 200.8L342.8 204.7L339.1 206.0M344.0 200.8L342.7 199.2L343.1 195.3M343.1 195.3L346.9 196.3L350.2 195.3M343.1 195.3L346.4 198.2" stroke="#3d33d6" stroke-width="3.62" stroke-opacity="0.50" fill="none" stroke-linecap="round" stroke-linejoin="round"/><ellipse cx="344.0" cy="200.8" rx="4.48" ry="3.18" transform="rotate(157 344.0 200.8)" fill="#3d33d6" fill-opacity="0.85"/><ellipse cx="345.7" cy="206.4" rx="3.34" ry="2.57" transform="rotate(98 345.7 206.4)" fill="#3d33d6" fill-opacity="0.85"/><ellipse cx="339.1" cy="206.0" rx="3.09" ry="2.46" transform="rotate(30 339.1 206.0)" fill="#3d33d6" fill-opacity="0.85"/><ellipse cx="343.1" cy="195.3" rx="3.25" ry="2.07" transform="rotate(76 343.1 195.3)" fill="#3d33d6" fill-opacity="0.85"/><path d="M449.0 214.0L445.5 214.5L442.7 215.9M449.0 214.0L448.4 210.5L447.3 209.7M449.0 214.0L449.8 212.9L453.4 209.3M447.3 209.7L445.4 207.6L445.5 203.8M449.0 214.0L447.7 216.1L444.9 218.7M442.7 215.9L438.9 217.8" stroke="#3d33d6" stroke-width="3.27" stroke-opacity="0.50" fill="none" stroke-linecap="round" stroke-linejoin="round"/><ellipse cx="449.0" cy="214.0" rx="5.01" ry="3.17" transform="rotate(9 449.0 214.0)" fill="#3d33d6" fill-opacity="0.85"/><ellipse cx="442.7" cy="215.9" rx="2.25" ry="1.56" transform="rotate(131 442.7 215.9)" fill="#3d33d6" fill-opacity="0.85"/><ellipse cx="447.3" cy="209.7" rx="2.84" ry="2.45" transform="rotate(162 447.3 209.7)" fill="#3d33d6" fill-opacity="0.85"/><ellipse cx="453.4" cy="209.3" rx="3.75" ry="2.40" transform="rotate(128 453.4 209.3)" fill="#3d33d6" fill-opacity="0.85"/><path d="M471.7 215.0L469.0 212.7L467.9 212.1M471.7 215.0L474.8 212.2L475.7 209.3M475.7 209.3L473.8 206.6L470.8 205.4M475.7 209.3L479.5 211.1" stroke="#3d33d6" stroke-width="3.87" stroke-opacity="0.50" fill="none" stroke-linecap="round" stroke-linejoin="round"/><ellipse cx="471.7" cy="215.0" rx="5.30" ry="3.25" transform="rotate(96 471.7 215.0)" fill="#3d33d6" fill-opacity="0.85"/><ellipse cx="467.9" cy="212.1" rx="4.16" ry="2.85" transform="rotate(108 467.9 212.1)" fill="#3d33d6" fill-opacity="0.85"/><ellipse cx="475.7" cy="209.3" rx="3.75" ry="3.15" transform="rotate(45 475.7 209.3)" fill="#3d33d6" fill-opacity="0.85"/><path d="M496.3 224.5L494.2 227.4L491.4 227.8M496.3 224.5L497.4 221.1L498.0 220.7M496.3 224.5L495.6 228.8L496.3 232.1L499.3 233.1M498.0 220.7L498.4 217.2L499.7 213.3L498.1 210.4M498.0 220.7L494.0 219.7L490.7 220.8" stroke="#3d33d6" stroke-width="3.28" stroke-opacity="0.50" fill="none" stroke-linecap="round" stroke-linejoin="round"/><ellipse cx="496.3" cy="224.5" rx="5.32" ry="4.12" transform="rotate(40 496.3 224.5)" fill="#3d33d6" fill-opacity="0.85"/><ellipse cx="491.4" cy="227.8" rx="2.31" ry="1.41" transform="rotate(90 491.4 227.8)" fill="#3d33d6" fill-opacity="0.85"/><ellipse cx="498.0" cy="220.7" rx="3.92" ry="3.19" transform="rotate(107 498.0 220.7)" fill="#3d33d6" fill-opacity="0.85"/><path d="M346.7 232.3L350.9 232.7L353.5 230.6M346.7 232.3L349.3 235.4M346.7 232.3L344.0 231.3" stroke="#3d33d6" stroke-width="3.75" stroke-opacity="0.50" fill="none" stroke-linecap="round" stroke-linejoin="round"/><ellipse cx="346.7" cy="232.3" rx="4.99" ry="3.92" transform="rotate(57 346.7 232.3)" fill="#3d33d6" fill-opacity="0.85"/><ellipse cx="353.5" cy="230.6" rx="3.64" ry="2.47" transform="rotate(95 353.5 230.6)" fill="#3d33d6" fill-opacity="0.85"/><path d="M380.8 235.0L382.0 232.9L382.1 230.1M380.8 235.0L380.4 238.3L377.7 239.5M382.1 230.1L384.9 228.6L388.8 226.2L388.7 222.8M380.8 235.0L384.6 235.5L386.6 233.4L391.0 234.7" stroke="#3d33d6" stroke-width="3.77" stroke-opacity="0.50" fill="none" stroke-linecap="round" stroke-linejoin="round"/><ellipse cx="380.8" cy="235.0" rx="5.54" ry="3.71" transform="rotate(132 380.8 235.0)" fill="#3d33d6" fill-opacity="0.85"/><ellipse cx="382.1" cy="230.1" rx="3.64" ry="2.79" transform="rotate(46 382.1 230.1)" fill="#3d33d6" fill-opacity="0.85"/><path d="M417.6 232.3L415.8 233.4L410.7 233.0M417.6 232.3L417.3 231.5L416.6 228.0M417.6 232.3L415.3 230.3L412.9 229.1M410.7 233.0L406.6 234.3M410.7 233.0L411.1 237.2M410.7 233.0L406.3 232.7L403.5 234.6L403.3 238.6" stroke="#3d33d6" stroke-width="3.43" stroke-opacity="0.50" fill="none" stroke-linecap="round" stroke-linejoin="round"/><ellipse cx="417.6" cy="232.3" rx="4.20" ry="2.87" transform="rotate(65 417.6 232.3)" fill="#3d33d6" fill-opacity="0.85"/><ellipse cx="410.7" cy="233.0" rx="4.14" ry="2.71" transform="rotate(3 410.7 233.0)" fill="#3d33d6" fill-opacity="0.85"/><ellipse cx="416.6" cy="228.0" rx="3.49" ry="2.50" transform="rotate(47 416.6 228.0)" fill="#3d33d6" fill-opacity="0.85"/><path d="M438.6 242.8L435.9 241.9L431.2 239.4M438.6 242.8L443.8 242.2L447.3 240.8M438.6 242.8L439.4 245.9L443.3 248.3L446.7 246.5" stroke="#3d33d6" stroke-width="4.09" stroke-opacity="0.50" fill="none" stroke-linecap="round" stroke-linejoin="round"/><ellipse cx="438.6" cy="242.8" rx="5.33" ry="4.07" transform="rotate(76 438.6 242.8)" fill="#3d33d6" fill-opacity="0.85"/><ellipse cx="431.2" cy="239.4" rx="3.64" ry="2.95" transform="rotate(24 431.2 239.4)" fill="#3d33d6" fill-opacity="0.85"/><path d="M467.5 249.1L465.0 250.2L464.2 252.6M467.5 249.1L465.6 246.0L464.7 244.8M467.5 249.1L468.0 244.8L471.0 243.6M464.7 244.8L467.6 246.5" stroke="#3d33d6" stroke-width="3.45" stroke-opacity="0.50" fill="none" stroke-linecap="round" stroke-linejoin="round"/><ellipse cx="467.5" cy="249.1" rx="5.10" ry="4.25" transform="rotate(22 467.5 249.1)" fill="#3d33d6" fill-opacity="0.85"/><ellipse cx="464.2" cy="252.6" rx="3.76" ry="3.14" transform="rotate(67 464.2 252.6)" fill="#3d33d6" fill-opacity="0.85"/><ellipse cx="464.7" cy="244.8" rx="4.05" ry="3.40" transform="rotate(47 464.7 244.8)" fill="#3d33d6" fill-opacity="0.85"/><path d="M211.3 244.5L208.7 242.9L208.1 240.3M211.3 244.5L212.0 241.3L214.4 240.6M208.1 240.3L210.1 236.9L212.4 233.7M211.3 244.5L212.9 242.4M208.1 240.3L207.6 244.0L207.5 247.1" stroke="#3d33d6" stroke-width="3.32" stroke-opacity="0.50" fill="none" stroke-linecap="round" stroke-linejoin="round"/><ellipse cx="211.3" cy="244.5" rx="4.02" ry="2.44" transform="rotate(46 211.3 244.5)" fill="#3d33d6" fill-opacity="0.85"/><ellipse cx="208.1" cy="240.3" rx="2.80" ry="2.43" transform="rotate(62 208.1 240.3)" fill="#3d33d6" fill-opacity="0.85"/><ellipse cx="214.4" cy="240.6" rx="3.17" ry="2.15" transform="rotate(102 214.4 240.6)" fill="#3d33d6" fill-opacity="0.85"/><path d="M275.8 237.5L274.4 233.4L271.4 231.3M275.8 237.5L274.2 234.9L270.2 234.7M271.4 231.3L272.0 234.5L272.7 238.0" stroke="#3d33d6" stroke-width="3.84" stroke-opacity="0.50" fill="none" stroke-linecap="round" stroke-linejoin="round"/><ellipse cx="275.8" cy="237.5" rx="5.64" ry="5.04" transform="rotate(65 275.8 237.5)" fill="#3d33d6" fill-opacity="0.85"/><ellipse cx="271.4" cy="231.3" rx="2.71" ry="1.78" transform="rotate(27 271.4 231.3)" fill="#3d33d6" fill-opacity="0.85"/><path d="M290.0 250.5L288.7 253.2L287.4 254.9M290.0 250.5L290.2 246.5L292.3 244.1L291.8 241.5M290.0 250.5L287.3 249.1L284.2 250.0L280.0 249.4M287.4 254.9L285.7 258.5L284.0 262.1M287.4 254.9L283.4 255.7" stroke="#3d33d6" stroke-width="3.42" stroke-opacity="0.50" fill="none" stroke-linecap="round" stroke-linejoin="round"/><ellipse cx="290.0" cy="250.5" rx="4.41" ry="3.96" transform="rotate(158 290.0 250.5)" fill="#3d33d6" fill-opacity="0.85"/><ellipse cx="287.4" cy="254.9" rx="2.81" ry="2.43" transform="rotate(147 287.4 254.9)" fill="#3d33d6" fill-opacity="0.85"/><path d="M375.6 253.3L378.2 251.5L379.1 248.5M375.6 253.3L376.1 255.9L378.2 257.6M378.2 257.6L375.2 254.6M378.2 257.6L382.2 257.6L385.1 254.4L385.7 251.5M375.6 253.3L374.2 257.1L370.7 257.8L366.4 256.8" stroke="#3d33d6" stroke-width="3.50" stroke-opacity="0.50" fill="none" stroke-linecap="round" stroke-linejoin="round"/><ellipse cx="375.6" cy="253.3" rx="4.94" ry="3.36" transform="rotate(167 375.6 253.3)" fill="#3d33d6" fill-opacity="0.85"/><ellipse cx="379.1" cy="248.5" rx="3.22" ry="2.17" transform="rotate(49 379.1 248.5)" fill="#3d33d6" fill-opacity="0.85"/><ellipse cx="378.2" cy="257.6" rx="3.19" ry="2.28" transform="rotate(120 378.2 257.6)" fill="#3d33d6" fill-opacity="0.85"/><path d="M375.6 269.1L378.3 269.7L379.4 266.7M379.4 266.7L374.7 268.3M375.6 269.1L372.6 273.1L369.8 275.0" stroke="#3d33d6" stroke-width="3.85" stroke-opacity="0.50" fill="none" stroke-linecap="round" stroke-linejoin="round"/><ellipse cx="375.6" cy="269.1" rx="4.66" ry="3.36" transform="rotate(130 375.6 269.1)" fill="#3d33d6" fill-opacity="0.85"/><ellipse cx="379.4" cy="266.7" rx="3.27" ry="2.53" transform="rotate(26 379.4 266.7)" fill="#3d33d6" fill-opacity="0.85"/><path d="M257.5 269.1L261.5 268.3L262.5 269.3M262.5 269.3L262.3 272.8L261.7 276.3M262.5 269.3L264.8 271.7M262.5 269.3L258.3 272.1" stroke="#3d33d6" stroke-width="3.85" stroke-opacity="0.50" fill="none" stroke-linecap="round" stroke-linejoin="round"/><ellipse cx="257.5" cy="269.1" rx="5.49" ry="3.42" transform="rotate(56 257.5 269.1)" fill="#3d33d6" fill-opacity="0.85"/><ellipse cx="262.5" cy="269.3" rx="2.88" ry="2.14" transform="rotate(33 262.5 269.3)" fill="#3d33d6" fill-opacity="0.85"/><path d="M273.2 271.7L270.8 269.2L267.9 268.9M267.9 268.9L263.2 272.1L259.2 275.6M273.2 271.7L271.0 275.6M273.2 271.7L270.7 274.7M267.9 268.9L270.4 265.7" stroke="#3d33d6" stroke-width="4.16" stroke-opacity="0.50" fill="none" stroke-linecap="round" stroke-linejoin="round"/><ellipse cx="273.2" cy="271.7" rx="6.74" ry="4.58" transform="rotate(138 273.2 271.7)" fill="#3d33d6" fill-opacity="0.85"/><ellipse cx="267.9" cy="268.9" rx="4.17" ry="3.66" transform="rotate(44 267.9 268.9)" fill="#3d33d6" fill-opacity="0.85"/><path d="M302.0 272.8L301.6 278.0L302.9 280.3M302.0 272.8L299.4 270.5L300.1 267.6M302.9 280.3L300.3 282.4L296.4 280.8M302.9 280.3L304.1 284.3L304.5 287.7" stroke="#3d33d6" stroke-width="3.68" stroke-opacity="0.50" fill="none" stroke-linecap="round" stroke-linejoin="round"/><ellipse cx="302.0" cy="272.8" rx="5.66" ry="3.70" transform="rotate(38 302.0 272.8)" fill="#3d33d6" fill-opacity="0.85"/><ellipse cx="302.9" cy="280.3" rx="2.74" ry="1.75" transform="rotate(8 302.9 280.3)" fill="#3d33d6" fill-opacity="0.85"/><ellipse cx="300.1" cy="267.6" rx="3.98" ry="2.64" transform="rotate(55 300.1 267.6)" fill="#3d33d6" fill-opacity="0.85"/><path d="M324.7 271.7L323.2 269.5L322.3 268.5M324.7 271.7L328.9 270.6M324.7 271.7L320.2 270.1L316.8 271.1M324.7 271.7L328.0 268.3M322.3 268.5L324.3 266.8L328.4 266.1" stroke="#3d33d6" stroke-width="3.53" stroke-opacity="0.50" fill="none" stroke-linecap="round" stroke-linejoin="round"/><ellipse cx="324.7" cy="271.7" rx="4.42" ry="2.72" transform="rotate(164 324.7 271.7)" fill="#3d33d6" fill-opacity="0.85"/><ellipse cx="322.3" cy="268.5" rx="3.43" ry="2.41" transform="rotate(111 322.3 268.5)" fill="#3d33d6" fill-opacity="0.85"/><path d="M330.0 284.8L329.9 280.4L330.6 277.9M330.0 284.8L333.2 286.3L335.8 287.4M330.0 284.8L325.9 284.6L321.3 283.3M330.0 284.8L328.9 280.6L326.2 277.1M335.8 287.4L331.0 287.7M330.0 284.8L328.4 287.4L329.3 290.2L331.8 292.4" stroke="#3d33d6" stroke-width="3.62" stroke-opacity="0.50" fill="none" stroke-linecap="round" stroke-linejoin="round"/><ellipse cx="330.0" cy="284.8" rx="5.10" ry="3.12" transform="rotate(33 330.0 284.8)" fill="#3d33d6" fill-opacity="0.85"/><ellipse cx="330.6" cy="277.9" rx="3.90" ry="2.94" transform="rotate(62 330.6 277.9)" fill="#3d33d6" fill-opacity="0.85"/><ellipse cx="335.8" cy="287.4" rx="3.34" ry="2.21" transform="rotate(63 335.8 287.4)" fill="#3d33d6" fill-opacity="0.85"/><path d="M270.6 287.5L270.3 287.1L268.2 284.5M270.6 287.5L273.8 288.5L275.4 289.2M270.6 287.5L269.4 285.3M268.2 284.5L270.6 285.6" stroke="#3d33d6" stroke-width="3.21" stroke-opacity="0.50" fill="none" stroke-linecap="round" stroke-linejoin="round"/><ellipse cx="270.6" cy="287.5" rx="4.09" ry="2.93" transform="rotate(33 270.6 287.5)" fill="#3d33d6" fill-opacity="0.85"/><ellipse cx="268.2" cy="284.5" rx="3.21" ry="2.52" transform="rotate(153 268.2 284.5)" fill="#3d33d6" fill-opacity="0.85"/><ellipse cx="275.4" cy="289.2" rx="2.65" ry="1.65" transform="rotate(162 275.4 289.2)" fill="#3d33d6" fill-opacity="0.85"/><path d="M268.0 299.0L270.7 294.4L269.6 290.7M269.6 290.7L272.5 288.6L274.1 283.7M268.0 299.0L264.3 298.2L260.5 299.5M269.6 290.7L264.7 291.3" stroke="#3d33d6" stroke-width="4.15" stroke-opacity="0.50" fill="none" stroke-linecap="round" stroke-linejoin="round"/><ellipse cx="268.0" cy="299.0" rx="5.89" ry="4.17" transform="rotate(133 268.0 299.0)" fill="#3d33d6" fill-opacity="0.85"/><ellipse cx="269.6" cy="290.7" rx="4.16" ry="3.00" transform="rotate(56 269.6 290.7)" fill="#3d33d6" fill-opacity="0.85"/><path d="M170.9 291.7L172.1 293.6L174.9 295.0M170.9 291.7L168.0 291.9L166.5 289.7M170.9 291.7L167.8 290.0L164.5 290.5M170.9 291.7L168.3 293.6M166.5 289.7L163.8 292.6L161.1 293.9" stroke="#3d33d6" stroke-width="3.34" stroke-opacity="0.50" fill="none" stroke-linecap="round" stroke-linejoin="round"/><ellipse cx="170.9" cy="291.7" rx="4.59" ry="2.93" transform="rotate(74 170.9 291.7)" fill="#3d33d6" fill-opacity="0.85"/><ellipse cx="174.9" cy="295.0" rx="3.25" ry="2.19" transform="rotate(161 174.9 295.0)" fill="#3d33d6" fill-opacity="0.85"/><ellipse cx="166.5" cy="289.7" rx="3.62" ry="2.54" transform="rotate(76 166.5 289.7)" fill="#3d33d6" fill-opacity="0.85"/><path d="M327.0 143.5L330.9 143.5L332.1 142.2M327.0 143.5L327.3 143.5L330.2 146.8M327.0 143.5L321.7 143.4L318.8 143.2M327.0 143.5L329.5 146.6M332.1 142.2L329.0 142.0L327.2 137.7L328.6 132.5M332.1 142.2L328.9 142.2" stroke="#3d33d6" stroke-width="3.99" stroke-opacity="0.50" fill="none" stroke-linecap="round" stroke-linejoin="round"/><ellipse cx="327.0" cy="143.5" rx="4.92" ry="2.96" transform="rotate(143 327.0 143.5)" fill="#3d33d6" fill-opacity="0.85"/><ellipse cx="332.1" cy="142.2" rx="4.51" ry="3.65" transform="rotate(173 332.1 142.2)" fill="#3d33d6" fill-opacity="0.85"/><ellipse cx="330.2" cy="146.8" rx="4.07" ry="3.54" transform="rotate(142 330.2 146.8)" fill="#3d33d6" fill-opacity="0.85"/><ellipse cx="318.8" cy="143.2" rx="4.57" ry="4.07" transform="rotate(119 318.8 143.2)" fill="#3d33d6" fill-opacity="0.85"/><path d="M383.0 237.5L381.9 237.3L378.1 239.7M383.0 237.5L382.0 233.7M383.0 237.5L385.7 236.4M378.1 239.7L379.1 243.2" stroke="#3d33d6" stroke-width="3.65" stroke-opacity="0.50" fill="none" stroke-linecap="round" stroke-linejoin="round"/><ellipse cx="383.0" cy="237.5" rx="5.03" ry="3.35" transform="rotate(10 383.0 237.5)" fill="#3d33d6" fill-opacity="0.85"/><ellipse cx="378.1" cy="239.7" rx="4.22" ry="3.24" transform="rotate(81 378.1 239.7)" fill="#3d33d6" fill-opacity="0.85"/><path d="M262.0 274.5L261.6 273.2L260.5 268.7M262.0 274.5L260.1 278.6M262.0 274.5L260.8 271.3L260.4 267.7L259.8 262.9M262.0 274.5L262.2 277.8L266.0 280.8M260.5 268.7L265.0 267.2" stroke="#3d33d6" stroke-width="3.64" stroke-opacity="0.50" fill="none" stroke-linecap="round" stroke-linejoin="round"/><ellipse cx="262.0" cy="274.5" rx="5.61" ry="4.32" transform="rotate(170 262.0 274.5)" fill="#3d33d6" fill-opacity="0.85"/><ellipse cx="260.5" cy="268.7" rx="2.86" ry="2.49" transform="rotate(90 260.5 268.7)" fill="#3d33d6" fill-opacity="0.85"/><path d="M530.0 205.5L529.7 203.0L532.1 201.7M530.0 205.5L532.5 206.4L534.8 209.5M534.8 209.5L531.6 212.3M530.0 205.5L526.2 206.2L521.9 206.7M532.1 201.7L532.5 205.7" stroke="#3d33d6" stroke-width="3.58" stroke-opacity="0.50" fill="none" stroke-linecap="round" stroke-linejoin="round"/><ellipse cx="530.0" cy="205.5" rx="4.67" ry="3.31" transform="rotate(173 530.0 205.5)" fill="#3d33d6" fill-opacity="0.85"/><ellipse cx="532.1" cy="201.7" rx="4.05" ry="2.88" transform="rotate(108 532.1 201.7)" fill="#3d33d6" fill-opacity="0.85"/><ellipse cx="534.8" cy="209.5" rx="3.13" ry="2.45" transform="rotate(54 534.8 209.5)" fill="#3d33d6" fill-opacity="0.85"/></g><g filter="url(#gbl2)"><path d="M235.4 110.0L238.6 113.1L241.4 113.5M235.4 110.0L233.0 110.3L229.7 110.0M235.4 110.0L234.5 107.1L234.3 104.5M241.4 113.5L238.7 114.1L235.4 111.6L234.4 108.3M241.4 113.5L238.9 114.4L237.5 118.4L237.0 122.4M235.4 110.0L236.6 106.3L233.9 103.3M235.4 110.0L232.3 113.8L229.5 114.1" stroke="#8f87ff" stroke-width="1.42" stroke-opacity="0.62" fill="none" stroke-linecap="round" stroke-linejoin="round"/><ellipse cx="235.4" cy="110.0" rx="3.55" ry="3.10" transform="rotate(38 235.4 110.0)" fill="#8f87ff" fill-opacity=".9"/><ellipse cx="241.4" cy="113.5" rx="1.80" ry="1.61" transform="rotate(85 241.4 113.5)" fill="#8f87ff" fill-opacity=".9"/><ellipse cx="229.7" cy="110.0" rx="2.35" ry="1.46" transform="rotate(72 229.7 110.0)" fill="#8f87ff" fill-opacity=".9"/><ellipse cx="234.3" cy="104.5" rx="1.74" ry="1.45" transform="rotate(113 234.3 104.5)" fill="#8f87ff" fill-opacity=".9"/><path d="M253.3 119.5L252.8 121.2L251.0 126.0M251.0 126.0L254.3 127.5L254.6 131.8L255.5 135.1M251.0 126.0L251.1 130.4M251.0 126.0L253.7 123.9" stroke="#8f87ff" stroke-width="1.35" stroke-opacity="0.62" fill="none" stroke-linecap="round" stroke-linejoin="round"/><ellipse cx="253.3" cy="119.5" rx="2.86" ry="2.27" transform="rotate(154 253.3 119.5)" fill="#8f87ff" fill-opacity=".9"/><ellipse cx="251.0" cy="126.0" rx="1.65" ry="1.48" transform="rotate(18 251.0 126.0)" fill="#8f87ff" fill-opacity=".9"/><path d="M302.0 109.0L304.1 109.9L306.9 110.1M302.0 109.0L300.6 112.2L301.7 114.9M302.0 109.0L304.7 107.3M302.0 109.0L304.3 107.3M301.7 114.9L305.0 115.0M306.9 110.1L304.3 111.0L301.4 112.0" stroke="#8f87ff" stroke-width="1.33" stroke-opacity="0.62" fill="none" stroke-linecap="round" stroke-linejoin="round"/><ellipse cx="302.0" cy="109.0" rx="2.54" ry="1.82" transform="rotate(133 302.0 109.0)" fill="#8f87ff" fill-opacity=".9"/><ellipse cx="306.9" cy="110.1" rx="1.55" ry="1.35" transform="rotate(76 306.9 110.1)" fill="#8f87ff" fill-opacity=".9"/><ellipse cx="301.7" cy="114.9" rx="1.48" ry="1.12" transform="rotate(88 301.7 114.9)" fill="#8f87ff" fill-opacity=".9"/><path d="M291.6 130.0L292.5 128.7L295.6 124.3M291.6 130.0L294.7 131.0L298.4 129.4M291.6 130.0L292.3 135.5M291.6 130.0L288.1 128.1M295.6 124.3L298.8 124.2" stroke="#8f87ff" stroke-width="1.60" stroke-opacity="0.62" fill="none" stroke-linecap="round" stroke-linejoin="round"/><ellipse cx="291.6" cy="130.0" rx="3.18" ry="2.20" transform="rotate(12 291.6 130.0)" fill="#8f87ff" fill-opacity=".9"/><ellipse cx="295.6" cy="124.3" rx="1.86" ry="1.16" transform="rotate(25 295.6 124.3)" fill="#8f87ff" fill-opacity=".9"/><path d="M277.4 143.1L277.9 147.5L275.6 149.3M277.4 143.1L277.0 141.4L277.2 137.8M277.2 137.8L281.2 137.1L284.1 137.3L288.7 139.2M275.6 149.3L278.8 146.4L281.3 143.6M277.2 137.8L280.8 135.8L283.6 134.1L287.4 133.7" stroke="#8f87ff" stroke-width="1.42" stroke-opacity="0.62" fill="none" stroke-linecap="round" stroke-linejoin="round"/><ellipse cx="277.4" cy="143.1" rx="3.43" ry="3.01" transform="rotate(111 277.4 143.1)" fill="#8f87ff" fill-opacity=".9"/><ellipse cx="275.6" cy="149.3" rx="2.58" ry="1.55" transform="rotate(46 275.6 149.3)" fill="#8f87ff" fill-opacity=".9"/><ellipse cx="277.2" cy="137.8" rx="2.44" ry="1.96" transform="rotate(54 277.2 137.8)" fill="#8f87ff" fill-opacity=".9"/><path d="M214.4 152.0L214.9 148.6L216.0 146.8M216.0 146.8L219.1 145.5M216.0 146.8L217.1 151.0M214.4 152.0L215.6 149.5L217.4 145.4M216.0 146.8L213.6 149.0L209.0 149.1L206.3 149.4" stroke="#8f87ff" stroke-width="1.33" stroke-opacity="0.62" fill="none" stroke-linecap="round" stroke-linejoin="round"/><ellipse cx="214.4" cy="152.0" rx="3.22" ry="2.77" transform="rotate(6 214.4 152.0)" fill="#8f87ff" fill-opacity=".9"/><ellipse cx="216.0" cy="146.8" rx="1.75" ry="1.42" transform="rotate(7 216.0 146.8)" fill="#8f87ff" fill-opacity=".9"/><path d="M298.4 153.5L302.0 154.0L303.5 151.0M298.4 153.5L295.8 154.4L295.9 158.0M295.9 158.0L297.3 153.8L295.9 150.1M298.4 153.5L298.0 150.6L294.8 147.2M295.9 158.0L294.2 153.1L290.0 150.9L288.0 148.2M303.5 151.0L306.5 148.6L307.6 143.9L304.5 141.2" stroke="#8f87ff" stroke-width="1.46" stroke-opacity="0.62" fill="none" stroke-linecap="round" stroke-linejoin="round"/><ellipse cx="298.4" cy="153.5" rx="3.45" ry="2.59" transform="rotate(117 298.4 153.5)" fill="#8f87ff" fill-opacity=".9"/><ellipse cx="303.5" cy="151.0" rx="1.86" ry="1.31" transform="rotate(148 303.5 151.0)" fill="#8f87ff" fill-opacity=".9"/><ellipse cx="295.9" cy="158.0" rx="2.64" ry="2.36" transform="rotate(59 295.9 158.0)" fill="#8f87ff" fill-opacity=".9"/><path d="M298.4 167.8L297.0 169.7L293.8 172.7M298.4 167.8L299.6 170.7M293.8 172.7L296.3 171.2L299.5 172.1M298.4 167.8L298.7 172.1L299.3 176.6M293.8 172.7L297.6 172.0L300.7 173.3" stroke="#8f87ff" stroke-width="1.29" stroke-opacity="0.62" fill="none" stroke-linecap="round" stroke-linejoin="round"/><ellipse cx="298.4" cy="167.8" rx="2.64" ry="2.24" transform="rotate(101 298.4 167.8)" fill="#8f87ff" fill-opacity=".9"/><ellipse cx="293.8" cy="172.7" rx="2.04" ry="1.32" transform="rotate(101 293.8 172.7)" fill="#8f87ff" fill-opacity=".9"/><path d="M248.6 178.3L249.6 179.3L253.4 183.7M248.6 178.3L246.4 179.9L245.0 181.3M248.6 178.3L245.1 177.5L244.8 173.9M248.6 178.3L245.1 181.8L242.0 185.6L238.4 186.4M253.4 183.7L249.2 186.1M244.8 173.9L241.1 175.9M245.0 181.3L248.1 180.6" stroke="#8f87ff" stroke-width="1.44" stroke-opacity="0.62" fill="none" stroke-linecap="round" stroke-linejoin="round"/><ellipse cx="248.6" cy="178.3" rx="3.00" ry="2.06" transform="rotate(2 248.6 178.3)" fill="#8f87ff" fill-opacity=".9"/><ellipse cx="253.4" cy="183.7" rx="2.38" ry="1.60" transform="rotate(130 253.4 183.7)" fill="#8f87ff" fill-opacity=".9"/><ellipse cx="245.0" cy="181.3" rx="2.29" ry="1.72" transform="rotate(90 245.0 181.3)" fill="#8f87ff" fill-opacity=".9"/><ellipse cx="244.8" cy="173.9" rx="2.12" ry="1.81" transform="rotate(105 244.8 173.9)" fill="#8f87ff" fill-opacity=".9"/><path d="M333.6 153.5L337.1 154.6L339.9 155.3M333.6 153.5L329.2 151.5L324.6 152.2L320.3 149.7M339.9 155.3L334.6 155.2M333.6 153.5L336.7 153.6M339.9 155.3L343.3 158.3L347.6 158.5" stroke="#8f87ff" stroke-width="1.48" stroke-opacity="0.62" fill="none" stroke-linecap="round" stroke-linejoin="round"/><ellipse cx="333.6" cy="153.5" rx="3.55" ry="2.23" transform="rotate(144 333.6 153.5)" fill="#8f87ff" fill-opacity=".9"/><ellipse cx="339.9" cy="155.3" rx="2.73" ry="1.93" transform="rotate(103 339.9 155.3)" fill="#8f87ff" fill-opacity=".9"/><path d="M331.0 164.1L331.9 162.5L336.3 160.6M331.0 164.1L332.7 166.0L334.3 167.5M331.0 164.1L334.1 165.5M336.3 160.6L339.5 159.6" stroke="#8f87ff" stroke-width="1.56" stroke-opacity="0.62" fill="none" stroke-linecap="round" stroke-linejoin="round"/><ellipse cx="331.0" cy="164.1" rx="3.09" ry="1.92" transform="rotate(123 331.0 164.1)" fill="#8f87ff" fill-opacity=".9"/><ellipse cx="336.3" cy="160.6" rx="2.68" ry="1.92" transform="rotate(17 336.3 160.6)" fill="#8f87ff" fill-opacity=".9"/><ellipse cx="334.3" cy="167.5" rx="1.86" ry="1.32" transform="rotate(77 334.3 167.5)" fill="#8f87ff" fill-opacity=".9"/><path d="M359.8 144.7L360.3 146.3L362.8 147.9M359.8 144.7L355.7 145.6L354.7 143.9M354.7 143.9L358.3 143.4L361.0 146.7L365.1 148.3M354.7 143.9L356.8 141.2M362.8 147.9L364.6 144.9L364.1 141.9L360.8 139.2M362.8 147.9L359.2 145.0" stroke="#8f87ff" stroke-width="1.33" stroke-opacity="0.62" fill="none" stroke-linecap="round" stroke-linejoin="round"/><ellipse cx="359.8" cy="144.7" rx="2.54" ry="1.56" transform="rotate(162 359.8 144.7)" fill="#8f87ff" fill-opacity=".9"/><ellipse cx="362.8" cy="147.9" rx="2.00" ry="1.78" transform="rotate(49 362.8 147.9)" fill="#8f87ff" fill-opacity=".9"/><ellipse cx="354.7" cy="143.9" rx="1.70" ry="1.13" transform="rotate(54 354.7 143.9)" fill="#8f87ff" fill-opacity=".9"/><path d="M398.2 143.1L401.2 142.4L402.4 138.5M398.2 143.1L394.6 142.6L390.2 141.9L387.8 140.6M402.4 138.5L401.9 142.3L398.3 144.0" stroke="#8f87ff" stroke-width="1.40" stroke-opacity="0.62" fill="none" stroke-linecap="round" stroke-linejoin="round"/><ellipse cx="398.2" cy="143.1" rx="3.19" ry="2.52" transform="rotate(179 398.2 143.1)" fill="#8f87ff" fill-opacity=".9"/><ellipse cx="402.4" cy="138.5" rx="2.43" ry="1.51" transform="rotate(146 402.4 138.5)" fill="#8f87ff" fill-opacity=".9"/><path d="M436.0 167.8L436.9 171.9L437.4 175.3M437.4 175.3L434.7 177.7L431.6 180.1L429.6 184.7M437.4 175.3L441.5 176.9M437.4 175.3L434.5 173.3L430.6 171.7" stroke="#8f87ff" stroke-width="1.47" stroke-opacity="0.62" fill="none" stroke-linecap="round" stroke-linejoin="round"/><ellipse cx="436.0" cy="167.8" rx="3.20" ry="2.23" transform="rotate(130 436.0 167.8)" fill="#8f87ff" fill-opacity=".9"/><ellipse cx="437.4" cy="175.3" rx="2.76" ry="1.84" transform="rotate(144 437.4 175.3)" fill="#8f87ff" fill-opacity=".9"/><path d="M405.5 176.2L402.3 173.1L398.4 172.9M405.5 176.2L408.8 173.3L411.2 170.7M405.5 176.2L406.1 180.1M411.2 170.7L409.0 174.4L407.4 178.9L405.2 183.8" stroke="#8f87ff" stroke-width="1.52" stroke-opacity="0.62" fill="none" stroke-linecap="round" stroke-linejoin="round"/><ellipse cx="405.5" cy="176.2" rx="3.92" ry="3.22" transform="rotate(171 405.5 176.2)" fill="#8f87ff" fill-opacity=".9"/><ellipse cx="398.4" cy="172.9" rx="2.66" ry="1.69" transform="rotate(43 398.4 172.9)" fill="#8f87ff" fill-opacity=".9"/><ellipse cx="411.2" cy="170.7" rx="2.79" ry="2.33" transform="rotate(161 411.2 170.7)" fill="#8f87ff" fill-opacity=".9"/><path d="M378.2 183.5L381.6 184.0L385.0 183.5M378.2 183.5L377.2 186.7L378.3 188.6M378.2 183.5L382.5 183.0L384.8 179.6M378.2 183.5L376.0 180.9L377.3 177.2L377.5 173.5M385.0 183.5L387.3 180.3M378.3 188.6L380.2 184.4" stroke="#8f87ff" stroke-width="1.48" stroke-opacity="0.62" fill="none" stroke-linecap="round" stroke-linejoin="round"/><ellipse cx="378.2" cy="183.5" rx="3.11" ry="2.00" transform="rotate(70 378.2 183.5)" fill="#8f87ff" fill-opacity=".9"/><ellipse cx="385.0" cy="183.5" rx="1.89" ry="1.61" transform="rotate(28 385.0 183.5)" fill="#8f87ff" fill-opacity=".9"/><ellipse cx="378.3" cy="188.6" rx="2.90" ry="2.00" transform="rotate(107 378.3 188.6)" fill="#8f87ff" fill-opacity=".9"/><path d="M412.3 195.5L407.2 194.3L405.2 192.7M405.2 192.7L407.2 195.5M412.3 195.5L413.0 190.9L411.9 187.8M405.2 192.7L402.7 190.6L400.9 186.7" stroke="#8f87ff" stroke-width="1.53" stroke-opacity="0.62" fill="none" stroke-linecap="round" stroke-linejoin="round"/><ellipse cx="412.3" cy="195.5" rx="3.38" ry="2.98" transform="rotate(165 412.3 195.5)" fill="#8f87ff" fill-opacity=".9"/><ellipse cx="405.2" cy="192.7" rx="1.80" ry="1.31" transform="rotate(164 405.2 192.7)" fill="#8f87ff" fill-opacity=".9"/><path d="M492.6 181.5L491.9 178.5L489.9 174.8M492.6 181.5L496.4 179.7L497.9 176.1M489.9 174.8L486.7 173.5L483.8 169.3L481.1 167.9M497.9 176.1L502.6 178.8M497.9 176.1L496.3 172.1L497.1 169.0" stroke="#8f87ff" stroke-width="1.55" stroke-opacity="0.62" fill="none" stroke-linecap="round" stroke-linejoin="round"/><ellipse cx="492.6" cy="181.5" rx="3.44" ry="2.83" transform="rotate(15 492.6 181.5)" fill="#8f87ff" fill-opacity=".9"/><ellipse cx="489.9" cy="174.8" rx="2.43" ry="1.52" transform="rotate(162 489.9 174.8)" fill="#8f87ff" fill-opacity=".9"/><ellipse cx="497.9" cy="176.1" rx="1.74" ry="1.12" transform="rotate(114 497.9 176.1)" fill="#8f87ff" fill-opacity=".9"/><path d="M535.7 190.3L534.1 188.1L531.2 185.9M535.7 190.3L538.2 189.6L540.4 187.2M540.4 187.2L545.8 187.4L548.6 186.5M531.2 185.9L535.7 185.7L540.4 185.8M535.7 190.3L532.5 188.9L528.2 190.3M540.4 187.2L543.3 190.3" stroke="#8f87ff" stroke-width="1.53" stroke-opacity="0.62" fill="none" stroke-linecap="round" stroke-linejoin="round"/><ellipse cx="535.7" cy="190.3" rx="3.17" ry="2.74" transform="rotate(49 535.7 190.3)" fill="#8f87ff" fill-opacity=".9"/><ellipse cx="531.2" cy="185.9" rx="2.74" ry="2.24" transform="rotate(85 531.2 185.9)" fill="#8f87ff" fill-opacity=".9"/><ellipse cx="540.4" cy="187.2" rx="3.02" ry="1.95" transform="rotate(55 540.4 187.2)" fill="#8f87ff" fill-opacity=".9"/><path d="M522.6 206.1L519.6 208.9L518.9 212.8M522.6 206.1L520.2 203.4L516.4 202.9M522.6 206.1L527.8 204.6L533.0 203.7M518.9 212.8L523.7 211.1L525.3 206.1M518.9 212.8L521.2 216.2" stroke="#8f87ff" stroke-width="1.59" stroke-opacity="0.62" fill="none" stroke-linecap="round" stroke-linejoin="round"/><ellipse cx="522.6" cy="206.1" rx="3.87" ry="2.92" transform="rotate(95 522.6 206.1)" fill="#8f87ff" fill-opacity=".9"/><ellipse cx="518.9" cy="212.8" rx="2.20" ry="1.98" transform="rotate(49 518.9 212.8)" fill="#8f87ff" fill-opacity=".9"/><path d="M546.2 218.2L544.6 222.2L543.6 223.5M546.2 218.2L544.3 213.6M546.2 218.2L542.3 216.8L538.0 218.7L537.7 223.6M546.2 218.2L546.7 213.9" stroke="#8f87ff" stroke-width="1.50" stroke-opacity="0.62" fill="none" stroke-linecap="round" stroke-linejoin="round"/><ellipse cx="546.2" cy="218.2" rx="3.78" ry="3.28" transform="rotate(95 546.2 218.2)" fill="#8f87ff" fill-opacity=".9"/><ellipse cx="543.6" cy="223.5" rx="1.98" ry="1.24" transform="rotate(125 543.6 223.5)" fill="#8f87ff" fill-opacity=".9"/><path d="M580.3 197.2L580.9 193.6L579.0 191.4M580.3 197.2L582.6 193.5L586.4 192.9M580.3 197.2L579.9 200.2L580.9 203.5M580.3 197.2L580.8 201.8L579.4 206.3L576.9 208.3M580.9 203.5L584.4 205.6L587.6 205.9M580.3 197.2L580.4 192.8L578.8 189.3L577.5 185.8M586.4 192.9L587.8 189.6L586.5 185.0L583.4 180.8" stroke="#8f87ff" stroke-width="1.53" stroke-opacity="0.62" fill="none" stroke-linecap="round" stroke-linejoin="round"/><ellipse cx="580.3" cy="197.2" rx="3.83" ry="3.13" transform="rotate(101 580.3 197.2)" fill="#8f87ff" fill-opacity=".9"/><ellipse cx="579.0" cy="191.4" rx="2.95" ry="2.50" transform="rotate(60 579.0 191.4)" fill="#8f87ff" fill-opacity=".9"/><ellipse cx="586.4" cy="192.9" rx="1.97" ry="1.27" transform="rotate(17 586.4 192.9)" fill="#8f87ff" fill-opacity=".9"/><ellipse cx="580.9" cy="203.5" rx="1.90" ry="1.53" transform="rotate(17 580.9 203.5)" fill="#8f87ff" fill-opacity=".9"/><path d="M184.0 203.5L180.4 208.2L180.2 209.3M180.2 209.3L183.6 207.3L187.6 205.2M184.0 203.5L186.0 198.8L189.0 195.1M180.2 209.3L184.4 210.3" stroke="#8f87ff" stroke-width="1.52" stroke-opacity="0.62" fill="none" stroke-linecap="round" stroke-linejoin="round"/><ellipse cx="184.0" cy="203.5" rx="3.08" ry="2.16" transform="rotate(3 184.0 203.5)" fill="#8f87ff" fill-opacity=".9"/><ellipse cx="180.2" cy="209.3" rx="1.80" ry="1.43" transform="rotate(62 180.2 209.3)" fill="#8f87ff" fill-opacity=".9"/><path d="M269.0 197.2L266.4 196.5L265.5 195.1M269.0 197.2L270.3 195.0L271.5 192.4M271.5 192.4L273.6 194.3L273.1 198.1L274.4 200.3M269.0 197.2L266.0 196.3L264.9 193.2" stroke="#8f87ff" stroke-width="1.29" stroke-opacity="0.62" fill="none" stroke-linecap="round" stroke-linejoin="round"/><ellipse cx="269.0" cy="197.2" rx="2.64" ry="1.68" transform="rotate(83 269.0 197.2)" fill="#8f87ff" fill-opacity=".9"/><ellipse cx="265.5" cy="195.1" rx="2.25" ry="1.44" transform="rotate(175 265.5 195.1)" fill="#8f87ff" fill-opacity=".9"/><ellipse cx="271.5" cy="192.4" rx="1.77" ry="1.35" transform="rotate(163 271.5 192.4)" fill="#8f87ff" fill-opacity=".9"/><path d="M316.3 199.3L312.4 196.7L309.6 196.4M316.3 199.3L317.1 196.7L317.3 191.9M316.3 199.3L317.8 201.2L319.6 203.7M309.6 196.4L305.1 198.5L300.9 199.3L298.0 198.1M319.6 203.7L316.5 204.1M319.6 203.7L322.8 204.6L323.8 207.4L322.5 211.7M309.6 196.4L305.9 197.9L302.4 200.2" stroke="#8f87ff" stroke-width="1.46" stroke-opacity="0.62" fill="none" stroke-linecap="round" stroke-linejoin="round"/><ellipse cx="316.3" cy="199.3" rx="3.71" ry="3.07" transform="rotate(124 316.3 199.3)" fill="#8f87ff" fill-opacity=".9"/><ellipse cx="309.6" cy="196.4" rx="2.05" ry="1.53" transform="rotate(135 309.6 196.4)" fill="#8f87ff" fill-opacity=".9"/><ellipse cx="317.3" cy="191.9" rx="1.61" ry="1.37" transform="rotate(179 317.3 191.9)" fill="#8f87ff" fill-opacity=".9"/><ellipse cx="319.6" cy="203.7" rx="2.60" ry="1.88" transform="rotate(154 319.6 203.7)" fill="#8f87ff" fill-opacity=".9"/><path d="M344.0 200.8L344.2 204.6L345.7 206.4M344.0 200.8L342.8 204.7L339.1 206.0M344.0 200.8L342.7 199.2L343.1 195.3M343.1 195.3L346.9 196.3L350.2 195.3M343.1 195.3L346.4 198.2" stroke="#8f87ff" stroke-width="1.41" stroke-opacity="0.62" fill="none" stroke-linecap="round" stroke-linejoin="round"/><ellipse cx="344.0" cy="200.8" rx="2.80" ry="1.99" transform="rotate(157 344.0 200.8)" fill="#8f87ff" fill-opacity=".9"/><ellipse cx="345.7" cy="206.4" rx="2.09" ry="1.61" transform="rotate(98 345.7 206.4)" fill="#8f87ff" fill-opacity=".9"/><ellipse cx="339.1" cy="206.0" rx="1.93" ry="1.53" transform="rotate(30 339.1 206.0)" fill="#8f87ff" fill-opacity=".9"/><ellipse cx="343.1" cy="195.3" rx="2.03" ry="1.29" transform="rotate(76 343.1 195.3)" fill="#8f87ff" fill-opacity=".9"/><path d="M449.0 214.0L445.5 214.5L442.7 215.9M449.0 214.0L448.4 210.5L447.3 209.7M449.0 214.0L449.8 212.9L453.4 209.3M447.3 209.7L445.4 207.6L445.5 203.8M449.0 214.0L447.7 216.1L444.9 218.7M442.7 215.9L438.9 217.8" stroke="#8f87ff" stroke-width="1.28" stroke-opacity="0.62" fill="none" stroke-linecap="round" stroke-linejoin="round"/><ellipse cx="449.0" cy="214.0" rx="3.13" ry="1.98" transform="rotate(9 449.0 214.0)" fill="#8f87ff" fill-opacity=".9"/><ellipse cx="442.7" cy="215.9" rx="1.41" ry="0.98" transform="rotate(131 442.7 215.9)" fill="#8f87ff" fill-opacity=".9"/><ellipse cx="447.3" cy="209.7" rx="1.78" ry="1.53" transform="rotate(162 447.3 209.7)" fill="#8f87ff" fill-opacity=".9"/><ellipse cx="453.4" cy="209.3" rx="2.34" ry="1.50" transform="rotate(128 453.4 209.3)" fill="#8f87ff" fill-opacity=".9"/><path d="M471.7 215.0L469.0 212.7L467.9 212.1M471.7 215.0L474.8 212.2L475.7 209.3M475.7 209.3L473.8 206.6L470.8 205.4M475.7 209.3L479.5 211.1" stroke="#8f87ff" stroke-width="1.51" stroke-opacity="0.62" fill="none" stroke-linecap="round" stroke-linejoin="round"/><ellipse cx="471.7" cy="215.0" rx="3.31" ry="2.03" transform="rotate(96 471.7 215.0)" fill="#8f87ff" fill-opacity=".9"/><ellipse cx="467.9" cy="212.1" rx="2.60" ry="1.78" transform="rotate(108 467.9 212.1)" fill="#8f87ff" fill-opacity=".9"/><ellipse cx="475.7" cy="209.3" rx="2.34" ry="1.97" transform="rotate(45 475.7 209.3)" fill="#8f87ff" fill-opacity=".9"/><path d="M496.3 224.5L494.2 227.4L491.4 227.8M496.3 224.5L497.4 221.1L498.0 220.7M496.3 224.5L495.6 228.8L496.3 232.1L499.3 233.1M498.0 220.7L498.4 217.2L499.7 213.3L498.1 210.4M498.0 220.7L494.0 219.7L490.7 220.8" stroke="#8f87ff" stroke-width="1.28" stroke-opacity="0.62" fill="none" stroke-linecap="round" stroke-linejoin="round"/><ellipse cx="496.3" cy="224.5" rx="3.32" ry="2.57" transform="rotate(40 496.3 224.5)" fill="#8f87ff" fill-opacity=".9"/><ellipse cx="491.4" cy="227.8" rx="1.44" ry="0.88" transform="rotate(90 491.4 227.8)" fill="#8f87ff" fill-opacity=".9"/><ellipse cx="498.0" cy="220.7" rx="2.45" ry="1.99" transform="rotate(107 498.0 220.7)" fill="#8f87ff" fill-opacity=".9"/><path d="M346.7 232.3L350.9 232.7L353.5 230.6M346.7 232.3L349.3 235.4M346.7 232.3L344.0 231.3" stroke="#8f87ff" stroke-width="1.46" stroke-opacity="0.62" fill="none" stroke-linecap="round" stroke-linejoin="round"/><ellipse cx="346.7" cy="232.3" rx="3.12" ry="2.45" transform="rotate(57 346.7 232.3)" fill="#8f87ff" fill-opacity=".9"/><ellipse cx="353.5" cy="230.6" rx="2.28" ry="1.55" transform="rotate(95 353.5 230.6)" fill="#8f87ff" fill-opacity=".9"/><path d="M380.8 235.0L382.0 232.9L382.1 230.1M380.8 235.0L380.4 238.3L377.7 239.5M382.1 230.1L384.9 228.6L388.8 226.2L388.7 222.8M380.8 235.0L384.6 235.5L386.6 233.4L391.0 234.7" stroke="#8f87ff" stroke-width="1.47" stroke-opacity="0.62" fill="none" stroke-linecap="round" stroke-linejoin="round"/><ellipse cx="380.8" cy="235.0" rx="3.46" ry="2.32" transform="rotate(132 380.8 235.0)" fill="#8f87ff" fill-opacity=".9"/><ellipse cx="382.1" cy="230.1" rx="2.28" ry="1.74" transform="rotate(46 382.1 230.1)" fill="#8f87ff" fill-opacity=".9"/><path d="M417.6 232.3L415.8 233.4L410.7 233.0M417.6 232.3L417.3 231.5L416.6 228.0M417.6 232.3L415.3 230.3L412.9 229.1M410.7 233.0L406.6 234.3M410.7 233.0L411.1 237.2M410.7 233.0L406.3 232.7L403.5 234.6L403.3 238.6" stroke="#8f87ff" stroke-width="1.34" stroke-opacity="0.62" fill="none" stroke-linecap="round" stroke-linejoin="round"/><ellipse cx="417.6" cy="232.3" rx="2.63" ry="1.79" transform="rotate(65 417.6 232.3)" fill="#8f87ff" fill-opacity=".9"/><ellipse cx="410.7" cy="233.0" rx="2.59" ry="1.69" transform="rotate(3 410.7 233.0)" fill="#8f87ff" fill-opacity=".9"/><ellipse cx="416.6" cy="228.0" rx="2.18" ry="1.57" transform="rotate(47 416.6 228.0)" fill="#8f87ff" fill-opacity=".9"/><path d="M438.6 242.8L435.9 241.9L431.2 239.4M438.6 242.8L443.8 242.2L447.3 240.8M438.6 242.8L439.4 245.9L443.3 248.3L446.7 246.5" stroke="#8f87ff" stroke-width="1.60" stroke-opacity="0.62" fill="none" stroke-linecap="round" stroke-linejoin="round"/><ellipse cx="438.6" cy="242.8" rx="3.33" ry="2.54" transform="rotate(76 438.6 242.8)" fill="#8f87ff" fill-opacity=".9"/><ellipse cx="431.2" cy="239.4" rx="2.27" ry="1.85" transform="rotate(24 431.2 239.4)" fill="#8f87ff" fill-opacity=".9"/><path d="M467.5 249.1L465.0 250.2L464.2 252.6M467.5 249.1L465.6 246.0L464.7 244.8M467.5 249.1L468.0 244.8L471.0 243.6M464.7 244.8L467.6 246.5" stroke="#8f87ff" stroke-width="1.35" stroke-opacity="0.62" fill="none" stroke-linecap="round" stroke-linejoin="round"/><ellipse cx="467.5" cy="249.1" rx="3.19" ry="2.65" transform="rotate(22 467.5 249.1)" fill="#8f87ff" fill-opacity=".9"/><ellipse cx="464.2" cy="252.6" rx="2.35" ry="1.96" transform="rotate(67 464.2 252.6)" fill="#8f87ff" fill-opacity=".9"/><ellipse cx="464.7" cy="244.8" rx="2.53" ry="2.13" transform="rotate(47 464.7 244.8)" fill="#8f87ff" fill-opacity=".9"/><path d="M211.3 244.5L208.7 242.9L208.1 240.3M211.3 244.5L212.0 241.3L214.4 240.6M208.1 240.3L210.1 236.9L212.4 233.7M211.3 244.5L212.9 242.4M208.1 240.3L207.6 244.0L207.5 247.1" stroke="#8f87ff" stroke-width="1.29" stroke-opacity="0.62" fill="none" stroke-linecap="round" stroke-linejoin="round"/><ellipse cx="211.3" cy="244.5" rx="2.51" ry="1.53" transform="rotate(46 211.3 244.5)" fill="#8f87ff" fill-opacity=".9"/><ellipse cx="208.1" cy="240.3" rx="1.75" ry="1.52" transform="rotate(62 208.1 240.3)" fill="#8f87ff" fill-opacity=".9"/><ellipse cx="214.4" cy="240.6" rx="1.98" ry="1.34" transform="rotate(102 214.4 240.6)" fill="#8f87ff" fill-opacity=".9"/><path d="M275.8 237.5L274.4 233.4L271.4 231.3M275.8 237.5L274.2 234.9L270.2 234.7M271.4 231.3L272.0 234.5L272.7 238.0" stroke="#8f87ff" stroke-width="1.50" stroke-opacity="0.62" fill="none" stroke-linecap="round" stroke-linejoin="round"/><ellipse cx="275.8" cy="237.5" rx="3.53" ry="3.15" transform="rotate(65 275.8 237.5)" fill="#8f87ff" fill-opacity=".9"/><ellipse cx="271.4" cy="231.3" rx="1.69" ry="1.11" transform="rotate(27 271.4 231.3)" fill="#8f87ff" fill-opacity=".9"/><path d="M290.0 250.5L288.7 253.2L287.4 254.9M290.0 250.5L290.2 246.5L292.3 244.1L291.8 241.5M290.0 250.5L287.3 249.1L284.2 250.0L280.0 249.4M287.4 254.9L285.7 258.5L284.0 262.1M287.4 254.9L283.4 255.7" stroke="#8f87ff" stroke-width="1.34" stroke-opacity="0.62" fill="none" stroke-linecap="round" stroke-linejoin="round"/><ellipse cx="290.0" cy="250.5" rx="2.76" ry="2.47" transform="rotate(158 290.0 250.5)" fill="#8f87ff" fill-opacity=".9"/><ellipse cx="287.4" cy="254.9" rx="1.76" ry="1.52" transform="rotate(147 287.4 254.9)" fill="#8f87ff" fill-opacity=".9"/><path d="M375.6 253.3L378.2 251.5L379.1 248.5M375.6 253.3L376.1 255.9L378.2 257.6M378.2 257.6L375.2 254.6M378.2 257.6L382.2 257.6L385.1 254.4L385.7 251.5M375.6 253.3L374.2 257.1L370.7 257.8L366.4 256.8" stroke="#8f87ff" stroke-width="1.37" stroke-opacity="0.62" fill="none" stroke-linecap="round" stroke-linejoin="round"/><ellipse cx="375.6" cy="253.3" rx="3.09" ry="2.10" transform="rotate(167 375.6 253.3)" fill="#8f87ff" fill-opacity=".9"/><ellipse cx="379.1" cy="248.5" rx="2.01" ry="1.36" transform="rotate(49 379.1 248.5)" fill="#8f87ff" fill-opacity=".9"/><ellipse cx="378.2" cy="257.6" rx="1.99" ry="1.43" transform="rotate(120 378.2 257.6)" fill="#8f87ff" fill-opacity=".9"/><path d="M375.6 269.1L378.3 269.7L379.4 266.7M379.4 266.7L374.7 268.3M375.6 269.1L372.6 273.1L369.8 275.0" stroke="#8f87ff" stroke-width="1.50" stroke-opacity="0.62" fill="none" stroke-linecap="round" stroke-linejoin="round"/><ellipse cx="375.6" cy="269.1" rx="2.91" ry="2.10" transform="rotate(130 375.6 269.1)" fill="#8f87ff" fill-opacity=".9"/><ellipse cx="379.4" cy="266.7" rx="2.04" ry="1.58" transform="rotate(26 379.4 266.7)" fill="#8f87ff" fill-opacity=".9"/><path d="M257.5 269.1L261.5 268.3L262.5 269.3M262.5 269.3L262.3 272.8L261.7 276.3M262.5 269.3L264.8 271.7M262.5 269.3L258.3 272.1" stroke="#8f87ff" stroke-width="1.50" stroke-opacity="0.62" fill="none" stroke-linecap="round" stroke-linejoin="round"/><ellipse cx="257.5" cy="269.1" rx="3.43" ry="2.14" transform="rotate(56 257.5 269.1)" fill="#8f87ff" fill-opacity=".9"/><ellipse cx="262.5" cy="269.3" rx="1.80" ry="1.34" transform="rotate(33 262.5 269.3)" fill="#8f87ff" fill-opacity=".9"/><path d="M273.2 271.7L270.8 269.2L267.9 268.9M267.9 268.9L263.2 272.1L259.2 275.6M273.2 271.7L271.0 275.6M273.2 271.7L270.7 274.7M267.9 268.9L270.4 265.7" stroke="#8f87ff" stroke-width="1.62" stroke-opacity="0.62" fill="none" stroke-linecap="round" stroke-linejoin="round"/><ellipse cx="273.2" cy="271.7" rx="4.21" ry="2.86" transform="rotate(138 273.2 271.7)" fill="#8f87ff" fill-opacity=".9"/><ellipse cx="267.9" cy="268.9" rx="2.60" ry="2.29" transform="rotate(44 267.9 268.9)" fill="#8f87ff" fill-opacity=".9"/><path d="M302.0 272.8L301.6 278.0L302.9 280.3M302.0 272.8L299.4 270.5L300.1 267.6M302.9 280.3L300.3 282.4L296.4 280.8M302.9 280.3L304.1 284.3L304.5 287.7" stroke="#8f87ff" stroke-width="1.44" stroke-opacity="0.62" fill="none" stroke-linecap="round" stroke-linejoin="round"/><ellipse cx="302.0" cy="272.8" rx="3.53" ry="2.31" transform="rotate(38 302.0 272.8)" fill="#8f87ff" fill-opacity=".9"/><ellipse cx="302.9" cy="280.3" rx="1.71" ry="1.09" transform="rotate(8 302.9 280.3)" fill="#8f87ff" fill-opacity=".9"/><ellipse cx="300.1" cy="267.6" rx="2.49" ry="1.65" transform="rotate(55 300.1 267.6)" fill="#8f87ff" fill-opacity=".9"/><path d="M324.7 271.7L323.2 269.5L322.3 268.5M324.7 271.7L328.9 270.6M324.7 271.7L320.2 270.1L316.8 271.1M324.7 271.7L328.0 268.3M322.3 268.5L324.3 266.8L328.4 266.1" stroke="#8f87ff" stroke-width="1.38" stroke-opacity="0.62" fill="none" stroke-linecap="round" stroke-linejoin="round"/><ellipse cx="324.7" cy="271.7" rx="2.76" ry="1.70" transform="rotate(164 324.7 271.7)" fill="#8f87ff" fill-opacity=".9"/><ellipse cx="322.3" cy="268.5" rx="2.14" ry="1.51" transform="rotate(111 322.3 268.5)" fill="#8f87ff" fill-opacity=".9"/><path d="M330.0 284.8L329.9 280.4L330.6 277.9M330.0 284.8L333.2 286.3L335.8 287.4M330.0 284.8L325.9 284.6L321.3 283.3M330.0 284.8L328.9 280.6L326.2 277.1M335.8 287.4L331.0 287.7M330.0 284.8L328.4 287.4L329.3 290.2L331.8 292.4" stroke="#8f87ff" stroke-width="1.41" stroke-opacity="0.62" fill="none" stroke-linecap="round" stroke-linejoin="round"/><ellipse cx="330.0" cy="284.8" rx="3.19" ry="1.95" transform="rotate(33 330.0 284.8)" fill="#8f87ff" fill-opacity=".9"/><ellipse cx="330.6" cy="277.9" rx="2.43" ry="1.84" transform="rotate(62 330.6 277.9)" fill="#8f87ff" fill-opacity=".9"/><ellipse cx="335.8" cy="287.4" rx="2.09" ry="1.38" transform="rotate(63 335.8 287.4)" fill="#8f87ff" fill-opacity=".9"/><path d="M270.6 287.5L270.3 287.1L268.2 284.5M270.6 287.5L273.8 288.5L275.4 289.2M270.6 287.5L269.4 285.3M268.2 284.5L270.6 285.6" stroke="#8f87ff" stroke-width="1.26" stroke-opacity="0.62" fill="none" stroke-linecap="round" stroke-linejoin="round"/><ellipse cx="270.6" cy="287.5" rx="2.56" ry="1.83" transform="rotate(33 270.6 287.5)" fill="#8f87ff" fill-opacity=".9"/><ellipse cx="268.2" cy="284.5" rx="2.01" ry="1.58" transform="rotate(153 268.2 284.5)" fill="#8f87ff" fill-opacity=".9"/><ellipse cx="275.4" cy="289.2" rx="1.65" ry="1.03" transform="rotate(162 275.4 289.2)" fill="#8f87ff" fill-opacity=".9"/><path d="M268.0 299.0L270.7 294.4L269.6 290.7M269.6 290.7L272.5 288.6L274.1 283.7M268.0 299.0L264.3 298.2L260.5 299.5M269.6 290.7L264.7 291.3" stroke="#8f87ff" stroke-width="1.62" stroke-opacity="0.62" fill="none" stroke-linecap="round" stroke-linejoin="round"/><ellipse cx="268.0" cy="299.0" rx="3.68" ry="2.61" transform="rotate(133 268.0 299.0)" fill="#8f87ff" fill-opacity=".9"/><ellipse cx="269.6" cy="290.7" rx="2.60" ry="1.88" transform="rotate(56 269.6 290.7)" fill="#8f87ff" fill-opacity=".9"/><path d="M170.9 291.7L172.1 293.6L174.9 295.0M170.9 291.7L168.0 291.9L166.5 289.7M170.9 291.7L167.8 290.0L164.5 290.5M170.9 291.7L168.3 293.6M166.5 289.7L163.8 292.6L161.1 293.9" stroke="#8f87ff" stroke-width="1.30" stroke-opacity="0.62" fill="none" stroke-linecap="round" stroke-linejoin="round"/><ellipse cx="170.9" cy="291.7" rx="2.87" ry="1.83" transform="rotate(74 170.9 291.7)" fill="#8f87ff" fill-opacity=".9"/><ellipse cx="174.9" cy="295.0" rx="2.03" ry="1.37" transform="rotate(161 174.9 295.0)" fill="#8f87ff" fill-opacity=".9"/><ellipse cx="166.5" cy="289.7" rx="2.26" ry="1.59" transform="rotate(76 166.5 289.7)" fill="#8f87ff" fill-opacity=".9"/><path d="M327.0 143.5L330.9 143.5L332.1 142.2M327.0 143.5L327.3 143.5L330.2 146.8M327.0 143.5L321.7 143.4L318.8 143.2M327.0 143.5L329.5 146.6M332.1 142.2L329.0 142.0L327.2 137.7L328.6 132.5M332.1 142.2L328.9 142.2" stroke="#8f87ff" stroke-width="1.56" stroke-opacity="0.62" fill="none" stroke-linecap="round" stroke-linejoin="round"/><ellipse cx="327.0" cy="143.5" rx="3.07" ry="1.85" transform="rotate(143 327.0 143.5)" fill="#8f87ff" fill-opacity=".9"/><ellipse cx="332.1" cy="142.2" rx="2.82" ry="2.28" transform="rotate(173 332.1 142.2)" fill="#8f87ff" fill-opacity=".9"/><ellipse cx="330.2" cy="146.8" rx="2.54" ry="2.22" transform="rotate(142 330.2 146.8)" fill="#8f87ff" fill-opacity=".9"/><ellipse cx="318.8" cy="143.2" rx="2.86" ry="2.55" transform="rotate(119 318.8 143.2)" fill="#8f87ff" fill-opacity=".9"/><path d="M383.0 237.5L381.9 237.3L378.1 239.7M383.0 237.5L382.0 233.7M383.0 237.5L385.7 236.4M378.1 239.7L379.1 243.2" stroke="#8f87ff" stroke-width="1.43" stroke-opacity="0.62" fill="none" stroke-linecap="round" stroke-linejoin="round"/><ellipse cx="383.0" cy="237.5" rx="3.15" ry="2.09" transform="rotate(10 383.0 237.5)" fill="#8f87ff" fill-opacity=".9"/><ellipse cx="378.1" cy="239.7" rx="2.64" ry="2.03" transform="rotate(81 378.1 239.7)" fill="#8f87ff" fill-opacity=".9"/><path d="M262.0 274.5L261.6 273.2L260.5 268.7M262.0 274.5L260.1 278.6M262.0 274.5L260.8 271.3L260.4 267.7L259.8 262.9M262.0 274.5L262.2 277.8L266.0 280.8M260.5 268.7L265.0 267.2" stroke="#8f87ff" stroke-width="1.42" stroke-opacity="0.62" fill="none" stroke-linecap="round" stroke-linejoin="round"/><ellipse cx="262.0" cy="274.5" rx="3.51" ry="2.70" transform="rotate(170 262.0 274.5)" fill="#8f87ff" fill-opacity=".9"/><ellipse cx="260.5" cy="268.7" rx="1.79" ry="1.56" transform="rotate(90 260.5 268.7)" fill="#8f87ff" fill-opacity=".9"/><path d="M530.0 205.5L529.7 203.0L532.1 201.7M530.0 205.5L532.5 206.4L534.8 209.5M534.8 209.5L531.6 212.3M530.0 205.5L526.2 206.2L521.9 206.7M532.1 201.7L532.5 205.7" stroke="#8f87ff" stroke-width="1.40" stroke-opacity="0.62" fill="none" stroke-linecap="round" stroke-linejoin="round"/><ellipse cx="530.0" cy="205.5" rx="2.92" ry="2.07" transform="rotate(173 530.0 205.5)" fill="#8f87ff" fill-opacity=".9"/><ellipse cx="532.1" cy="201.7" rx="2.53" ry="1.80" transform="rotate(108 532.1 201.7)" fill="#8f87ff" fill-opacity=".9"/><ellipse cx="534.8" cy="209.5" rx="1.96" ry="1.53" transform="rotate(54 534.8 209.5)" fill="#8f87ff" fill-opacity=".9"/></g><g filter="url(#gbl3)"><ellipse cx="235.4" cy="110.0" rx="2.06" ry="1.80" transform="rotate(38 235.4 110.0)" fill="#f3f1ff"/><ellipse cx="241.4" cy="113.5" rx="1.05" ry="0.94" transform="rotate(85 241.4 113.5)" fill="#f3f1ff"/><ellipse cx="229.7" cy="110.0" rx="1.36" ry="0.85" transform="rotate(72 229.7 110.0)" fill="#f3f1ff"/><ellipse cx="234.3" cy="104.5" rx="1.01" ry="0.84" transform="rotate(113 234.3 104.5)" fill="#f3f1ff"/><ellipse cx="253.3" cy="119.5" rx="1.66" ry="1.32" transform="rotate(154 253.3 119.5)" fill="#f3f1ff"/><ellipse cx="251.0" cy="126.0" rx="0.96" ry="0.86" transform="rotate(18 251.0 126.0)" fill="#f3f1ff"/><ellipse cx="302.0" cy="109.0" rx="1.47" ry="1.06" transform="rotate(133 302.0 109.0)" fill="#f3f1ff"/><ellipse cx="306.9" cy="110.1" rx="0.90" ry="0.78" transform="rotate(76 306.9 110.1)" fill="#f3f1ff"/><ellipse cx="301.7" cy="114.9" rx="0.86" ry="0.65" transform="rotate(88 301.7 114.9)" fill="#f3f1ff"/><ellipse cx="291.6" cy="130.0" rx="1.84" ry="1.28" transform="rotate(12 291.6 130.0)" fill="#f3f1ff"/><ellipse cx="295.6" cy="124.3" rx="1.08" ry="0.67" transform="rotate(25 295.6 124.3)" fill="#f3f1ff"/><ellipse cx="277.4" cy="143.1" rx="1.99" ry="1.74" transform="rotate(111 277.4 143.1)" fill="#f3f1ff"/><ellipse cx="275.6" cy="149.3" rx="1.49" ry="0.90" transform="rotate(46 275.6 149.3)" fill="#f3f1ff"/><ellipse cx="277.2" cy="137.8" rx="1.41" ry="1.14" transform="rotate(54 277.2 137.8)" fill="#f3f1ff"/><ellipse cx="214.4" cy="152.0" rx="1.87" ry="1.61" transform="rotate(6 214.4 152.0)" fill="#f3f1ff"/><ellipse cx="216.0" cy="146.8" rx="1.01" ry="0.82" transform="rotate(7 216.0 146.8)" fill="#f3f1ff"/><ellipse cx="298.4" cy="153.5" rx="2.00" ry="1.50" transform="rotate(117 298.4 153.5)" fill="#f3f1ff"/><ellipse cx="303.5" cy="151.0" rx="1.08" ry="0.76" transform="rotate(148 303.5 151.0)" fill="#f3f1ff"/><ellipse cx="295.9" cy="158.0" rx="1.53" ry="1.37" transform="rotate(59 295.9 158.0)" fill="#f3f1ff"/><ellipse cx="298.4" cy="167.8" rx="1.53" ry="1.30" transform="rotate(101 298.4 167.8)" fill="#f3f1ff"/><ellipse cx="293.8" cy="172.7" rx="1.18" ry="0.77" transform="rotate(101 293.8 172.7)" fill="#f3f1ff"/><ellipse cx="248.6" cy="178.3" rx="1.74" ry="1.19" transform="rotate(2 248.6 178.3)" fill="#f3f1ff"/><ellipse cx="253.4" cy="183.7" rx="1.38" ry="0.93" transform="rotate(130 253.4 183.7)" fill="#f3f1ff"/><ellipse cx="245.0" cy="181.3" rx="1.33" ry="1.00" transform="rotate(90 245.0 181.3)" fill="#f3f1ff"/><ellipse cx="244.8" cy="173.9" rx="1.23" ry="1.05" transform="rotate(105 244.8 173.9)" fill="#f3f1ff"/><ellipse cx="333.6" cy="153.5" rx="2.06" ry="1.29" transform="rotate(144 333.6 153.5)" fill="#f3f1ff"/><ellipse cx="339.9" cy="155.3" rx="1.59" ry="1.12" transform="rotate(103 339.9 155.3)" fill="#f3f1ff"/><ellipse cx="331.0" cy="164.1" rx="1.79" ry="1.12" transform="rotate(123 331.0 164.1)" fill="#f3f1ff"/><ellipse cx="336.3" cy="160.6" rx="1.55" ry="1.11" transform="rotate(17 336.3 160.6)" fill="#f3f1ff"/><ellipse cx="334.3" cy="167.5" rx="1.08" ry="0.76" transform="rotate(77 334.3 167.5)" fill="#f3f1ff"/><ellipse cx="359.8" cy="144.7" rx="1.47" ry="0.90" transform="rotate(162 359.8 144.7)" fill="#f3f1ff"/><ellipse cx="362.8" cy="147.9" rx="1.16" ry="1.03" transform="rotate(49 362.8 147.9)" fill="#f3f1ff"/><ellipse cx="354.7" cy="143.9" rx="0.98" ry="0.65" transform="rotate(54 354.7 143.9)" fill="#f3f1ff"/><ellipse cx="398.2" cy="143.1" rx="1.85" ry="1.46" transform="rotate(179 398.2 143.1)" fill="#f3f1ff"/><ellipse cx="402.4" cy="138.5" rx="1.41" ry="0.88" transform="rotate(146 402.4 138.5)" fill="#f3f1ff"/><ellipse cx="436.0" cy="167.8" rx="1.86" ry="1.29" transform="rotate(130 436.0 167.8)" fill="#f3f1ff"/><ellipse cx="437.4" cy="175.3" rx="1.60" ry="1.07" transform="rotate(144 437.4 175.3)" fill="#f3f1ff"/><ellipse cx="405.5" cy="176.2" rx="2.28" ry="1.87" transform="rotate(171 405.5 176.2)" fill="#f3f1ff"/><ellipse cx="398.4" cy="172.9" rx="1.54" ry="0.98" transform="rotate(43 398.4 172.9)" fill="#f3f1ff"/><ellipse cx="411.2" cy="170.7" rx="1.62" ry="1.35" transform="rotate(161 411.2 170.7)" fill="#f3f1ff"/><ellipse cx="378.2" cy="183.5" rx="1.80" ry="1.16" transform="rotate(70 378.2 183.5)" fill="#f3f1ff"/><ellipse cx="385.0" cy="183.5" rx="1.09" ry="0.93" transform="rotate(28 385.0 183.5)" fill="#f3f1ff"/><ellipse cx="378.3" cy="188.6" rx="1.68" ry="1.16" transform="rotate(107 378.3 188.6)" fill="#f3f1ff"/><ellipse cx="412.3" cy="195.5" rx="1.96" ry="1.73" transform="rotate(165 412.3 195.5)" fill="#f3f1ff"/><ellipse cx="405.2" cy="192.7" rx="1.04" ry="0.76" transform="rotate(164 405.2 192.7)" fill="#f3f1ff"/><ellipse cx="492.6" cy="181.5" rx="2.00" ry="1.64" transform="rotate(15 492.6 181.5)" fill="#f3f1ff"/><ellipse cx="489.9" cy="174.8" rx="1.41" ry="0.88" transform="rotate(162 489.9 174.8)" fill="#f3f1ff"/><ellipse cx="497.9" cy="176.1" rx="1.01" ry="0.65" transform="rotate(114 497.9 176.1)" fill="#f3f1ff"/><ellipse cx="535.7" cy="190.3" rx="1.84" ry="1.59" transform="rotate(49 535.7 190.3)" fill="#f3f1ff"/><ellipse cx="531.2" cy="185.9" rx="1.59" ry="1.30" transform="rotate(85 531.2 185.9)" fill="#f3f1ff"/><ellipse cx="540.4" cy="187.2" rx="1.75" ry="1.13" transform="rotate(55 540.4 187.2)" fill="#f3f1ff"/><ellipse cx="522.6" cy="206.1" rx="2.25" ry="1.69" transform="rotate(95 522.6 206.1)" fill="#f3f1ff"/><ellipse cx="518.9" cy="212.8" rx="1.28" ry="1.15" transform="rotate(49 518.9 212.8)" fill="#f3f1ff"/><ellipse cx="546.2" cy="218.2" rx="2.19" ry="1.90" transform="rotate(95 546.2 218.2)" fill="#f3f1ff"/><ellipse cx="543.6" cy="223.5" rx="1.15" ry="0.72" transform="rotate(125 543.6 223.5)" fill="#f3f1ff"/><ellipse cx="580.3" cy="197.2" rx="2.22" ry="1.81" transform="rotate(101 580.3 197.2)" fill="#f3f1ff"/><ellipse cx="579.0" cy="191.4" rx="1.71" ry="1.45" transform="rotate(60 579.0 191.4)" fill="#f3f1ff"/><ellipse cx="586.4" cy="192.9" rx="1.14" ry="0.73" transform="rotate(17 586.4 192.9)" fill="#f3f1ff"/><ellipse cx="580.9" cy="203.5" rx="1.10" ry="0.89" transform="rotate(17 580.9 203.5)" fill="#f3f1ff"/><ellipse cx="184.0" cy="203.5" rx="1.79" ry="1.25" transform="rotate(3 184.0 203.5)" fill="#f3f1ff"/><ellipse cx="180.2" cy="209.3" rx="1.05" ry="0.83" transform="rotate(62 180.2 209.3)" fill="#f3f1ff"/><ellipse cx="269.0" cy="197.2" rx="1.53" ry="0.97" transform="rotate(83 269.0 197.2)" fill="#f3f1ff"/><ellipse cx="265.5" cy="195.1" rx="1.30" ry="0.83" transform="rotate(175 265.5 195.1)" fill="#f3f1ff"/><ellipse cx="271.5" cy="192.4" rx="1.02" ry="0.78" transform="rotate(163 271.5 192.4)" fill="#f3f1ff"/><ellipse cx="316.3" cy="199.3" rx="2.15" ry="1.78" transform="rotate(124 316.3 199.3)" fill="#f3f1ff"/><ellipse cx="309.6" cy="196.4" rx="1.19" ry="0.89" transform="rotate(135 309.6 196.4)" fill="#f3f1ff"/><ellipse cx="317.3" cy="191.9" rx="0.93" ry="0.80" transform="rotate(179 317.3 191.9)" fill="#f3f1ff"/><ellipse cx="319.6" cy="203.7" rx="1.51" ry="1.09" transform="rotate(154 319.6 203.7)" fill="#f3f1ff"/><ellipse cx="344.0" cy="200.8" rx="1.62" ry="1.15" transform="rotate(157 344.0 200.8)" fill="#f3f1ff"/><ellipse cx="345.7" cy="206.4" rx="1.21" ry="0.93" transform="rotate(98 345.7 206.4)" fill="#f3f1ff"/><ellipse cx="339.1" cy="206.0" rx="1.12" ry="0.89" transform="rotate(30 339.1 206.0)" fill="#f3f1ff"/><ellipse cx="343.1" cy="195.3" rx="1.18" ry="0.75" transform="rotate(76 343.1 195.3)" fill="#f3f1ff"/><ellipse cx="449.0" cy="214.0" rx="1.82" ry="1.15" transform="rotate(9 449.0 214.0)" fill="#f3f1ff"/><ellipse cx="442.7" cy="215.9" rx="0.82" ry="0.57" transform="rotate(131 442.7 215.9)" fill="#f3f1ff"/><ellipse cx="447.3" cy="209.7" rx="1.03" ry="0.89" transform="rotate(162 447.3 209.7)" fill="#f3f1ff"/><ellipse cx="453.4" cy="209.3" rx="1.36" ry="0.87" transform="rotate(128 453.4 209.3)" fill="#f3f1ff"/><ellipse cx="471.7" cy="215.0" rx="1.92" ry="1.18" transform="rotate(96 471.7 215.0)" fill="#f3f1ff"/><ellipse cx="467.9" cy="212.1" rx="1.51" ry="1.03" transform="rotate(108 467.9 212.1)" fill="#f3f1ff"/><ellipse cx="475.7" cy="209.3" rx="1.36" ry="1.14" transform="rotate(45 475.7 209.3)" fill="#f3f1ff"/><ellipse cx="496.3" cy="224.5" rx="1.93" ry="1.49" transform="rotate(40 496.3 224.5)" fill="#f3f1ff"/><ellipse cx="491.4" cy="227.8" rx="0.84" ry="0.51" transform="rotate(90 491.4 227.8)" fill="#f3f1ff"/><ellipse cx="498.0" cy="220.7" rx="1.42" ry="1.16" transform="rotate(107 498.0 220.7)" fill="#f3f1ff"/><ellipse cx="346.7" cy="232.3" rx="1.81" ry="1.42" transform="rotate(57 346.7 232.3)" fill="#f3f1ff"/><ellipse cx="353.5" cy="230.6" rx="1.32" ry="0.90" transform="rotate(95 353.5 230.6)" fill="#f3f1ff"/><ellipse cx="380.8" cy="235.0" rx="2.01" ry="1.34" transform="rotate(132 380.8 235.0)" fill="#f3f1ff"/><ellipse cx="382.1" cy="230.1" rx="1.32" ry="1.01" transform="rotate(46 382.1 230.1)" fill="#f3f1ff"/><ellipse cx="417.6" cy="232.3" rx="1.52" ry="1.04" transform="rotate(65 417.6 232.3)" fill="#f3f1ff"/><ellipse cx="410.7" cy="233.0" rx="1.50" ry="0.98" transform="rotate(3 410.7 233.0)" fill="#f3f1ff"/><ellipse cx="416.6" cy="228.0" rx="1.26" ry="0.91" transform="rotate(47 416.6 228.0)" fill="#f3f1ff"/><ellipse cx="438.6" cy="242.8" rx="1.93" ry="1.48" transform="rotate(76 438.6 242.8)" fill="#f3f1ff"/><ellipse cx="431.2" cy="239.4" rx="1.32" ry="1.07" transform="rotate(24 431.2 239.4)" fill="#f3f1ff"/><ellipse cx="467.5" cy="249.1" rx="1.85" ry="1.54" transform="rotate(22 467.5 249.1)" fill="#f3f1ff"/><ellipse cx="464.2" cy="252.6" rx="1.36" ry="1.14" transform="rotate(67 464.2 252.6)" fill="#f3f1ff"/><ellipse cx="464.7" cy="244.8" rx="1.47" ry="1.23" transform="rotate(47 464.7 244.8)" fill="#f3f1ff"/><ellipse cx="211.3" cy="244.5" rx="1.46" ry="0.89" transform="rotate(46 211.3 244.5)" fill="#f3f1ff"/><ellipse cx="208.1" cy="240.3" rx="1.02" ry="0.88" transform="rotate(62 208.1 240.3)" fill="#f3f1ff"/><ellipse cx="214.4" cy="240.6" rx="1.15" ry="0.78" transform="rotate(102 214.4 240.6)" fill="#f3f1ff"/><ellipse cx="275.8" cy="237.5" rx="2.04" ry="1.83" transform="rotate(65 275.8 237.5)" fill="#f3f1ff"/><ellipse cx="271.4" cy="231.3" rx="0.98" ry="0.65" transform="rotate(27 271.4 231.3)" fill="#f3f1ff"/><ellipse cx="290.0" cy="250.5" rx="1.60" ry="1.43" transform="rotate(158 290.0 250.5)" fill="#f3f1ff"/><ellipse cx="287.4" cy="254.9" rx="1.02" ry="0.88" transform="rotate(147 287.4 254.9)" fill="#f3f1ff"/><ellipse cx="375.6" cy="253.3" rx="1.79" ry="1.22" transform="rotate(167 375.6 253.3)" fill="#f3f1ff"/><ellipse cx="379.1" cy="248.5" rx="1.17" ry="0.79" transform="rotate(49 379.1 248.5)" fill="#f3f1ff"/><ellipse cx="378.2" cy="257.6" rx="1.16" ry="0.83" transform="rotate(120 378.2 257.6)" fill="#f3f1ff"/><ellipse cx="375.6" cy="269.1" rx="1.69" ry="1.22" transform="rotate(130 375.6 269.1)" fill="#f3f1ff"/><ellipse cx="379.4" cy="266.7" rx="1.18" ry="0.92" transform="rotate(26 379.4 266.7)" fill="#f3f1ff"/><ellipse cx="257.5" cy="269.1" rx="1.99" ry="1.24" transform="rotate(56 257.5 269.1)" fill="#f3f1ff"/><ellipse cx="262.5" cy="269.3" rx="1.04" ry="0.78" transform="rotate(33 262.5 269.3)" fill="#f3f1ff"/><ellipse cx="273.2" cy="271.7" rx="2.44" ry="1.66" transform="rotate(138 273.2 271.7)" fill="#f3f1ff"/><ellipse cx="267.9" cy="268.9" rx="1.51" ry="1.33" transform="rotate(44 267.9 268.9)" fill="#f3f1ff"/><ellipse cx="302.0" cy="272.8" rx="2.05" ry="1.34" transform="rotate(38 302.0 272.8)" fill="#f3f1ff"/><ellipse cx="302.9" cy="280.3" rx="0.99" ry="0.63" transform="rotate(8 302.9 280.3)" fill="#f3f1ff"/><ellipse cx="300.1" cy="267.6" rx="1.44" ry="0.96" transform="rotate(55 300.1 267.6)" fill="#f3f1ff"/><ellipse cx="324.7" cy="271.7" rx="1.60" ry="0.99" transform="rotate(164 324.7 271.7)" fill="#f3f1ff"/><ellipse cx="322.3" cy="268.5" rx="1.24" ry="0.87" transform="rotate(111 322.3 268.5)" fill="#f3f1ff"/><ellipse cx="330.0" cy="284.8" rx="1.85" ry="1.13" transform="rotate(33 330.0 284.8)" fill="#f3f1ff"/><ellipse cx="330.6" cy="277.9" rx="1.41" ry="1.07" transform="rotate(62 330.6 277.9)" fill="#f3f1ff"/><ellipse cx="335.8" cy="287.4" rx="1.21" ry="0.80" transform="rotate(63 335.8 287.4)" fill="#f3f1ff"/><ellipse cx="270.6" cy="287.5" rx="1.48" ry="1.06" transform="rotate(33 270.6 287.5)" fill="#f3f1ff"/><ellipse cx="268.2" cy="284.5" rx="1.16" ry="0.91" transform="rotate(153 268.2 284.5)" fill="#f3f1ff"/><ellipse cx="275.4" cy="289.2" rx="0.96" ry="0.60" transform="rotate(162 275.4 289.2)" fill="#f3f1ff"/><ellipse cx="268.0" cy="299.0" rx="2.14" ry="1.51" transform="rotate(133 268.0 299.0)" fill="#f3f1ff"/><ellipse cx="269.6" cy="290.7" rx="1.51" ry="1.09" transform="rotate(56 269.6 290.7)" fill="#f3f1ff"/><ellipse cx="170.9" cy="291.7" rx="1.66" ry="1.06" transform="rotate(74 170.9 291.7)" fill="#f3f1ff"/><ellipse cx="174.9" cy="295.0" rx="1.18" ry="0.80" transform="rotate(161 174.9 295.0)" fill="#f3f1ff"/><ellipse cx="166.5" cy="289.7" rx="1.31" ry="0.92" transform="rotate(76 166.5 289.7)" fill="#f3f1ff"/><ellipse cx="327.0" cy="143.5" rx="1.78" ry="1.07" transform="rotate(143 327.0 143.5)" fill="#f3f1ff"/><ellipse cx="332.1" cy="142.2" rx="1.64" ry="1.32" transform="rotate(173 332.1 142.2)" fill="#f3f1ff"/><ellipse cx="330.2" cy="146.8" rx="1.47" ry="1.28" transform="rotate(142 330.2 146.8)" fill="#f3f1ff"/><ellipse cx="318.8" cy="143.2" rx="1.66" ry="1.48" transform="rotate(119 318.8 143.2)" fill="#f3f1ff"/><ellipse cx="383.0" cy="237.5" rx="1.82" ry="1.21" transform="rotate(10 383.0 237.5)" fill="#f3f1ff"/><ellipse cx="378.1" cy="239.7" rx="1.53" ry="1.18" transform="rotate(81 378.1 239.7)" fill="#f3f1ff"/><ellipse cx="262.0" cy="274.5" rx="2.03" ry="1.57" transform="rotate(170 262.0 274.5)" fill="#f3f1ff"/><ellipse cx="260.5" cy="268.7" rx="1.04" ry="0.90" transform="rotate(90 260.5 268.7)" fill="#f3f1ff"/><ellipse cx="530.0" cy="205.5" rx="1.69" ry="1.20" transform="rotate(173 530.0 205.5)" fill="#f3f1ff"/><ellipse cx="532.1" cy="201.7" rx="1.47" ry="1.04" transform="rotate(108 532.1 201.7)" fill="#f3f1ff"/><ellipse cx="534.8" cy="209.5" rx="1.14" ry="0.89" transform="rotate(54 534.8 209.5)" fill="#f3f1ff"/></g>
</svg></div>
<div class="abs" style="left:830px;top:45.5px;width:61.4px;height:615.5px;overflow:hidden;background:#c8c8c8"><div class="abs" style="left:-830px;top:-45.5px;width:1200px;height:675px">
<div class="tabbar" style="left:830px;top:45.5px;width:61.4px"><div class="tab" style="left:0;width:28px"></div></div>
<svg style="left:834.500px;top:48.800px" width="7" height="6" viewBox="0 0 14 12"><path d="M3.500 1.500h10M3.500 6h10M3.500 10.500h10" stroke="#666" stroke-width="1.400"/><path d="M0 1.500h2M0 6h2M0 10.500h2" stroke="#888" stroke-width="1.400"/></svg>
<div class="t " style="left:844.8px;top:47.40px;font-size:8.300px;color:#222">Hie</div>
<div class="arrr" style="left:861px;top:49.200px;border-left-color:#3a3a3a"></div>
<div class="abs" style="left:858px;top:45.500px;width:8.500px;height:12px;background:#a5a5a5;z-index:-1"></div>
<svg style="left:869.7px;top:47.5px" width="6" height="7.500" viewBox="0 0 12 15"><rect x="1" y="6.500" width="10" height="7.500" rx="1" fill="none" stroke="#666" stroke-width="1.400"/><path d="M3.200 6.500V4.200a2.800 2.800 0 0 1 5.600 0" fill="none" stroke="#666" stroke-width="1.400"/></svg>
<svg style="left:882.3px;top:48.3px" width="2" height="7" viewBox="0 0 2 7"><rect x=".4" y=".2" width="1.2" height="1.2" fill="#555"/><rect x=".4" y="2.7" width="1.2" height="1.2" fill="#555"/><rect x=".4" y="5.2" width="1.2" height="1.2" fill="#555"/></svg>
<div class="tb" style="left:830px;top:57.500px;width:61.4px;height:13.200px"></div>
<svg style="left:834.7px;top:60.3px" width="7" height="7" viewBox="0 0 14 14"><path d="M7 1v12M1 7h12" stroke="#333" stroke-width="1.700"/></svg>
<div class="arr" style="left:844.300px;top:62.500px"></div>
<div class="abs" style="left:858px;top:60px;width:24.0px;height:8.3px;background:#f0f0f0;border-radius:1.500px;box-shadow:inset 0 .5px 0 #aaa"></div><svg style="left:860.2px;top:61.7px" width="5" height="5" viewBox="0 0 10 10"><circle cx="4" cy="4" r="2.600" fill="none" stroke="#7a7a7a" stroke-width="1.200"/><path d="M6 6l3 3" stroke="#7a7a7a" stroke-width="1.300"/></svg><svg style="left:869.500px;top:61.300px" width="5" height="6" viewBox="0 0 10 12"><circle cx="5" cy="3" r="2" fill="none" stroke="#aaa" stroke-width="1.200"/><path d="M1.500 11 5 5.500 8.500 11" fill="none" stroke="#aaa" stroke-width="1.200"/></svg>
<svg style="left:883.8px;top:60.2px" width="8" height="8" viewBox="0 0 16 16"><rect x="5" y="1.500" width="9.500" height="8.500" fill="none" stroke="#555" stroke-width="1.300"/><rect x="1.500" y="7" width="6.500" height="7" rx="3" fill="#c8c8c8" stroke="#555" stroke-width="1.300"/><rect x="8" y="4" width="3.500" height="3" fill="#555"/></svg>
<div class="abs" style="left:830px;top:70.700px;width:20px;height:590.300px;background:#bababa"></div>
<div class="abs" style="left:830px;top:70.700px;width:61.4px;height:9.300px;background:#e9e9e9"></div>
<div class="arrd" style="left:851.300px;top:73.800px"></div>
<svg style="left:859.300px;top:71.300px" width="8.400" height="8.400" viewBox="0 0 17 17"><circle cx="8.500" cy="8.500" r="7.500" fill="#1e1e1e"/><path d="M8.500 8.500V2.200M8.500 8.500l-5.400 3.300M8.500 8.500l5.400 3.300" stroke="#e9e9e9" stroke-width="2"/><circle cx="8.500" cy="8.500" r="4.800" fill="none" stroke="#e9e9e9" stroke-width="1.300"/><circle cx="8.500" cy="8.500" r="1.500" fill="#1e1e1e"/></svg>
<div class="t b" style="left:870.7px;top:70.80px;font-size:7.900px;color:#111;width:8px;overflow:hidden">Pa</div>
<svg style="left:883.2px;top:72px" width="2" height="7" viewBox="0 0 2 7"><rect x=".4" y=".2" width="1.2" height="1.2" fill="#555"/><rect x=".4" y="2.7" width="1.2" height="1.2" fill="#555"/><rect x=".4" y="5.2" width="1.2" height="1.2" fill="#555"/></svg>
<div class="arrr" style="left:860.300px;top:83.3px"></div>
<svg style="left:867.8px;top:81.0px;opacity:1" width="8.4" height="9" viewBox="0 0 17 18"><path d="M8.5 1.200 15.500 4.800v8.400L8.500 16.800 1.500 13.200V4.800z" fill="none" stroke="#4a4a4a" stroke-width="1.300" stroke-linejoin="round"/><path d="M1.500 4.800l7 3.700 7-3.700M8.500 8.500v8.300" fill="none" stroke="#4a4a4a" stroke-width="1.200"/></svg>
<div class="t " style="left:879px;top:81.10px;font-size:8.300px;color:#111">Car</div>
<svg style="left:867.8px;top:90.9px;opacity:1" width="8.4" height="9" viewBox="0 0 17 18"><path d="M8.5 1.200 15.500 4.800v8.400L8.500 16.800 1.500 13.200V4.800z" fill="none" stroke="#4a4a4a" stroke-width="1.300" stroke-linejoin="round"/><path d="M1.500 4.800l7 3.700 7-3.700M8.500 8.500v8.300" fill="none" stroke="#4a4a4a" stroke-width="1.200"/></svg>
<div class="t " style="left:879px;top:91.00px;font-size:8.300px;color:#111">Eve</div>
<svg style="left:867.8px;top:100.8px;opacity:1" width="8.4" height="9" viewBox="0 0 17 18"><path d="M8.5 1.200 15.500 4.800v8.400L8.500 16.800 1.500 13.200V4.800z" fill="none" stroke="#4a4a4a" stroke-width="1.300" stroke-linejoin="round"/><path d="M1.500 4.800l7 3.700 7-3.700M8.500 8.500v8.300" fill="none" stroke="#4a4a4a" stroke-width="1.200"/></svg>
<div class="t " style="left:879px;top:100.90px;font-size:8.300px;color:#111">Ma</div>
<div class="arrr" style="left:860.300px;top:113.2px"></div>
<svg style="left:867.8px;top:110.9px;opacity:1" width="8.4" height="9" viewBox="0 0 17 18"><path d="M8.5 1.200 15.500 4.800v8.400L8.500 16.800 1.500 13.200V4.800z" fill="none" stroke="#4a4a4a" stroke-width="1.300" stroke-linejoin="round"/><path d="M1.500 4.800l7 3.700 7-3.700M8.500 8.500v8.300" fill="none" stroke="#4a4a4a" stroke-width="1.200"/></svg>
<div class="t " style="left:879px;top:111.00px;font-size:8.300px;color:#111">PPS</div>
<div class="arrd" style="left:859.500px;top:123.89999999999999px"></div>
<svg style="left:867.8px;top:120.8px;opacity:1" width="8.4" height="9" viewBox="0 0 17 18"><path d="M8.5 1.200 15.500 4.800v8.400L8.500 16.800 1.500 13.200V4.800z" fill="none" stroke="#4a4a4a" stroke-width="1.300" stroke-linejoin="round"/><path d="M1.500 4.800l7 3.700 7-3.700M8.500 8.500v8.300" fill="none" stroke="#4a4a4a" stroke-width="1.200"/></svg>
<div class="t " style="left:879px;top:120.90px;font-size:8.300px;color:#111">Par</div>
<div class="abs" style="left:830px;top:131.300px;width:61.4px;height:9.600px;background:#b0b0b0"></div>
<div class="abs" style="left:830px;top:131.300px;width:20px;height:9.600px;background:#a8a8a8"></div>
<svg style="left:876.6px;top:130.9px;opacity:1" width="8.4" height="9" viewBox="0 0 17 18"><path d="M8.5 1.200 15.500 4.800v8.400L8.500 16.800 1.500 13.200V4.800z" fill="none" stroke="#8a8a8a" stroke-width="1.300" stroke-linejoin="round"/><path d="M1.500 4.800l7 3.700 7-3.700M8.500 8.500v8.300" fill="none" stroke="#8a8a8a" stroke-width="1.200"/></svg>
<div class="t " style="left:887.8px;top:131.00px;font-size:8.300px;color:#8e8e8e">P</div>
<svg style="left:876.6px;top:140.8px;opacity:1" width="8.4" height="9" viewBox="0 0 17 18"><path d="M8.5 1.200 15.500 4.800v8.400L8.500 16.800 1.500 13.200V4.800z" fill="none" stroke="#8a8a8a" stroke-width="1.300" stroke-linejoin="round"/><path d="M1.500 4.800l7 3.700 7-3.700M8.500 8.500v8.300" fill="none" stroke="#8a8a8a" stroke-width="1.200"/></svg>
<div class="t " style="left:887.8px;top:140.90px;font-size:8.300px;color:#8e8e8e">P</div>
<svg style="left:876.6px;top:150.8px;opacity:1" width="8.4" height="9" viewBox="0 0 17 18"><path d="M8.5 1.200 15.500 4.800v8.400L8.500 16.800 1.500 13.200V4.800z" fill="none" stroke="#8a8a8a" stroke-width="1.300" stroke-linejoin="round"/><path d="M1.500 4.800l7 3.700 7-3.700M8.500 8.500v8.300" fill="none" stroke="#8a8a8a" stroke-width="1.200"/></svg>
<div class="t " style="left:887.8px;top:150.90px;font-size:8.300px;color:#8e8e8e">P</div>
<svg style="left:876.6px;top:160.8px;opacity:1" width="8.4" height="9" viewBox="0 0 17 18"><path d="M8.5 1.200 15.500 4.800v8.400L8.500 16.800 1.500 13.200V4.800z" fill="none" stroke="#4a4a4a" stroke-width="1.300" stroke-linejoin="round"/><path d="M1.500 4.800l7 3.700 7-3.700M8.500 8.500v8.300" fill="none" stroke="#4a4a4a" stroke-width="1.200"/></svg>
<div class="t " style="left:887.8px;top:160.90px;font-size:8.300px;color:#111">P</div>
</div></div>
<div class="abs" style="left:892.8px;top:45.5px;width:83.2px;height:615.5px;overflow:hidden;background:#c8c8c8"><div class="abs" style="left:-892.8px;top:-45.5px;width:1200px;height:675px">
<div class="tabbar" style="left:892.8px;top:45.5px;width:83.2px"><div class="tab" style="left:0;width:50.300px"></div></div>
<svg style="left:897.1px;top:48.0px" width="9" height="7.200" viewBox="0 0 18 14.400"><path d="M1 13.400V2c0-.6.400-1 1-1h4.400l1.700 1.900H16c.6 0 1 .4 1 1v9.500z" fill="#4a4a4a"/></svg>
<div class="t " style="left:907.7px;top:47.10px;font-size:8.100px;color:#222">Project</div>
<svg style="left:953.7px;top:47.5px" width="6" height="7.500" viewBox="0 0 12 15"><rect x="1" y="6.500" width="10" height="7.500" rx="1" fill="none" stroke="#666" stroke-width="1.400"/><path d="M3.200 6.500V4.200a2.800 2.800 0 0 1 5.600 0" fill="none" stroke="#666" stroke-width="1.400"/></svg>
<svg style="left:966.5px;top:48.3px" width="2" height="7" viewBox="0 0 2 7"><rect x=".4" y=".2" width="1.2" height="1.2" fill="#555"/><rect x=".4" y="2.7" width="1.2" height="1.2" fill="#555"/><rect x=".4" y="5.2" width="1.2" height="1.2" fill="#555"/></svg>
<div class="tb" style="left:892.8px;top:57.500px;width:83.2px;height:13.200px"></div>
<svg style="left:897.0px;top:60.3px" width="7" height="7" viewBox="0 0 14 14"><path d="M7 1v12M1 7h12" stroke="#333" stroke-width="1.700"/></svg>
<div class="arr" style="left:906.700px;top:62.500px"></div>
<div class="abs" style="left:921.3px;top:60px;width:39.4px;height:8.3px;background:#f0f0f0;border-radius:1.500px;box-shadow:inset 0 .5px 0 #aaa"></div><svg style="left:923.5px;top:61.7px" width="5" height="5" viewBox="0 0 10 10"><circle cx="4" cy="4" r="2.600" fill="none" stroke="#7a7a7a" stroke-width="1.200"/><path d="M6 6l3 3" stroke="#7a7a7a" stroke-width="1.300"/></svg>
<svg style="left:962.8px;top:60.2px" width="8" height="8" viewBox="0 0 16 16"><rect x="5" y="1.500" width="9.500" height="8.500" fill="none" stroke="#555" stroke-width="1.300"/><rect x="1.500" y="7" width="6.500" height="7" rx="3" fill="#c8c8c8" stroke="#555" stroke-width="1.300"/><rect x="8" y="4" width="3.500" height="3" fill="#555"/></svg>
<div class="arrd" style="left:895px;top:76.6px"></div>
<svg style="left:903.1px;top:74.7px" width="9" height="7.200" viewBox="0 0 18 14.400"><path d="M1 13V2.200c0-.6.400-1 1-1h4.200l1.600 1.800h6.400c.6 0 1 .4 1 1v1.800" fill="#4a4a4a" stroke="#4a4a4a" stroke-width="1"/><path d="M1 13.400 4 6h13.500l-3 7.400z" fill="#565656"/><path d="M4.800 7.200h11" stroke="#d8d8d8" stroke-width=".9"/></svg>
<div class="t b" style="left:914.7px;top:73.80px;font-size:8px;color:#111">Assets</div>
<div class="arrd" style="left:904px;top:86.6px"></div>
<svg style="left:911.9px;top:84.7px" width="9" height="7.200" viewBox="0 0 18 14.400"><path d="M1 13V2.200c0-.6.400-1 1-1h4.200l1.600 1.800h6.400c.6 0 1 .4 1 1v1.800" fill="#4a4a4a" stroke="#4a4a4a" stroke-width="1"/><path d="M1 13.400 4 6h13.500l-3 7.400z" fill="#565656"/><path d="M4.800 7.200h11" stroke="#d8d8d8" stroke-width=".9"/></svg>
<div class="t " style="left:922.8px;top:83.80px;font-size:8px;color:#111">ParticlePathSystem</div>
<div class="arrd" style="left:912.7px;top:96.6px"></div>
<svg style="left:920.5px;top:94.7px" width="9" height="7.200" viewBox="0 0 18 14.400"><path d="M1 13V2.200c0-.6.400-1 1-1h4.200l1.600 1.800h6.400c.6 0 1 .4 1 1v1.800" fill="#4a4a4a" stroke="#4a4a4a" stroke-width="1"/><path d="M1 13.400 4 6h13.500l-3 7.400z" fill="#565656"/><path d="M4.800 7.200h11" stroke="#d8d8d8" stroke-width=".9"/></svg>
<div class="t " style="left:931.4px;top:93.80px;font-size:8px;color:#111">Materials</div>
<svg style="left:929.3px;top:104.0px" width="8.600" height="8.600" viewBox="0 0 17 17"><circle cx="8.500" cy="8.500" r="7.800" fill="#1b6fe0"/><circle cx="8.500" cy="8.500" r="7.800" fill="none" stroke="#0f56c4" stroke-width=".8"/><ellipse cx="7" cy="6.200" rx="3.300" ry="3" fill="#eaf3ff"/></svg>
<div class="t " style="left:940px;top:103.80px;font-size:8px;color:#111">Lightning5</div>
<svg style="left:929.3px;top:114.0px" width="8.600" height="8.600" viewBox="0 0 17 17"><circle cx="8.500" cy="8.500" r="7.800" fill="#1b6fe0"/><circle cx="8.500" cy="8.500" r="7.800" fill="none" stroke="#0f56c4" stroke-width=".8"/><ellipse cx="7" cy="6.200" rx="3.300" ry="3" fill="#eaf3ff"/></svg>
<div class="t " style="left:940px;top:113.80px;font-size:8px;color:#111">Sci-Fi&nbsp; Env</div>
<svg style="left:929.3px;top:124.0px" width="8.600" height="8.600" viewBox="0 0 17 17"><circle cx="8.500" cy="8.500" r="7.800" fill="#1b6fe0"/><circle cx="8.500" cy="8.500" r="7.800" fill="none" stroke="#0f56c4" stroke-width=".8"/><ellipse cx="7" cy="6.200" rx="3.300" ry="3" fill="#eaf3ff"/></svg>
<div class="t " style="left:940px;top:123.80px;font-size:8px;color:#111">Sci-Fi Tra</div>
<svg style="left:929.3px;top:134.0px" width="8.600" height="8.600" viewBox="0 0 17 17"><circle cx="8.500" cy="8.500" r="7.800" fill="#1b6fe0"/><circle cx="8.500" cy="8.500" r="7.800" fill="none" stroke="#0f56c4" stroke-width=".8"/><ellipse cx="7" cy="6.200" rx="3.300" ry="3" fill="#eaf3ff"/></svg>
<div class="t " style="left:940px;top:133.80px;font-size:8px;color:#111">Smoke 1</div>
<svg style="left:929.3px;top:144.0px" width="8.600" height="8.600" viewBox="0 0 17 17"><circle cx="8.500" cy="8.500" r="7.800" fill="#1b6fe0"/><circle cx="8.500" cy="8.500" r="7.800" fill="none" stroke="#0f56c4" stroke-width=".8"/><ellipse cx="7" cy="6.200" rx="3.300" ry="3" fill="#eaf3ff"/></svg>
<div class="t " style="left:940px;top:143.80px;font-size:8px;color:#111">Smoke</div>
<div class="arrd" style="left:912.7px;top:156.60000000000002px"></div>
<svg style="left:920.5px;top:154.7px" width="9" height="7.200" viewBox="0 0 18 14.400"><path d="M1 13V2.200c0-.6.400-1 1-1h4.200l1.600 1.800h6.400c.6 0 1 .4 1 1v1.800" fill="#4a4a4a" stroke="#4a4a4a" stroke-width="1"/><path d="M1 13.400 4 6h13.500l-3 7.400z" fill="#565656"/><path d="M4.800 7.200h11" stroke="#d8d8d8" stroke-width=".9"/></svg>
<div class="t " style="left:931.4px;top:153.80px;font-size:8px;color:#111">Prefabs</div>
<svg style="left:929.3px;top:163.8px" width="8.600" height="9" viewBox="0 0 17 18"><path d="M8.500 1 16 4.800v8.400L8.500 17 1 13.200V4.800z" fill="#2f86ee"/><path d="M8.500 1 16 4.800 8.500 8.600 1 4.800z" fill="#7db8ff"/><path d="M8.500 8.600V17L1 13.200V4.800z" fill="#3d90f4"/><path d="M8.500 8.600V17l7.500-3.800V4.800z" fill="#1b66cc"/></svg>
<div class="t " style="left:940px;top:163.80px;font-size:8px;color:#111">Particle Sy</div>
<svg style="left:929.3px;top:173.8px" width="8.600" height="9" viewBox="0 0 17 18"><path d="M8.500 1 16 4.800v8.400L8.500 17 1 13.200V4.800z" fill="#2f86ee"/><path d="M8.500 1 16 4.800 8.500 8.600 1 4.800z" fill="#7db8ff"/><path d="M8.500 8.600V17L1 13.200V4.800z" fill="#3d90f4"/><path d="M8.500 8.600V17l7.500-3.800V4.800z" fill="#1b66cc"/></svg>
<div class="t " style="left:940px;top:173.80px;font-size:8px;color:#111">Particle Sy</div>
<svg style="left:929.3px;top:183.8px" width="8.600" height="9" viewBox="0 0 17 18"><path d="M8.500 1 16 4.800v8.400L8.500 17 1 13.200V4.800z" fill="#2f86ee"/><path d="M8.500 1 16 4.800 8.500 8.600 1 4.800z" fill="#7db8ff"/><path d="M8.500 8.600V17L1 13.200V4.800z" fill="#3d90f4"/><path d="M8.500 8.600V17l7.500-3.800V4.800z" fill="#1b66cc"/></svg>
<div class="t " style="left:940px;top:183.80px;font-size:8px;color:#111">Particle Sy</div>
<svg style="left:929.3px;top:193.8px" width="8.600" height="9" viewBox="0 0 17 18"><path d="M8.500 1 16 4.800v8.400L8.500 17 1 13.200V4.800z" fill="#2f86ee"/><path d="M8.500 1 16 4.800 8.500 8.600 1 4.800z" fill="#7db8ff"/><path d="M8.500 8.600V17L1 13.200V4.800z" fill="#3d90f4"/><path d="M8.500 8.600V17l7.500-3.800V4.800z" fill="#1b66cc"/></svg>
<div class="t " style="left:940px;top:193.80px;font-size:8px;color:#111">Particle Sy</div>
<div class="arrd" style="left:912.7px;top:206.60000000000002px"></div>
<svg style="left:920.5px;top:204.7px" width="9" height="7.200" viewBox="0 0 18 14.400"><path d="M1 13V2.200c0-.6.400-1 1-1h4.200l1.600 1.800h6.400c.6 0 1 .4 1 1v1.800" fill="#4a4a4a" stroke="#4a4a4a" stroke-width="1"/><path d="M1 13.400 4 6h13.500l-3 7.400z" fill="#565656"/><path d="M4.800 7.200h11" stroke="#d8d8d8" stroke-width=".9"/></svg>
<div class="t " style="left:931.4px;top:203.80px;font-size:8px;color:#111">Scenes</div>
<svg style="left:929.6px;top:213.8px" width="8" height="9" viewBox="0 0 16 18"><path d="M1.500 1h9.500l3.500 3.500V17h-13z" fill="#f4f4f4" stroke="#9a9a9a" stroke-width=".8"/><circle cx="8" cy="10" r="4.200" fill="#2a2a2a"/><path d="M8 10V6.500M8 10l-3 1.800M8 10l3 1.800" stroke="#f4f4f4" stroke-width="1.200"/></svg>
<div class="t " style="left:940px;top:213.80px;font-size:8px;color:#111">ParticlePat</div>
<div class="arrd" style="left:912.7px;top:226.60000000000002px"></div>
<svg style="left:920.5px;top:224.7px" width="9" height="7.200" viewBox="0 0 18 14.400"><path d="M1 13V2.200c0-.6.400-1 1-1h4.200l1.600 1.800h6.400c.6 0 1 .4 1 1v1.800" fill="#4a4a4a" stroke="#4a4a4a" stroke-width="1"/><path d="M1 13.400 4 6h13.500l-3 7.400z" fill="#565656"/><path d="M4.800 7.200h11" stroke="#d8d8d8" stroke-width=".9"/></svg>
<div class="t " style="left:931.4px;top:223.80px;font-size:8px;color:#111">Scripts</div>
<svg style="left:929.6px;top:233.8px" width="8" height="9" viewBox="0 0 16 18"><path d="M1.500 1h9.500l3.500 3.500V17h-13z" fill="#f2f2f2" stroke="#a2a2a2" stroke-width=".8"/></svg><div class="t b" style="left:931.4px;top:234.1px;font-size:6.500px;color:#2e9a3a;line-height:9px;height:9px">#</div>
<div class="t " style="left:940px;top:233.80px;font-size:8px;color:#111">ParticlePat</div>
<svg style="left:929.6px;top:243.8px" width="8" height="9" viewBox="0 0 16 18"><path d="M1.500 1h9.500l3.500 3.500V17h-13z" fill="#f2f2f2" stroke="#a2a2a2" stroke-width=".8"/></svg><div class="t b" style="left:931.4px;top:244.1px;font-size:6.500px;color:#2e9a3a;line-height:9px;height:9px">#</div>
<div class="t " style="left:940px;top:243.80px;font-size:8px;color:#111">ParticleUV</div>
<svg style="left:929.6px;top:253.8px" width="8" height="9" viewBox="0 0 16 18"><path d="M1.500 1h9.500l3.500 3.500V17h-13z" fill="#f2f2f2" stroke="#a2a2a2" stroke-width=".8"/></svg><div class="t b" style="left:931.4px;top:254.1px;font-size:6.500px;color:#2e9a3a;line-height:9px;height:9px">#</div>
<div class="t " style="left:940px;top:253.80px;font-size:8px;color:#111">Path</div>
<svg style="left:929.6px;top:263.8px" width="8" height="9" viewBox="0 0 16 18"><path d="M1.500 1h9.500l3.500 3.500V17h-13z" fill="#f2f2f2" stroke="#a2a2a2" stroke-width=".8"/></svg><div class="t b" style="left:931.4px;top:264.1px;font-size:6.500px;color:#2e9a3a;line-height:9px;height:9px">#</div>
<div class="t " style="left:940px;top:263.80px;font-size:8px;color:#111">PathPositio</div>
<svg style="left:929.6px;top:273.8px" width="8" height="9" viewBox="0 0 16 18"><path d="M1.500 1h9.500l3.500 3.500V17h-13z" fill="#f2f2f2" stroke="#a2a2a2" stroke-width=".8"/></svg><div class="t b" style="left:931.4px;top:274.1px;font-size:6.500px;color:#2e9a3a;line-height:9px;height:9px">#</div>
<div class="t " style="left:940px;top:273.80px;font-size:8px;color:#111">PlayChildre</div>
<svg style="left:929.6px;top:283.8px" width="8" height="9" viewBox="0 0 16 18"><path d="M1.500 1h9.500l3.500 3.500V17h-13z" fill="#f2f2f2" stroke="#a2a2a2" stroke-width=".8"/></svg><div class="t b" style="left:931.4px;top:284.1px;font-size:6.500px;color:#2e9a3a;line-height:9px;height:9px">#</div>
<div class="t " style="left:940px;top:283.80px;font-size:8px;color:#111">PlayScriptE</div>
<svg style="left:929.6px;top:293.8px" width="8" height="9" viewBox="0 0 16 18"><path d="M1.500 1h9.500l3.500 3.500V17h-13z" fill="#f2f2f2" stroke="#a2a2a2" stroke-width=".8"/></svg><div class="t b" style="left:931.4px;top:294.1px;font-size:6.500px;color:#2e9a3a;line-height:9px;height:9px">#</div>
<div class="t " style="left:940px;top:293.80px;font-size:8px;color:#111">PositionsC</div>
<svg style="left:929.6px;top:303.8px" width="8" height="9" viewBox="0 0 16 18"><path d="M1.500 1h9.500l3.500 3.500V17h-13z" fill="#f2f2f2" stroke="#a2a2a2" stroke-width=".8"/></svg><div class="t b" style="left:931.4px;top:304.1px;font-size:6.500px;color:#2e9a3a;line-height:9px;height:9px">#</div>
<div class="t " style="left:940px;top:303.80px;font-size:8px;color:#111">PPS_Exam</div>
<div class="arrd" style="left:912.7px;top:316.6px"></div>
<svg style="left:920.5px;top:314.7px" width="9" height="7.200" viewBox="0 0 18 14.400"><path d="M1 13V2.200c0-.6.400-1 1-1h4.200l1.600 1.800h6.400c.6 0 1 .4 1 1v1.800" fill="#4a4a4a" stroke="#4a4a4a" stroke-width="1"/><path d="M1 13.400 4 6h13.500l-3 7.400z" fill="#565656"/><path d="M4.800 7.200h11" stroke="#d8d8d8" stroke-width=".9"/></svg>
<div class="t " style="left:931.4px;top:313.80px;font-size:8px;color:#111">Texture</div>
<div class="abs" style="left:929.3000000000001px;top:324.0px;width:8.600px;height:8.600px;background:#0a0a14"></div>
<div class="t " style="left:940px;top:323.80px;font-size:8px;color:#111">Lightning5</div>
<div class="abs" style="left:929.3000000000001px;top:336.8px;width:8.600px;height:3px;background:#222"></div>
<div class="t " style="left:940px;top:333.80px;font-size:8px;color:#111">Sci-Fi Nur</div>
<div class="abs" style="left:929.3000000000001px;top:345.8px;width:8.600px;height:5px;background:#d2d2d2"></div>
<div class="t " style="left:940px;top:343.80px;font-size:8px;color:#111">Sci-Fi Tra</div>
<div class="abs" style="left:930.6px;top:355.3px;width:6px;height:6px;border-radius:3px;background:#d4d4d4"></div>
<div class="t " style="left:940px;top:353.80px;font-size:8px;color:#111">Smoke (96</div>
<svg style="left:921.0px;top:363.8px" width="8" height="9" viewBox="0 0 16 18"><path d="M1.500 1h9.500l3.500 3.500V17h-13z" fill="#f6f6f6" stroke="#a2a2a2" stroke-width=".8"/><rect x="3" y="8" width="10" height="8" rx="1" fill="#e8324a"/><path d="M5.500 14c2-1 3.500-3.500 3-5M5.500 11.500c2 0 4 1 5 2" stroke="#fff" stroke-width="1" fill="none"/></svg>
<div class="t " style="left:931.4px;top:363.80px;font-size:8px;color:#111">Guide</div>
<div class="arrr" style="left:905.5px;top:375.7px"></div>
<svg style="left:911.9px;top:374.7px" width="9" height="7.200" viewBox="0 0 18 14.400"><path d="M1 13.400V2c0-.6.400-1 1-1h4.400l1.700 1.900H16c.6 0 1 .4 1 1v9.500z" fill="#505050"/></svg>
<div class="t " style="left:922.8px;top:373.80px;font-size:8px;color:#111">ScreenshotUtil</div>
<div class="arrr" style="left:905.5px;top:385.7px"></div>
<svg style="left:911.9px;top:384.7px" width="9" height="7.200" viewBox="0 0 18 14.400"><path d="M1 13.400V2c0-.6.400-1 1-1h4.400l1.700 1.900H16c.6 0 1 .4 1 1v9.500z" fill="#505050"/></svg>
<div class="t " style="left:922.8px;top:383.80px;font-size:8px;color:#111">Scripts</div>
<div class="arrr" style="left:896.5px;top:395.7px"></div>
<svg style="left:903.1px;top:394.7px" width="9" height="7.200" viewBox="0 0 18 14.400"><path d="M1 13.400V2c0-.6.400-1 1-1h4.400l1.700 1.900H16c.6 0 1 .4 1 1v9.500z" fill="#505050"/></svg>
<div class="t b" style="left:914.7px;top:393.80px;font-size:8px;color:#111">Packages</div>
</div></div>
<div class="abs" style="left:977.4px;top:45.5px;width:222.6px;height:615.5px;overflow:hidden;background:#c8c8c8"><div class="abs" style="left:-977.4px;top:-45.5px;width:1200px;height:675px">
<div class="tabbar" style="left:977.4px;top:45.5px;width:222.6px"><div class="tab" style="left:0;width:57.600px"></div></div>
<svg style="left:982.300px;top:48.300px" width="6.400" height="6.400" viewBox="0 0 13 13"><circle cx="6.500" cy="6.500" r="6" fill="#3a3a3a"/><rect x="5.600" y="5.500" width="1.800" height="4.500" fill="#cbcbcb"/><rect x="5.600" y="2.800" width="1.800" height="1.800" fill="#cbcbcb"/></svg>
<div class="t " style="left:991.5px;top:47.20px;font-size:7.800px;color:#222">Inspector</div>
<div class="t " style="left:1040.3px;top:47.20px;font-size:7.800px;color:#1e1e1e">Asset Store Uploader</div>
<svg style="left:1176.6px;top:47.5px" width="6" height="7.500" viewBox="0 0 12 15"><rect x="1" y="6.500" width="10" height="7.500" rx="1" fill="none" stroke="#777" stroke-width="1.400"/><path d="M3.200 6.500V4.200a2.800 2.800 0 0 1 5.600 0" fill="none" stroke="#777" stroke-width="1.400"/></svg>
<svg style="left:1190.4px;top:48.3px" width="2" height="7" viewBox="0 0 2 7"><rect x=".4" y=".2" width="1.2" height="1.2" fill="#555"/><rect x=".4" y="2.7" width="1.2" height="1.2" fill="#555"/><rect x=".4" y="5.2" width="1.2" height="1.2" fill="#555"/></svg>
<div class="abs" style="left:1190px;top:57.500px;width:10px;height:603.500px;background:#c1c1c1"></div>
<div class="abs" style="left:1192.500px;top:68.500px;width:5.800px;height:362px;background:#a9a9a9;border-radius:3px"></div>
<div class="abs" style="left:1192.700px;top:61.500px;width:0;height:0;border-left:2.600px solid transparent;border-right:2.600px solid transparent;border-bottom:3.200px solid #6a6a6a"></div>
<div class="arr" style="left:1192.700px;top:641.500px;border-top-color:#5a5a5a"></div>
<svg style="left:981.300px;top:63.400px;opacity:1" width="13" height="14" viewBox="0 0 17 18"><path d="M8.5 1.200 15.500 4.800v8.400L8.500 16.800 1.500 13.200V4.800z" fill="none" stroke="#8a8a8a" stroke-width="1.300" stroke-linejoin="round"/><path d="M1.500 4.800l7 3.700 7-3.700M8.500 8.500v8.300" fill="none" stroke="#8a8a8a" stroke-width="1.200"/></svg>
<div class="arr" style="left:994.300px;top:76.500px;border-top-color:#555;border-left-width:2.200px;border-right-width:2.200px;border-top-width:2.800px"></div>
<div class="cb" style="left:1006.4px;top:65px;width:7.400px;height:7.400px;background:#e4e4e4"></div>
<div class="fld" style="left:1019px;top:64px;width:122.200px;height:9.500px"></div>
<div class="t b" style="left:1021px;top:64.70px;font-size:7.800px;color:#111">Particle System</div>
<div class="cb" style="left:1144.4px;top:65px;width:7.400px;height:7.400px;background:#e4e4e4"></div>
<div class="t " style="left:1155px;top:64.70px;font-size:7.800px;color:#111">Static</div>
<div class="arr" style="left:1183px;top:67.500px"></div>
<div class="t " style="left:1003.8px;top:79.40px;font-size:7.800px;color:#111">Tag</div>
<div class="dd" style="left:1019.500px;top:79.300px;width:72.200px;height:9.200px"></div>
<div class="t " style="left:1021.7px;top:79.20px;font-size:7.800px;color:#111">Untagged</div>
<div class="arr" style="left:1083.300px;top:82.600px"></div>
<div class="t " style="left:1100px;top:79.40px;font-size:7.800px;color:#111">Layer</div>
<div class="dd" style="left:1122.800px;top:79.300px;width:65.800px;height:9.200px"></div>
<div class="t " style="left:1125px;top:79.20px;font-size:7.800px;color:#111">Default</div>
<div class="arr" style="left:1180.300px;top:82.600px"></div>
<div class="abs" style="left:977.4px;top:94.8px;width:212.600px;height:13.800px;background:#cbcbcb;border-top:.8px solid #9d9d9d"></div><div class="arrd" style="left:980.800px;top:100.0px"></div><svg style="left:990px;top:97.500px" width="9.500" height="9.500" viewBox="0 0 19 19"><path d="M9.500 9.500V3" stroke="#3aa43a" stroke-width="1.800"/><path d="M9.500 9.500 3.500 14.500" stroke="#2b6fdc" stroke-width="1.800"/><path d="M9.500 9.500 15.500 14.500" stroke="#d63a2f" stroke-width="1.800"/><path d="M9.500 1l2.300 3.500H7.200z" fill="#3aa43a"/><path d="M1.800 16l1-4 2.800 3.200z" fill="#2b6fdc"/><path d="M17.200 16l-1-4-2.800 3.200z" fill="#d63a2f"/></svg><div class="t b" style="left:1014.8px;top:97.00px;font-size:7.800px;color:#111">Transform</div><svg style="left:1155.500px;top:98.6px" width="6.400" height="6.400" viewBox="0 0 13 13"><circle cx="6.500" cy="6.500" r="6" fill="#4a4a4a"/><path d="M4.500 5a2 2 0 1 1 3 1.700c-.7.400-1 .8-1 1.500" stroke="#cbcbcb" stroke-width="1.400" fill="none"/><rect x="5.800" y="9.300" width="1.500" height="1.500" fill="#cbcbcb"/></svg><svg style="left:1167.500px;top:98.6px" width="7" height="6.400" viewBox="0 0 14 13"><path d="M1 3.500h12M1 9.500h12" stroke="#4a4a4a" stroke-width="1.200"/><rect x="8" y="1.500" width="2.400" height="4" fill="#4a4a4a"/><rect x="3.500" y="7.500" width="2.400" height="4" fill="#4a4a4a"/></svg><svg style="left:1182.7px;top:98.3px" width="2" height="7" viewBox="0 0 2 7"><rect x=".4" y=".2" width="1.2" height="1.2" fill="#555"/><rect x=".4" y="2.7" width="1.2" height="1.2" fill="#555"/><rect x=".4" y="5.2" width="1.2" height="1.2" fill="#555"/></svg>
<div class="t " style="left:989.8px;top:111.80px;font-size:7.800px;color:#111">Position</div>
<div class="t " style="left:1067.4px;top:111.80px;font-size:7.800px;color:#111">X</div>
<div class="fld" style="left:1074.3px;top:112.2px;width:29.800px;height:9px"></div>
<div class="t " style="left:1076.3px;top:111.80px;font-size:7.800px;color:#111">0</div>
<div class="t " style="left:1110.2px;top:111.80px;font-size:7.800px;color:#111">Y</div>
<div class="fld" style="left:1117px;top:112.2px;width:29.800px;height:9px"></div>
<div class="t " style="left:1119px;top:111.80px;font-size:7.800px;color:#111">0</div>
<div class="t " style="left:1152.3px;top:111.80px;font-size:7.800px;color:#111">Z</div>
<div class="fld" style="left:1159px;top:112.2px;width:29.800px;height:9px"></div>
<div class="t " style="left:1161px;top:111.80px;font-size:7.800px;color:#111">0</div>
<div class="t " style="left:989.8px;top:124.30px;font-size:7.800px;color:#111">Rotation</div>
<div class="t " style="left:1067.4px;top:124.30px;font-size:7.800px;color:#111">X</div>
<div class="fld" style="left:1074.3px;top:124.69999999999999px;width:29.800px;height:9px"></div>
<div class="t " style="left:1076.3px;top:124.30px;font-size:7.800px;color:#111">0</div>
<div class="t " style="left:1110.2px;top:124.30px;font-size:7.800px;color:#111">Y</div>
<div class="fld" style="left:1117px;top:124.69999999999999px;width:29.800px;height:9px"></div>
<div class="t " style="left:1119px;top:124.30px;font-size:7.800px;color:#111">0</div>
<div class="t " style="left:1152.3px;top:124.30px;font-size:7.800px;color:#111">Z</div>
<div class="fld" style="left:1159px;top:124.69999999999999px;width:29.800px;height:9px"></div>
<div class="t " style="left:1161px;top:124.30px;font-size:7.800px;color:#111">0</div>
<div class="t " style="left:989.8px;top:136.80px;font-size:7.800px;color:#111">Scale</div>
<div class="t " style="left:1067.4px;top:136.80px;font-size:7.800px;color:#111">X</div>
<div class="fld" style="left:1074.3px;top:137.2px;width:29.800px;height:9px"></div>
<div class="t " style="left:1076.3px;top:136.80px;font-size:7.800px;color:#111">1</div>
<div class="t " style="left:1110.2px;top:136.80px;font-size:7.800px;color:#111">Y</div>
<div class="fld" style="left:1117px;top:137.2px;width:29.800px;height:9px"></div>
<div class="t " style="left:1119px;top:136.80px;font-size:7.800px;color:#111">1</div>
<div class="t " style="left:1152.3px;top:136.80px;font-size:7.800px;color:#111">Z</div>
<div class="fld" style="left:1159px;top:137.2px;width:29.800px;height:9px"></div>
<div class="t " style="left:1161px;top:136.80px;font-size:7.800px;color:#111">1</div>
<svg style="left:1052.500px;top:138.700px" width="8" height="6" viewBox="0 0 16 12"><rect x="1" y="3" width="7.500" height="6" rx="3" fill="none" stroke="#777" stroke-width="1.300"/><rect x="7.500" y="3" width="7.500" height="6" rx="3" fill="none" stroke="#777" stroke-width="1.300"/></svg>
<div class="abs" style="left:977.4px;top:152.6px;width:212.600px;height:13.800px;background:#cbcbcb;border-top:.8px solid #9d9d9d"></div><div class="arrd" style="left:980.800px;top:157.79999999999998px"></div><svg style="left:990.500px;top:155px" width="8.500" height="9.500" viewBox="0 0 17 19"><circle cx="8.500" cy="14" r="3.600" fill="#1b6fe0"/><circle cx="8.500" cy="7.200" r="2" fill="#1b6fe0"/><circle cx="3.800" cy="8.500" r="1.700" fill="#1b6fe0"/><circle cx="13.200" cy="8.500" r="1.700" fill="#1b6fe0"/><circle cx="2.500" cy="3.200" r="1.300" fill="#1b6fe0"/><circle cx="14.500" cy="3.200" r="1.300" fill="#1b6fe0"/><circle cx="8.500" cy="2" r="1.300" fill="#1b6fe0"/></svg><div class="t b" style="left:1014.8px;top:154.80px;font-size:7.800px;color:#111">Particle System</div><svg style="left:1155.500px;top:156.4px" width="6.400" height="6.400" viewBox="0 0 13 13"><circle cx="6.500" cy="6.500" r="6" fill="#4a4a4a"/><path d="M4.500 5a2 2 0 1 1 3 1.700c-.7.400-1 .8-1 1.500" stroke="#cbcbcb" stroke-width="1.400" fill="none"/><rect x="5.800" y="9.300" width="1.500" height="1.500" fill="#cbcbcb"/></svg><svg style="left:1167.500px;top:156.4px" width="7" height="6.400" viewBox="0 0 14 13"><path d="M1 3.500h12M1 9.500h12" stroke="#4a4a4a" stroke-width="1.200"/><rect x="8" y="1.500" width="2.400" height="4" fill="#4a4a4a"/><rect x="3.500" y="7.500" width="2.400" height="4" fill="#4a4a4a"/></svg><svg style="left:1182.7px;top:156.1px" width="2" height="7" viewBox="0 0 2 7"><rect x=".4" y=".2" width="1.2" height="1.2" fill="#555"/><rect x=".4" y="2.7" width="1.2" height="1.2" fill="#555"/><rect x=".4" y="5.2" width="1.2" height="1.2" fill="#555"/></svg>
<div class="abs" style="left:1120.600px;top:169.300px;width:68px;height:10px;background:#e2e2e2;border-radius:1.500px;box-shadow:0 0 0 .5px #a6a6a6"></div>
<div class="t " style="left:1131.8px;top:169.70px;font-size:7.800px;color:#111">Open Editor...</div>
<div class="abs" style="left:980.7px;top:184px;width:208.3px;height:463.500px;background:#b4b4b4"></div>
<div class="abs" style="left:980.7px;top:184px;width:208.3px;height:16.200px;background:#a1a1a1;box-shadow:0 0 0 .5px #8a8a8a"></div>
<svg style="left:983px;top:185.800px" width="13" height="12.500" viewBox="0 0 26 25"><rect x=".5" y=".5" width="25" height="24" rx="3.500" fill="#454545"/><g fill="#c9c9c9"><rect x="3.500" y="6" width="3.500" height="5"/><rect x="8.500" y="6" width="3.500" height="5"/><rect x="13.500" y="6" width="3.500" height="5"/><rect x="18.500" y="6" width="3.500" height="5"/><rect x="3.500" y="14" width="3.500" height="5"/><rect x="8.500" y="14" width="3.500" height="5"/><rect x="13.500" y="14" width="3.500" height="5"/><rect x="18.500" y="14" width="3.500" height="5"/></g></svg>
<div class="t b ps" style="left:999.3px;top:185.40px;color:#111">Particle System</div>
<svg style="left:1170.300px;top:191.300px" width="8" height="8" viewBox="0 0 16 16"><circle cx="8" cy="8" r="7.500" fill="#f4f4f4"/><rect x="7" y="3.500" width="2" height="6" fill="#555"/><rect x="7" y="10.800" width="2" height="2" fill="#555"/></svg>
<svg style="left:1182.300px;top:192.500px" width="6" height="6" viewBox="0 0 12 12"><path d="M6 0l1.500 4.500L12 6 7.500 7.500 6 12 4.500 7.500 0 6l4.500-1.500z" fill="#222"/></svg>
<div class="t ps" style="left:983px;top:202.65px;color:#161616">Duration</div>
<div class="fld" style="left:1056.6px;top:203.30px;width:129.200px;height:7.200px"></div>
<div class="t ps" style="left:1058.1px;top:202.65px;color:#161616">5</div>
<div class="t ps" style="left:983px;top:212.03px;color:#161616">Looping</div>
<div class="cb" style="left:1057.0px;top:212.975px;width:6.400px;height:6.400px;background:#d9d9d9"></div><svg style="left:1057.7px;top:213.875px" width="5" height="4.600" viewBox="0 0 12 11"><path d="M1.500 6l3 3.200L10.500 1.500" fill="none" stroke="#2a2a2a" stroke-width="1.500"/></svg>
<div class="t ps" style="left:983px;top:221.40px;color:#161616">Prewarm</div>
<div class="cb" style="left:1057.0px;top:222.35px;width:6.400px;height:6.400px;background:#d9d9d9"></div>
<div class="t ps" style="left:983px;top:230.78px;color:#161616">Start Delay</div>
<div class="fld" style="left:1056.6px;top:231.43px;width:121px;height:7.200px"></div>
<div class="t ps" style="left:1058.1px;top:230.78px;color:#161616">0</div>
<div class="arr" style="left:1180px;top:233.72px;border-left-width:2.300px;border-right-width:2.300px;border-top-width:3px"></div>
<div class="t ps" style="left:983px;top:240.15px;color:#161616">Start Lifetime</div>
<div class="fld" style="left:1056.6px;top:240.80px;width:121px;height:7.200px"></div>
<div class="t ps" style="left:1058.1px;top:240.15px;color:#161616">6.374103</div>
<div class="arr" style="left:1180px;top:243.10px;border-left-width:2.300px;border-right-width:2.300px;border-top-width:3px"></div>
<div class="t ps" style="left:983px;top:249.53px;color:#161616">Start Speed</div>
<div class="fld" style="left:1056.6px;top:250.18px;width:121px;height:7.200px"></div>
<div class="t ps" style="left:1058.1px;top:249.53px;color:#161616">0</div>
<div class="arr" style="left:1180px;top:252.47px;border-left-width:2.300px;border-right-width:2.300px;border-top-width:3px"></div>
<div class="t ps" style="left:983px;top:258.90px;color:#161616">3D Start Size</div>
<div class="cb" style="left:1057.0px;top:259.84999999999997px;width:6.400px;height:6.400px;background:#d9d9d9"></div>
<div class="t ps" style="left:983px;top:268.27px;color:#161616">Start Size</div>
<div class="fld" style="left:1056.6px;top:268.92px;width:121px;height:7.200px"></div>
<div class="t ps" style="left:1058.1px;top:268.27px;color:#161616">1</div>
<div class="arr" style="left:1180px;top:271.22px;border-left-width:2.300px;border-right-width:2.300px;border-top-width:3px"></div>
<div class="t ps" style="left:983px;top:277.65px;color:#161616">3D Start Rotation</div>
<div class="cb" style="left:1057.0px;top:278.59999999999997px;width:6.400px;height:6.400px;background:#d9d9d9"></div>
<div class="t ps" style="left:983px;top:287.02px;color:#161616">Start Rotation</div>
<div class="fld" style="left:1056.6px;top:287.67px;width:121px;height:7.200px"></div>
<div class="t ps" style="left:1058.1px;top:287.02px;color:#161616">0</div>
<div class="arr" style="left:1180px;top:289.97px;border-left-width:2.300px;border-right-width:2.300px;border-top-width:3px"></div>
<div class="t ps" style="left:983px;top:296.40px;color:#161616">Flip Rotation</div>
<div class="fld" style="left:1056.6px;top:297.05px;width:129.200px;height:7.200px"></div>
<div class="t ps" style="left:1058.1px;top:296.40px;color:#161616">0</div>
<div class="t ps" style="left:983px;top:305.77px;color:#161616">Start Color</div>
<div class="abs" style="left:1056.6px;top:306.72px;width:121px;height:6px;background:#fff"></div>
<div class="arr" style="left:1180px;top:308.72px;border-left-width:2.300px;border-right-width:2.300px;border-top-width:3px"></div>
<div class="t ps" style="left:983px;top:315.15px;color:#161616">Gravity Modifier</div>
<div class="fld" style="left:1056.6px;top:315.80px;width:121px;height:7.200px"></div>
<div class="t ps" style="left:1058.1px;top:315.15px;color:#161616">0</div>
<div class="arr" style="left:1180px;top:318.10px;border-left-width:2.300px;border-right-width:2.300px;border-top-width:3px"></div>
<div class="t ps" style="left:983px;top:324.52px;color:#161616">Simulation Space</div>
<div class="dd" style="left:1056.6px;top:325.17px;width:129.200px;height:7.200px;background:#dcdcdc"></div>
<div class="t ps" style="left:1058.1px;top:324.52px;color:#161616">Local</div>
<div class="arr" style="left:1178px;top:327.47px;border-left-width:2.300px;border-right-width:2.300px;border-top-width:3px"></div>
<div class="t ps" style="left:983px;top:333.90px;color:#161616">Simulation Speed</div>
<div class="fld" style="left:1056.6px;top:334.55px;width:129.200px;height:7.200px"></div>
<div class="t ps" style="left:1058.1px;top:333.90px;color:#161616">1</div>
<div class="t ps" style="left:983px;top:343.27px;color:#161616">Delta Time</div>
<div class="dd" style="left:1056.6px;top:343.92px;width:129.200px;height:7.200px;background:#dcdcdc"></div>
<div class="t ps" style="left:1058.1px;top:343.27px;color:#161616">Scaled</div>
<div class="arr" style="left:1178px;top:346.22px;border-left-width:2.300px;border-right-width:2.300px;border-top-width:3px"></div>
<div class="t ps" style="left:983px;top:352.65px;color:#161616">Scaling Mode</div>
<div class="dd" style="left:1056.6px;top:353.30px;width:129.200px;height:7.200px;background:#dcdcdc"></div>
<div class="t ps" style="left:1058.1px;top:352.65px;color:#161616">Local</div>
<div class="arr" style="left:1178px;top:355.60px;border-left-width:2.300px;border-right-width:2.300px;border-top-width:3px"></div>
<div class="t ps" style="left:983px;top:362.02px;color:#161616">Play On Awake*</div>
<div class="cb" style="left:1057.0px;top:362.97499999999997px;width:6.400px;height:6.400px;background:#d9d9d9"></div><svg style="left:1057.7px;top:363.87499999999994px" width="5" height="4.600" viewBox="0 0 12 11"><path d="M1.500 6l3 3.200L10.500 1.500" fill="none" stroke="#2a2a2a" stroke-width="1.500"/></svg>
<div class="t ps" style="left:983px;top:371.40px;color:#161616">Emitter Velocity Mode</div>
<div class="dd" style="left:1056.6px;top:372.05px;width:129.200px;height:7.200px;background:#dcdcdc"></div>
<div class="t ps" style="left:1058.1px;top:371.40px;color:#161616">Rigidbody</div>
<div class="arr" style="left:1178px;top:374.35px;border-left-width:2.300px;border-right-width:2.300px;border-top-width:3px"></div>
<div class="t ps" style="left:983px;top:380.77px;color:#161616">Max Particles</div>
<div class="fld" style="left:1056.6px;top:381.42px;width:129.200px;height:7.200px"></div>
<div class="t ps" style="left:1058.1px;top:380.77px;color:#161616">1000</div>
<div class="t ps" style="left:983px;top:390.15px;color:#161616">Auto Random Seed</div>
<div class="cb" style="left:1057.0px;top:391.09999999999997px;width:6.400px;height:6.400px;background:#d9d9d9"></div><svg style="left:1057.7px;top:391.99999999999994px" width="5" height="4.600" viewBox="0 0 12 11"><path d="M1.500 6l3 3.200L10.500 1.500" fill="none" stroke="#2a2a2a" stroke-width="1.500"/></svg>
<div class="t ps" style="left:983px;top:399.52px;color:#161616">Stop Action</div>
<div class="dd" style="left:1056.6px;top:400.17px;width:129.200px;height:7.200px;background:#dcdcdc"></div>
<div class="t ps" style="left:1058.1px;top:399.52px;color:#161616">None</div>
<div class="arr" style="left:1178px;top:402.47px;border-left-width:2.300px;border-right-width:2.300px;border-top-width:3px"></div>
<div class="t ps" style="left:983px;top:408.90px;color:#161616">Culling Mode</div>
<div class="dd" style="left:1056.6px;top:409.55px;width:129.200px;height:7.200px;background:#dcdcdc"></div>
<div class="t ps" style="left:1058.1px;top:408.90px;color:#161616">Automatic</div>
<div class="arr" style="left:1178px;top:411.85px;border-left-width:2.300px;border-right-width:2.300px;border-top-width:3px"></div>
<div class="t ps" style="left:983px;top:418.27px;color:#161616">Ring Buffer Mode</div>
<div class="dd" style="left:1056.6px;top:418.92px;width:129.200px;height:7.200px;background:#dcdcdc"></div>
<div class="t ps" style="left:1058.1px;top:418.27px;color:#161616">Disabled</div>
<div class="arr" style="left:1178px;top:421.22px;border-left-width:2.300px;border-right-width:2.300px;border-top-width:3px"></div>
<div class="abs" style="left:980.7px;top:428.10px;width:208.3px;height:9.300px;background:#a4a4a4;box-shadow:0 0 0 .5px #8c8c8c"></div>
<div class="cb" style="left:983.2px;top:429.8px;width:6px;height:6px;background:#cfcfcf"></div><svg style="left:983.9000000000001px;top:430.7px" width="4.800" height="4.400" viewBox="0 0 12 11"><path d="M1.500 6l3 3.200L10.500 1.500" fill="none" stroke="#2a2a2a" stroke-width="1.500"/></svg>
<div class="t ps" style="left:991.8px;top:428.20px;color:#161616">Emission</div>
<div class="abs" style="left:980.7px;top:438.10px;width:208.3px;height:9.300px;background:#a4a4a4;box-shadow:0 0 0 .5px #8c8c8c"></div>
<div class="cb" style="left:983.2px;top:439.8px;width:6px;height:6px;background:#cfcfcf"></div><svg style="left:983.9000000000001px;top:440.7px" width="4.800" height="4.400" viewBox="0 0 12 11"><path d="M1.500 6l3 3.200L10.500 1.500" fill="none" stroke="#2a2a2a" stroke-width="1.500"/></svg>
<div class="t ps" style="left:991.8px;top:438.20px;color:#161616">Shape</div>
<div class="abs" style="left:980.7px;top:448.10px;width:208.3px;height:9.300px;background:#a4a4a4;box-shadow:0 0 0 .5px #8c8c8c"></div>
<div class="cb" style="left:983.2px;top:449.8px;width:6px;height:6px;background:#cfcfcf"></div>
<div class="t ps" style="left:991.8px;top:448.20px;color:#161616">Velocity over Lifetime</div>
<div class="abs" style="left:980.7px;top:458.10px;width:208.3px;height:9.300px;background:#a4a4a4;box-shadow:0 0 0 .5px #8c8c8c"></div>
<div class="cb" style="left:983.2px;top:459.8px;width:6px;height:6px;background:#cfcfcf"></div>
<div class="t ps" style="left:991.8px;top:458.20px;color:#161616">Limit Velocity over Lifetime</div>
<div class="abs" style="left:980.7px;top:468.10px;width:208.3px;height:9.300px;background:#a4a4a4;box-shadow:0 0 0 .5px #8c8c8c"></div>
<div class="cb" style="left:983.2px;top:469.8px;width:6px;height:6px;background:#cfcfcf"></div>
<div class="t ps" style="left:991.8px;top:468.20px;color:#161616">Inherit Velocity</div>
<div class="abs" style="left:980.7px;top:478.10px;width:208.3px;height:9.300px;background:#a4a4a4;box-shadow:0 0 0 .5px #8c8c8c"></div>
<div class="cb" style="left:983.2px;top:479.8px;width:6px;height:6px;background:#cfcfcf"></div>
<div class="t ps" style="left:991.8px;top:478.20px;color:#161616">Lifetime by Emitter Speed</div>
<div class="abs" style="left:980.7px;top:488.10px;width:208.3px;height:9.300px;background:#a4a4a4;box-shadow:0 0 0 .5px #8c8c8c"></div>
<div class="cb" style="left:983.2px;top:489.8px;width:6px;height:6px;background:#cfcfcf"></div>
<div class="t ps" style="left:991.8px;top:488.20px;color:#161616">Force over Lifetime</div>
<div class="abs" style="left:980.7px;top:498.10px;width:208.3px;height:9.300px;background:#a4a4a4;box-shadow:0 0 0 .5px #8c8c8c"></div>
<div class="cb" style="left:983.2px;top:499.8px;width:6px;height:6px;background:#cfcfcf"></div><svg style="left:983.9000000000001px;top:500.7px" width="4.800" height="4.400" viewBox="0 0 12 11"><path d="M1.500 6l3 3.200L10.500 1.500" fill="none" stroke="#2a2a2a" stroke-width="1.500"/></svg>
<div class="t ps" style="left:991.8px;top:498.20px;color:#161616">Color over Lifetime</div>
<div class="abs" style="left:980.7px;top:508.10px;width:208.3px;height:9.300px;background:#a4a4a4;box-shadow:0 0 0 .5px #8c8c8c"></div>
<div class="cb" style="left:983.2px;top:509.79999999999995px;width:6px;height:6px;background:#cfcfcf"></div>
<div class="t ps" style="left:991.8px;top:508.20px;color:#161616">Color by Speed</div>
<div class="abs" style="left:980.7px;top:518.10px;width:208.3px;height:9.300px;background:#a4a4a4;box-shadow:0 0 0 .5px #8c8c8c"></div>
<div class="cb" style="left:983.2px;top:519.8px;width:6px;height:6px;background:#cfcfcf"></div>
<div class="t ps" style="left:991.8px;top:518.20px;color:#161616">Size over Lifetime</div>
<div class="abs" style="left:980.7px;top:528.10px;width:208.3px;height:9.300px;background:#a4a4a4;box-shadow:0 0 0 .5px #8c8c8c"></div>
<div class="cb" style="left:983.2px;top:529.8px;width:6px;height:6px;background:#cfcfcf"></div>
<div class="t ps" style="left:991.8px;top:528.20px;color:#161616">Size by Speed</div>
<div class="abs" style="left:980.7px;top:538.10px;width:208.3px;height:9.300px;background:#a4a4a4;box-shadow:0 0 0 .5px #8c8c8c"></div>
<div class="cb" style="left:983.2px;top:539.8px;width:6px;height:6px;background:#cfcfcf"></div>
<div class="t ps" style="left:991.8px;top:538.20px;color:#161616">Rotation over Lifetime</div>
<div class="abs" style="left:980.7px;top:548.10px;width:208.3px;height:9.300px;background:#a4a4a4;box-shadow:0 0 0 .5px #8c8c8c"></div>
<div class="cb" style="left:983.2px;top:549.8px;width:6px;height:6px;background:#cfcfcf"></div>
<div class="t ps" style="left:991.8px;top:548.20px;color:#161616">Rotation by Speed</div>
<div class="abs" style="left:980.7px;top:558.10px;width:208.3px;height:9.300px;background:#a4a4a4;box-shadow:0 0 0 .5px #8c8c8c"></div>
<div class="cb" style="left:983.2px;top:559.8px;width:6px;height:6px;background:#cfcfcf"></div>
<div class="t ps" style="left:991.8px;top:558.20px;color:#161616">External Forces</div>
<div class="abs" style="left:980.7px;top:568.10px;width:208.3px;height:9.300px;background:#a4a4a4;box-shadow:0 0 0 .5px #8c8c8c"></div>
<div class="cb" style="left:983.2px;top:569.8px;width:6px;height:6px;background:#cfcfcf"></div>
<div class="t ps" style="left:991.8px;top:568.20px;color:#161616">Noise</div>
<div class="abs" style="left:980.7px;top:578.10px;width:208.3px;height:9.300px;background:#a4a4a4;box-shadow:0 0 0 .5px #8c8c8c"></div>
<div class="cb" style="left:983.2px;top:579.8px;width:6px;height:6px;background:#cfcfcf"></div>
<div class="t ps" style="left:991.8px;top:578.20px;color:#161616">Collision</div>
<div class="abs" style="left:980.7px;top:588.10px;width:208.3px;height:9.300px;background:#a4a4a4;box-shadow:0 0 0 .5px #8c8c8c"></div>
<div class="cb" style="left:983.2px;top:589.8px;width:6px;height:6px;background:#cfcfcf"></div>
<div class="t ps" style="left:991.8px;top:588.20px;color:#161616">Triggers</div>
<div class="abs" style="left:980.7px;top:598.10px;width:208.3px;height:9.300px;background:#a4a4a4;box-shadow:0 0 0 .5px #8c8c8c"></div>
<div class="cb" style="left:983.2px;top:599.8px;width:6px;height:6px;background:#cfcfcf"></div>
<div class="t ps" style="left:991.8px;top:598.20px;color:#161616">Sub Emitters</div>
<div class="abs" style="left:980.7px;top:608.10px;width:208.3px;height:9.300px;background:#a4a4a4;box-shadow:0 0 0 .5px #8c8c8c"></div>
<div class="cb" style="left:983.2px;top:609.8px;width:6px;height:6px;background:#cfcfcf"></div><svg style="left:983.9000000000001px;top:610.6999999999999px" width="4.800" height="4.400" viewBox="0 0 12 11"><path d="M1.500 6l3 3.200L10.500 1.500" fill="none" stroke="#2a2a2a" stroke-width="1.500"/></svg>
<div class="t ps" style="left:991.8px;top:608.20px;color:#161616">Texture Sheet Animation</div>
<div class="abs" style="left:980.7px;top:618.10px;width:208.3px;height:9.300px;background:#a4a4a4;box-shadow:0 0 0 .5px #8c8c8c"></div>
<div class="cb" style="left:983.2px;top:619.8px;width:6px;height:6px;background:#cfcfcf"></div>
<div class="t ps" style="left:991.8px;top:618.20px;color:#161616">Lights</div>
<div class="abs" style="left:980.7px;top:628.10px;width:208.3px;height:9.300px;background:#a4a4a4;box-shadow:0 0 0 .5px #8c8c8c"></div>
<div class="cb" style="left:983.2px;top:629.8px;width:6px;height:6px;background:#cfcfcf"></div><svg style="left:983.9000000000001px;top:630.6999999999999px" width="4.800" height="4.400" viewBox="0 0 12 11"><path d="M1.500 6l3 3.200L10.500 1.500" fill="none" stroke="#2a2a2a" stroke-width="1.500"/></svg>
<div class="t ps" style="left:991.8px;top:628.20px;color:#161616">Trails</div>
<div class="abs" style="left:980.7px;top:638.10px;width:208.3px;height:9.300px;background:#a4a4a4;box-shadow:0 0 0 .5px #8c8c8c"></div>
<div class="cb" style="left:983.2px;top:639.8px;width:6px;height:6px;background:#cfcfcf"></div>
<div class="t ps" style="left:991.8px;top:638.20px;color:#161616">Custom Data</div>
<div class="abs" style="left:977.4px;top:647.500px;width:222.6px;height:13.500px;background:#cbcbcb;border-top:.6px solid #a2a2a2"></div>
<div class="t b" style="left:981.3px;top:650.20px;font-size:7.800px;color:#111">Particle System Curves</div>
<div class="abs" style="left:1071px;top:653px;width:117px;height:3.600px;background:#bcbcbc;border-radius:1px"></div>
<div class="abs" style="left:1190px;top:647.500px;width:10px;height:13.500px;background:#cbcbcb;border-top:.6px solid #a2a2a2"></div>
<svg style="left:1194px;top:651.3px" width="2" height="7" viewBox="0 0 2 7"><rect x=".4" y=".2" width="1.2" height="1.2" fill="#555"/><rect x=".4" y="2.7" width="1.2" height="1.2" fill="#555"/><rect x=".4" y="5.2" width="1.2" height="1.2" fill="#555"/></svg>
</div></div>
<svg style="left:1136px;top:663px;z-index:5" width="62" height="11" viewBox="0 0 62 11"><path d="M5 1.500c1.500 0 2.500 1 2.500 2.500 0 1-.5 1.500-1 2v1.500h1.800V9.500H6V8.500H4.500V10H2.800V6.500c-.8-.500-1.300-1.300-1.300-2.400 0-1.500 1.300-2.600 3.500-2.600z" fill="#e0a81e"/><path d="M8 2.500l1.300-.8M8.300 4.500h1.500" stroke="#e0a81e" stroke-width=".7"/><g fill="none" stroke="#666" stroke-width=".9"><ellipse cx="22" cy="3" rx="3.200" ry="1.300"/><path d="M18.800 3v5c0 .7 1.400 1.300 3.200 1.300s3.200-.6 3.200-1.300V3M18.800 5.500c0 .7 1.400 1.300 3.200 1.300s3.200-.6 3.200-1.300"/><circle cx="39.500" cy="5.500" r="3.800"/><circle cx="39.500" cy="5.500" r="1.500" fill="#666"/><circle cx="56" cy="5.500" r="3.800"/><path d="M54.200 5.500l1.300 1.400 2.400-2.700"/></g></svg>
<div id="status"></div>
</div>
</body></html>
